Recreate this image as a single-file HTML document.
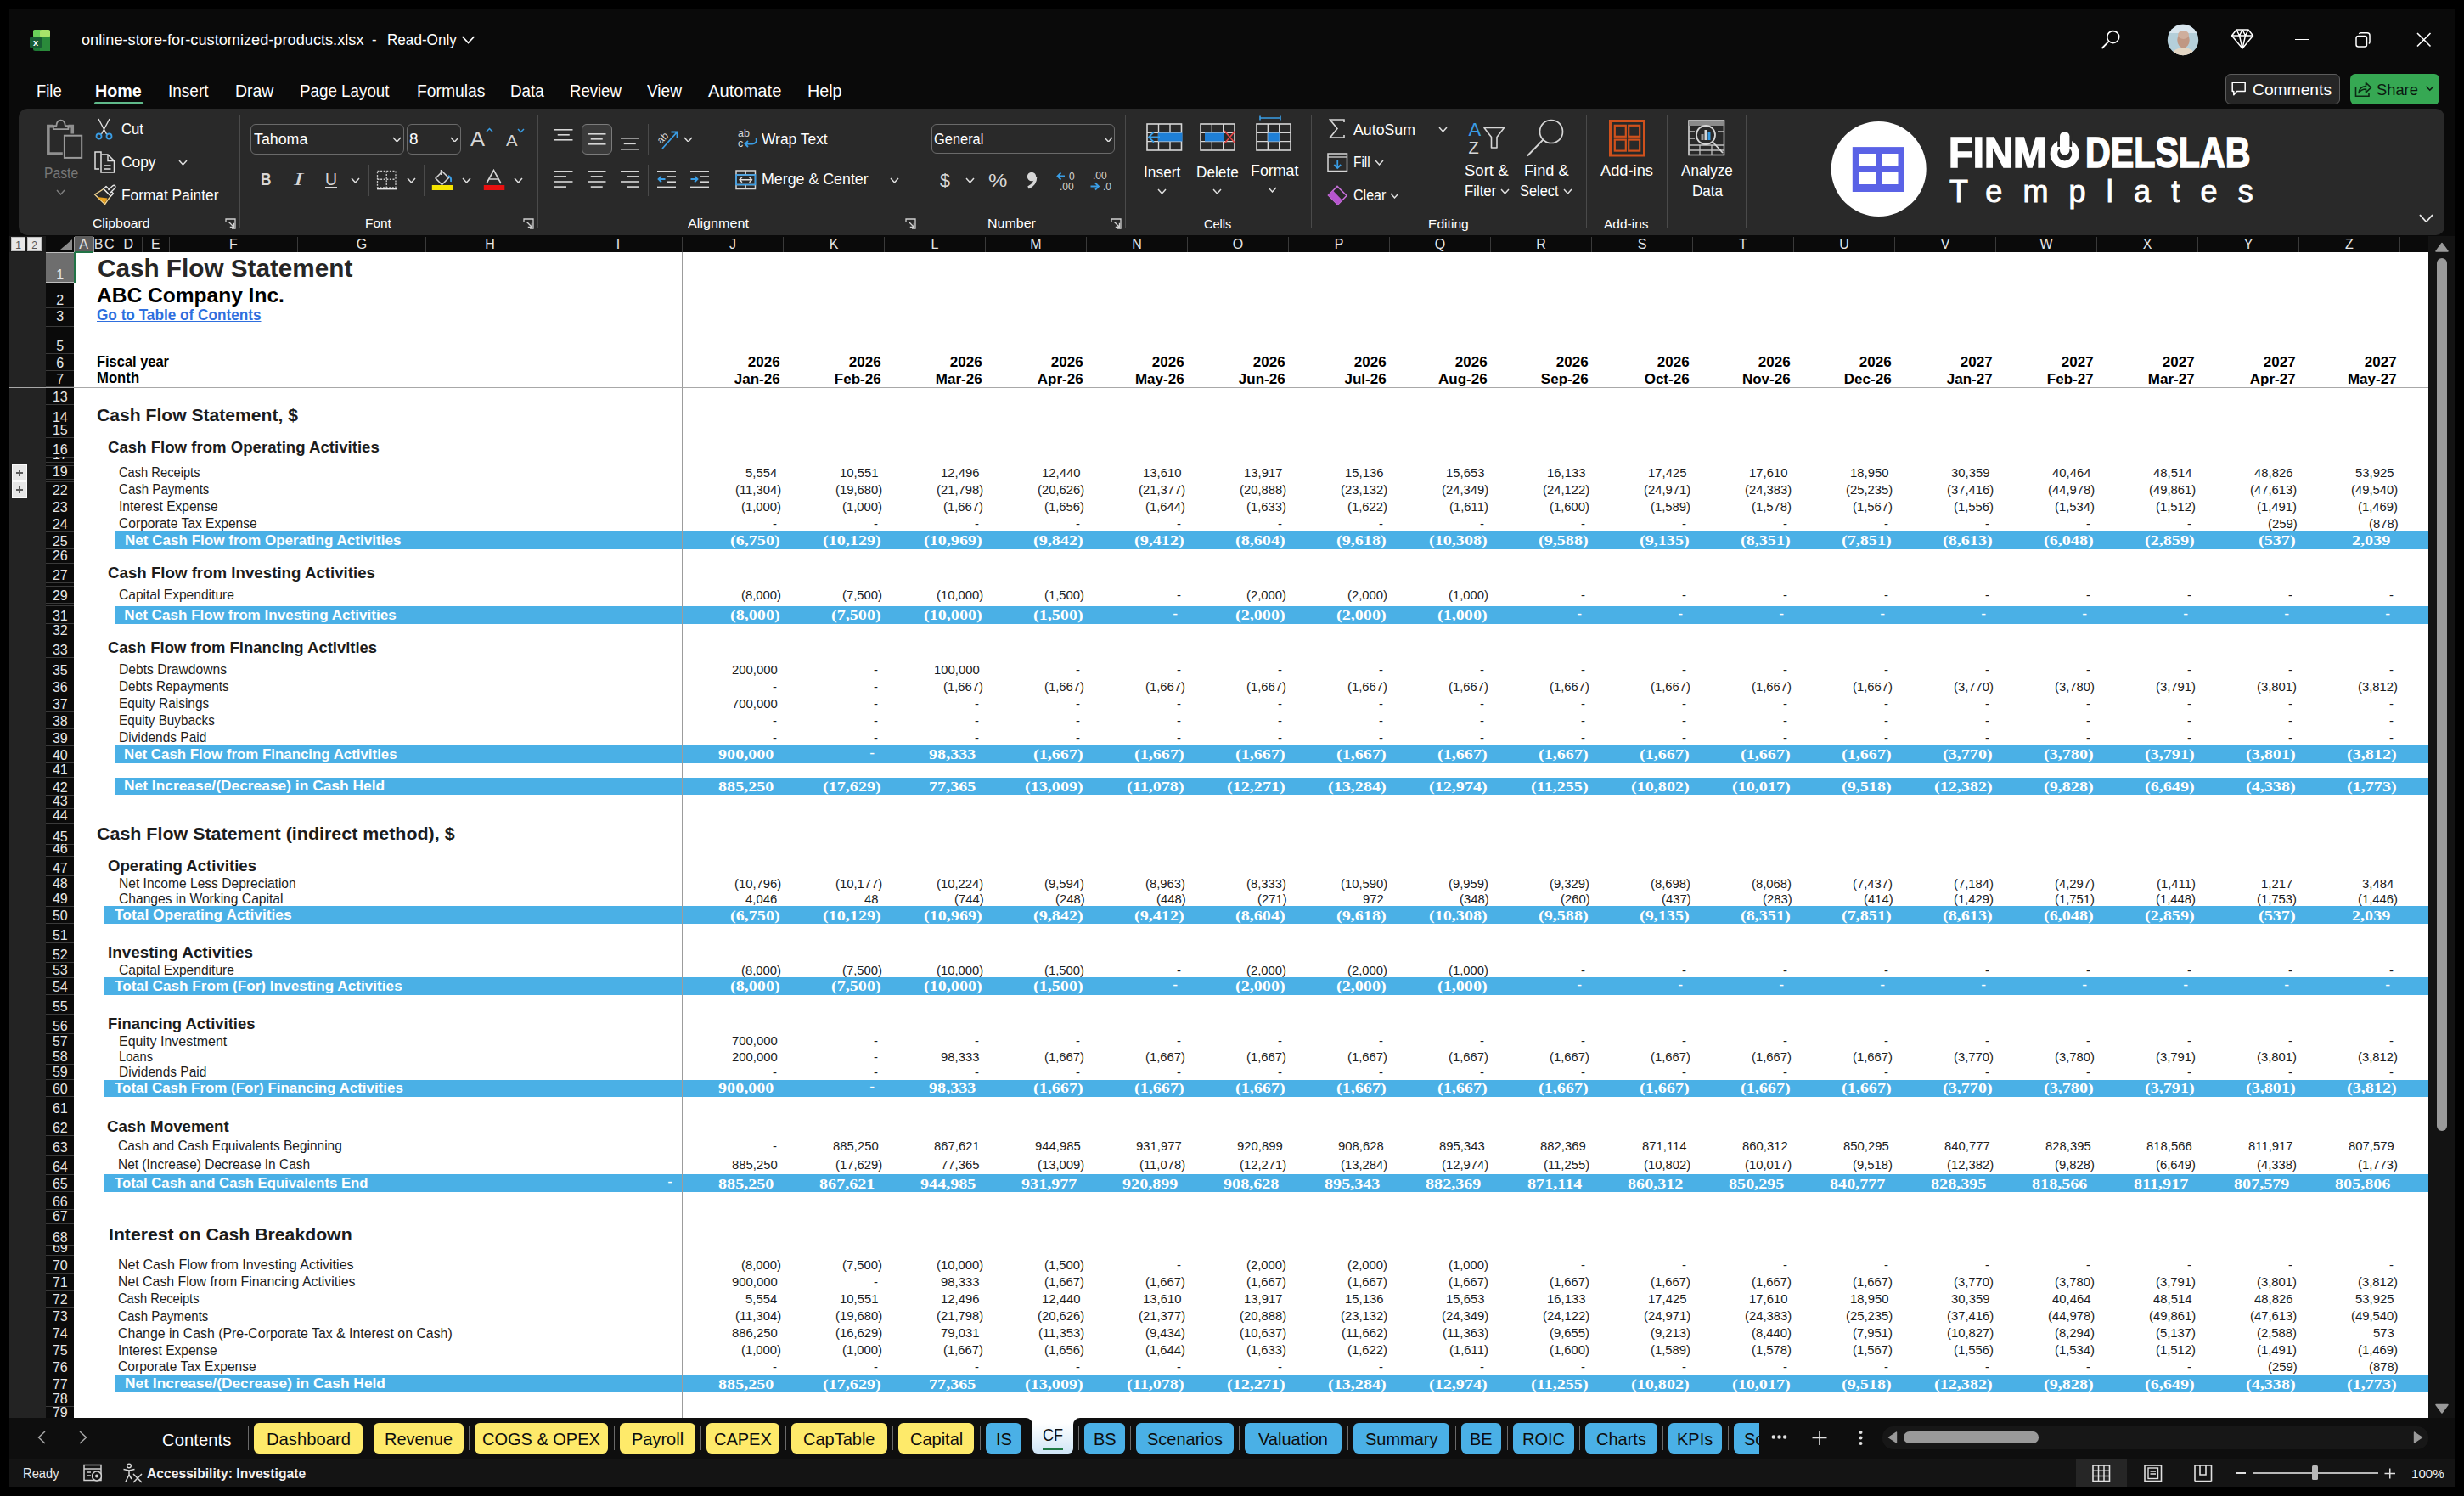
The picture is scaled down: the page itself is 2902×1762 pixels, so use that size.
<!DOCTYPE html><html><head><meta charset="utf-8"><title>Excel</title><style>
html,body{margin:0;padding:0;}body{width:2902px;height:1762px;overflow:hidden;position:relative;background:#000;font-family:"Liberation Sans",sans-serif;}
#root>div,#root>svg{position:absolute;}
</style></head><body><div id="root">
<div style="left:11.00px;top:11.00px;width:2880.00px;height:1740.00px;background:#0a0a0a;"></div>
<svg style="left:34.00px;top:34.00px;" width="26.00" height="27.00" viewBox="0 0 26.00 27.00">
<rect x="5" y="1" width="20" height="25" rx="2.5" fill="#1f7a36"/>
<rect x="5" y="1" width="10" height="9" rx="2" fill="#6ad15a"/>
<rect x="13" y="1" width="12" height="9" rx="2" fill="#a9e46a"/>
<rect x="13" y="9" width="12" height="17" fill="#2a8a3a"/>
<rect x="1" y="9" width="14" height="14" rx="2.5" fill="#185c33"/>
<text x="8" y="20" font-family="Liberation Sans" font-weight="700" font-size="11" fill="#fff" text-anchor="middle">x</text>
</svg>
<div style="left:95.50px;top:38.92px;font-family:'Liberation Sans', sans-serif;font-size:17.50px;font-weight:400;color:#ffffff;line-height:1;white-space:pre;transform:scaleX(1.0391);transform-origin:0 0;">online-store-for-customized-products.xlsx</div>
<div style="left:438.20px;top:38.92px;font-family:'Liberation Sans', sans-serif;font-size:17.50px;font-weight:400;color:#ffffff;line-height:1;white-space:pre;transform:scaleX(0.9437);transform-origin:0 0;">-</div>
<div style="left:455.90px;top:38.92px;font-family:'Liberation Sans', sans-serif;font-size:17.50px;font-weight:400;color:#ffffff;line-height:1;white-space:pre;transform:scaleX(0.9778);transform-origin:0 0;">Read-Only</div>
<svg style="left:543.00px;top:41.00px;" width="18.00" height="12.00" viewBox="0 0 18.00 12.00"><polyline points="1.5,2 8.5,9.5 15.5,2" fill="none" stroke="#fff" stroke-width="1.8"/></svg>
<svg style="left:2472.00px;top:34.00px;" width="26.00" height="26.00" viewBox="0 0 26.00 26.00"><circle cx="16.7" cy="9.6" r="7" fill="none" stroke="#fff" stroke-width="1.6"/><line x1="11.5" y1="14.8" x2="3.5" y2="23" stroke="#fff" stroke-width="1.8"/></svg>
<svg style="left:2552.00px;top:28.00px;" width="38.00" height="38.00" viewBox="0 0 38.00 38.00"><defs><clipPath id="avc"><circle cx="19" cy="19" r="18.2"/></clipPath></defs>
<g clip-path="url(#avc)"><rect x="0" y="0" width="38" height="38" fill="#b4cfda"/><rect x="0" y="0" width="38" height="11" fill="#d9e6ee"/>
<ellipse cx="19.5" cy="19" rx="7.2" ry="9.5" fill="#c09783"/><ellipse cx="19.5" cy="13" rx="6.4" ry="5" fill="#cfae9c"/>
<path d="M5 38 Q8 28 19.5 28 Q31 28 34 38 Z" fill="#e3d6c4"/></g></svg>
<svg style="left:2627.00px;top:33.00px;" width="28.00" height="26.00" viewBox="0 0 28.00 26.00"><path d="M7 2 H21 L26.5 9 L14 24 L1.5 9 Z M1.5 9 H26.5 M7 2 L10.5 9 L14 24 L17.5 9 L21 2 M10.5 9 L14 2 L17.5 9" fill="none" stroke="#fff" stroke-width="1.5" stroke-linejoin="round"/></svg>
<div style="left:2703.00px;top:45.50px;width:16.00px;height:1.50px;background:#fff;"></div>
<svg style="left:2773.00px;top:37.00px;" width="20.00" height="20.00" viewBox="0 0 20.00 20.00"><rect x="2" y="5.5" width="12.5" height="12.5" rx="2.5" fill="none" stroke="#fff" stroke-width="1.5"/><path d="M5.5 3 Q5.8 1.8 7.5 1.8 H15 Q18 1.8 18 4.8 V12.5 Q18 14 16.8 14.4" fill="none" stroke="#fff" stroke-width="1.5"/></svg>
<svg style="left:2845.00px;top:37.00px;" width="20.00" height="20.00" viewBox="0 0 20.00 20.00"><path d="M2 2 L17.5 17.5 M17.5 2 L2 17.5" stroke="#fff" stroke-width="1.6"/></svg>
<div style="left:42.60px;top:96.63px;font-family:'Liberation Sans', sans-serif;font-size:20.20px;font-weight:400;color:#ffffff;line-height:1;white-space:pre;transform:scaleX(0.9099);transform-origin:0 0;">File</div>
<div style="left:111.60px;top:96.63px;font-family:'Liberation Sans', sans-serif;font-size:20.20px;font-weight:700;color:#ffffff;line-height:1;white-space:pre;transform:scaleX(0.9769);transform-origin:0 0;">Home</div>
<div style="left:198.00px;top:96.63px;font-family:'Liberation Sans', sans-serif;font-size:20.20px;font-weight:400;color:#ffffff;line-height:1;white-space:pre;transform:scaleX(0.9406);transform-origin:0 0;">Insert</div>
<div style="left:277.20px;top:96.63px;font-family:'Liberation Sans', sans-serif;font-size:20.20px;font-weight:400;color:#ffffff;line-height:1;white-space:pre;transform:scaleX(0.9637);transform-origin:0 0;">Draw</div>
<div style="left:353.10px;top:96.63px;font-family:'Liberation Sans', sans-serif;font-size:20.20px;font-weight:400;color:#ffffff;line-height:1;white-space:pre;transform:scaleX(0.9305);transform-origin:0 0;">Page Layout</div>
<div style="left:491.00px;top:96.63px;font-family:'Liberation Sans', sans-serif;font-size:20.20px;font-weight:400;color:#ffffff;line-height:1;white-space:pre;transform:scaleX(0.9555);transform-origin:0 0;">Formulas</div>
<div style="left:600.60px;top:96.63px;font-family:'Liberation Sans', sans-serif;font-size:20.20px;font-weight:400;color:#ffffff;line-height:1;white-space:pre;transform:scaleX(0.9330);transform-origin:0 0;">Data</div>
<div style="left:670.50px;top:96.63px;font-family:'Liberation Sans', sans-serif;font-size:20.20px;font-weight:400;color:#ffffff;line-height:1;white-space:pre;transform:scaleX(0.9184);transform-origin:0 0;">Review</div>
<div style="left:761.80px;top:96.63px;font-family:'Liberation Sans', sans-serif;font-size:20.20px;font-weight:400;color:#ffffff;line-height:1;white-space:pre;transform:scaleX(0.9446);transform-origin:0 0;">View</div>
<div style="left:834.00px;top:96.63px;font-family:'Liberation Sans', sans-serif;font-size:20.20px;font-weight:400;color:#ffffff;line-height:1;white-space:pre;">Automate</div>
<div style="left:950.90px;top:96.63px;font-family:'Liberation Sans', sans-serif;font-size:20.20px;font-weight:400;color:#ffffff;line-height:1;white-space:pre;transform:scaleX(0.9776);transform-origin:0 0;">Help</div>
<div style="left:110.80px;top:119.90px;width:58.20px;height:3.10px;background:#5fb98a;border-radius:2px;"></div>
<div style="left:2621.40px;top:87.20px;width:134.40px;height:35.40px;background:#262626;box-sizing:border-box;border:1px solid #5c5c5c;border-radius:6px;"></div>
<svg style="left:2628.00px;top:96.00px;" width="19.00" height="18.00" viewBox="0 0 19.00 18.00"><path d="M1.2 1.2 H16.2 V11.5 H6.5 L2.8 15.8 V11.5 H1.2 Z" fill="none" stroke="#fff" stroke-width="1.5" stroke-linejoin="round"/></svg>
<div style="left:2652.80px;top:96.35px;font-family:'Liberation Sans', sans-serif;font-size:19.00px;font-weight:400;color:#ffffff;line-height:1;white-space:pre;transform:scaleX(1.0124);transform-origin:0 0;">Comments</div>
<div style="left:2768.00px;top:87.20px;width:105.20px;height:35.40px;background:#36a853;border-radius:6px;"></div>
<svg style="left:2773.00px;top:95.00px;" width="21.00" height="20.00" viewBox="0 0 21.00 20.00"><path d="M1.5 8 V18.2 H17 V14" fill="none" stroke="#0c2a14" stroke-width="1.6"/><path d="M5 14.5 Q6 7 13.5 6.5 V2.5 L19.5 8.2 L13.5 13.8 V10 Q8 10 5 14.5 Z" fill="none" stroke="#0c2a14" stroke-width="1.6" stroke-linejoin="round"/></svg>
<div style="left:2799.00px;top:96.35px;font-family:'Liberation Sans', sans-serif;font-size:19.00px;font-weight:400;color:#0c1a10;line-height:1;white-space:pre;transform:scaleX(0.9644);transform-origin:0 0;">Share</div>
<svg style="left:2856.00px;top:100.00px;" width="12.00" height="9.00" viewBox="0 0 12.00 9.00"><polyline points="1.5,1.8 5.8,6.2 10.1,1.8" fill="none" stroke="#0c1a10" stroke-width="1.6"/></svg>
<div style="left:22.40px;top:127.80px;width:2856.40px;height:148.90px;background:#292929;border-radius:10px;"></div>
<div style="left:281.70px;top:135.50px;width:1.00px;height:133.00px;background:#4a4a4a;"></div>
<div style="left:632.70px;top:135.50px;width:1.00px;height:133.00px;background:#4a4a4a;"></div>
<div style="left:1082.80px;top:135.50px;width:1.00px;height:133.00px;background:#4a4a4a;"></div>
<div style="left:1325.40px;top:135.50px;width:1.00px;height:133.00px;background:#4a4a4a;"></div>
<div style="left:1544.00px;top:135.50px;width:1.00px;height:133.00px;background:#4a4a4a;"></div>
<div style="left:1867.80px;top:135.50px;width:1.00px;height:133.00px;background:#4a4a4a;"></div>
<div style="left:1962.90px;top:135.50px;width:1.00px;height:133.00px;background:#4a4a4a;"></div>
<div style="left:2055.60px;top:135.50px;width:1.00px;height:133.00px;background:#4a4a4a;"></div>
<svg style="left:53.00px;top:139.00px;" width="46.00" height="50.00" viewBox="0 0 46.00 50.00"><path d="M9.5 9.65 H3.85 V42.15 H20.8" fill="none" stroke="#8f8f8f" stroke-width="3.6"/>
<path d="M27.5 9.65 H32.25 V18.6" fill="none" stroke="#8f8f8f" stroke-width="3.6"/>
<path d="M9.8 13.2 V9.2 H13.4 Q13.8 2.6 18.6 2.6 Q23.4 2.6 23.8 9.2 H27.4 V13.2 Z" fill="none" stroke="#9a9a9a" stroke-width="1.8" stroke-linejoin="round"/>
<rect x="22.9" y="20.7" width="20.3" height="26.2" fill="none" stroke="#9a9a9a" stroke-width="2"/></svg>
<div style="left:52.10px;top:195.62px;font-family:'Liberation Sans', sans-serif;font-size:17.50px;font-weight:400;color:#777777;line-height:1;white-space:pre;transform:scaleX(0.8961);transform-origin:0 0;">Paste</div>
<svg style="left:66.00px;top:223.03px;" width="11.00" height="6.95" viewBox="0 0 11.00 6.95"><polyline points="1,1 5.50,5.95 10.00,1" fill="none" stroke="#7f7f7f" stroke-width="1.50"/></svg>
<svg style="left:110.00px;top:139.00px;" width="25.00" height="26.00" viewBox="0 0 25.00 26.00"><path d="M6 1 L15.5 19 M19 1 L9.5 19" stroke="#e0e0e0" stroke-width="1.4"/>
<circle cx="6.5" cy="21.5" r="3" fill="none" stroke="#3a9ee6" stroke-width="1.8"/><circle cx="18.5" cy="21.5" r="3" fill="none" stroke="#3a9ee6" stroke-width="1.8"/></svg>
<div style="left:142.60px;top:144.12px;font-family:'Liberation Sans', sans-serif;font-size:17.50px;font-weight:400;color:#ffffff;line-height:1;white-space:pre;transform:scaleX(0.9510);transform-origin:0 0;">Cut</div>
<svg style="left:111.00px;top:178.00px;" width="26.00" height="26.00" viewBox="0 0 26.00 26.00"><path d="M8 3.5 V1 H1 V21 H6" fill="none" stroke="#e0e0e0" stroke-width="1.5"/>
<path d="M8 4 H16 L23.5 11.5 V25 H8 Z" fill="none" stroke="#e0e0e0" stroke-width="1.5"/>
<path d="M16 4 V11.5 H23.5 M12 17 H19.5 M12 21 H19.5" fill="none" stroke="#e0e0e0" stroke-width="1.4"/></svg>
<div style="left:142.60px;top:183.03px;font-family:'Liberation Sans', sans-serif;font-size:17.50px;font-weight:400;color:#ffffff;line-height:1;white-space:pre;transform:scaleX(0.9912);transform-origin:0 0;">Copy</div>
<svg style="left:209.50px;top:188.03px;" width="11.00" height="6.95" viewBox="0 0 11.00 6.95"><polyline points="1,1 5.50,5.95 10.00,1" fill="none" stroke="#e0e0e0" stroke-width="1.50"/></svg>
<svg style="left:110.00px;top:216.00px;" width="27.00" height="26.00" viewBox="0 0 27.00 26.00"><path d="M1.5 13 Q8 9.5 12 6.5 L20.5 15 Q17 19 13.5 24.5 Z" fill="#2a2a2a" stroke="#f2d591" stroke-width="1.4" stroke-linejoin="round"/>
<path d="M4.5 16 L16.5 17.5 Q15 20 13.5 23.5 Z" fill="#eaa21f"/>
<path d="M12 6.5 L15 3.5 L23.5 12 L20.5 15 Z" fill="#2a2a2a" stroke="#e6e6e6" stroke-width="1.4" stroke-linejoin="round"/>
<path d="M17.5 8 L22.5 3 Q24.5 1.5 25.5 3 Q26.5 4.5 25 6 L20 11" fill="#2a2a2a" stroke="#e6e6e6" stroke-width="1.4"/></svg>
<div style="left:142.60px;top:222.03px;font-family:'Liberation Sans', sans-serif;font-size:17.50px;font-weight:400;color:#ffffff;line-height:1;white-space:pre;transform:scaleX(0.9885);transform-origin:0 0;">Format Painter</div>
<div style="left:109.30px;top:254.69px;font-family:'Liberation Sans', sans-serif;font-size:15.30px;font-weight:400;color:#ffffff;line-height:1;white-space:pre;transform:scaleX(1.0293);transform-origin:0 0;">Clipboard</div>
<svg style="left:265.00px;top:256.50px;" width="13.00" height="13.00" viewBox="0 0 13.00 13.00"><path d="M1 5 V1 H12 V12 H8" fill="none" stroke="#d0d0d0" stroke-width="1.3"/><path d="M4.5 4.5 L10.5 10.5 M10.5 5.8 V10.5 H5.8" fill="none" stroke="#d0d0d0" stroke-width="1.4"/></svg>
<div style="left:295.40px;top:146.00px;width:180.20px;height:35.70px;background:#292929;box-sizing:border-box;border:1px solid #6a6a6a;border-radius:6px;"></div>
<div style="left:298.60px;top:156.22px;font-family:'Liberation Sans', sans-serif;font-size:17.50px;font-weight:400;color:#ffffff;line-height:1;white-space:pre;transform:scaleX(1.0166);transform-origin:0 0;">Tahoma</div>
<svg style="left:461.50px;top:160.53px;" width="11.00" height="6.95" viewBox="0 0 11.00 6.95"><polyline points="1,1 5.50,5.95 10.00,1" fill="none" stroke="#e0e0e0" stroke-width="1.50"/></svg>
<div style="left:479.40px;top:146.00px;width:63.90px;height:35.70px;background:#292929;box-sizing:border-box;border:1px solid #6a6a6a;border-radius:6px;"></div>
<div style="left:482.30px;top:156.22px;font-family:'Liberation Sans', sans-serif;font-size:17.50px;font-weight:400;color:#ffffff;line-height:1;white-space:pre;transform:scaleX(1.0787);transform-origin:0 0;">8</div>
<svg style="left:529.50px;top:160.53px;" width="11.00" height="6.95" viewBox="0 0 11.00 6.95"><polyline points="1,1 5.50,5.95 10.00,1" fill="none" stroke="#e0e0e0" stroke-width="1.50"/></svg>
<div style="left:554.40px;top:151.60px;font-family:'Liberation Sans', sans-serif;font-size:24.00px;font-weight:400;color:#d6d6d6;line-height:1;white-space:pre;transform:scaleX(1.0615);transform-origin:0 0;">A</div>
<svg style="left:572.00px;top:150.00px;" width="9.00" height="6.00" viewBox="0 0 9.00 6.00"><polyline points="1,5 4.5,1.5 8,5" fill="none" stroke="#3a9ee6" stroke-width="1.5"/></svg>
<div style="left:596.00px;top:155.85px;font-family:'Liberation Sans', sans-serif;font-size:19.00px;font-weight:400;color:#d6d6d6;line-height:1;white-space:pre;transform:scaleX(1.0640);transform-origin:0 0;">A</div>
<svg style="left:609.00px;top:151.00px;" width="9.00" height="6.00" viewBox="0 0 9.00 6.00"><polyline points="1,1 4.5,4.5 8,1" fill="none" stroke="#3a9ee6" stroke-width="1.5"/></svg>
<div style="left:306.80px;top:201.62px;font-family:'Liberation Sans', sans-serif;font-size:19.50px;font-weight:700;color:#d6d6d6;line-height:1;white-space:pre;transform:scaleX(0.8869);transform-origin:0 0;">B</div>
<div style="left:345.50px;top:200.77px;font-family:'Liberation Serif', serif;font-size:21.00px;font-weight:400;color:#d6d6d6;line-height:1;white-space:pre;transform:scaleX(1.5714);transform-origin:0 0;font-style:italic;">I</div>
<div style="left:383.00px;top:201.62px;font-family:'Liberation Sans', sans-serif;font-size:19.50px;font-weight:400;color:#d6d6d6;line-height:1;white-space:pre;transform:scaleX(0.9933);transform-origin:0 0;">U</div>
<div style="left:383.00px;top:220.00px;width:14.00px;height:1.50px;background:#d6d6d6;"></div>
<svg style="left:413.30px;top:209.03px;" width="11.00" height="6.95" viewBox="0 0 11.00 6.95"><polyline points="1,1 5.50,5.95 10.00,1" fill="none" stroke="#e0e0e0" stroke-width="1.50"/></svg>
<div style="left:433.70px;top:194.00px;width:1.00px;height:36.50px;background:#4a4a4a;"></div>
<svg style="left:443.00px;top:199.50px;" width="25.00" height="24.00" viewBox="0 0 25.00 24.00"><rect x="1.5" y="1.5" width="21.5" height="19.5" fill="none" stroke="#c8c8c8" stroke-width="1.3" stroke-dasharray="2,1.6"/>
<path d="M12.25 1.5 V21 M1.5 11.25 H23" stroke="#c8c8c8" stroke-width="1.3" stroke-dasharray="2,1.6"/>
<line x1="1" y1="22.5" x2="24" y2="22.5" stroke="#e8e8e8" stroke-width="1.8"/></svg>
<svg style="left:478.70px;top:209.03px;" width="11.00" height="6.95" viewBox="0 0 11.00 6.95"><polyline points="1,1 5.50,5.95 10.00,1" fill="none" stroke="#e0e0e0" stroke-width="1.50"/></svg>
<div style="left:498.70px;top:194.00px;width:1.00px;height:36.50px;background:#4a4a4a;"></div>
<svg style="left:508.00px;top:199.00px;" width="27.00" height="26.00" viewBox="0 0 27.00 26.00"><path d="M5 11 L13 3 L20.5 10.5 L12.5 18.5 Z" fill="none" stroke="#d6d6d6" stroke-width="1.5"/>
<path d="M11.5 1 V7" stroke="#d6d6d6" stroke-width="1.5"/><path d="M20 8 Q24 10 23 15" fill="none" stroke="#3a9ee6" stroke-width="2"/>
<rect x="0.8" y="19" width="24.5" height="6" fill="#f5e400"/></svg>
<svg style="left:543.70px;top:209.03px;" width="11.00" height="6.95" viewBox="0 0 11.00 6.95"><polyline points="1,1 5.50,5.95 10.00,1" fill="none" stroke="#e0e0e0" stroke-width="1.50"/></svg>
<svg style="left:569.00px;top:199.00px;" width="26.00" height="26.00" viewBox="0 0 26.00 26.00"><path d="M4 17 L12.5 1.5 L21 17 M7 12 H18" fill="none" stroke="#d6d6d6" stroke-width="1.6"/><rect x="0.8" y="19" width="24.5" height="6" fill="#e81010"/></svg>
<svg style="left:604.90px;top:209.03px;" width="11.00" height="6.95" viewBox="0 0 11.00 6.95"><polyline points="1,1 5.50,5.95 10.00,1" fill="none" stroke="#e0e0e0" stroke-width="1.50"/></svg>
<div style="left:430.20px;top:254.69px;font-family:'Liberation Sans', sans-serif;font-size:15.30px;font-weight:400;color:#ffffff;line-height:1;white-space:pre;transform:scaleX(1.0062);transform-origin:0 0;">Font</div>
<svg style="left:615.50px;top:256.50px;" width="13.00" height="13.00" viewBox="0 0 13.00 13.00"><path d="M1 5 V1 H12 V12 H8" fill="none" stroke="#d0d0d0" stroke-width="1.3"/><path d="M4.5 4.5 L10.5 10.5 M10.5 5.8 V10.5 H5.8" fill="none" stroke="#d0d0d0" stroke-width="1.4"/></svg>
<svg style="left:653.30px;top:151.50px;" width="21.50" height="20.00" viewBox="0 0 21.50 20.00"><rect x="0.00" y="0.00" width="21.50" height="1.6" fill="#d6d6d6"/><rect x="3.75" y="6.00" width="14.00" height="1.6" fill="#d6d6d6"/><rect x="0.00" y="12.00" width="21.50" height="1.6" fill="#d6d6d6"/></svg>
<div style="left:685.00px;top:146.10px;width:36.10px;height:35.50px;background:#3b3b3b;box-sizing:border-box;border:1px solid #7c7c7c;border-radius:6px;"></div>
<svg style="left:692.00px;top:156.50px;" width="21.50" height="20.00" viewBox="0 0 21.50 20.00"><rect x="0.00" y="0.00" width="21.50" height="1.6" fill="#d6d6d6"/><rect x="3.75" y="6.00" width="14.00" height="1.6" fill="#d6d6d6"/><rect x="0.00" y="12.00" width="21.50" height="1.6" fill="#d6d6d6"/></svg>
<svg style="left:730.80px;top:162.00px;" width="21.50" height="21.50" viewBox="0 0 21.50 21.50"><rect x="0.00" y="0.00" width="21.50" height="1.6" fill="#d6d6d6"/><rect x="3.75" y="6.50" width="14.00" height="1.6" fill="#d6d6d6"/><rect x="0.00" y="13.00" width="21.50" height="1.6" fill="#d6d6d6"/></svg>
<div style="left:763.00px;top:146.00px;width:1.00px;height:35.60px;background:#4a4a4a;"></div>
<svg style="left:771.00px;top:150.00px;" width="30.00" height="27.00" viewBox="0 0 30.00 27.00"><text x="3" y="17" font-family="Liberation Sans" font-size="12" fill="#d6d6d6" transform="rotate(-45 9 13)">ab</text>
<path d="M9 25 L26 6 M19.5 5.5 H26.5 V12.5" fill="none" stroke="#3a9ee6" stroke-width="1.8"/></svg>
<svg style="left:804.50px;top:160.53px;" width="11.00" height="6.95" viewBox="0 0 11.00 6.95"><polyline points="1,1 5.50,5.95 10.00,1" fill="none" stroke="#e0e0e0" stroke-width="1.50"/></svg>
<svg style="left:653.30px;top:201.20px;" width="21.50" height="26.40" viewBox="0 0 21.50 26.40"><rect x="0.00" y="0.00" width="21.50" height="1.6" fill="#d6d6d6"/><rect x="0.00" y="6.10" width="14.00" height="1.6" fill="#d6d6d6"/><rect x="0.00" y="12.20" width="21.50" height="1.6" fill="#d6d6d6"/><rect x="0.00" y="18.30" width="14.00" height="1.6" fill="#d6d6d6"/></svg>
<svg style="left:692.20px;top:201.20px;" width="21.50" height="26.40" viewBox="0 0 21.50 26.40"><rect x="0.00" y="0.00" width="21.50" height="1.6" fill="#d6d6d6"/><rect x="3.75" y="6.10" width="14.00" height="1.6" fill="#d6d6d6"/><rect x="0.00" y="12.20" width="21.50" height="1.6" fill="#d6d6d6"/><rect x="3.75" y="18.30" width="14.00" height="1.6" fill="#d6d6d6"/></svg>
<svg style="left:731.20px;top:201.20px;" width="21.50" height="26.40" viewBox="0 0 21.50 26.40"><rect x="0.00" y="0.00" width="21.50" height="1.6" fill="#d6d6d6"/><rect x="7.50" y="6.10" width="14.00" height="1.6" fill="#d6d6d6"/><rect x="0.00" y="12.20" width="21.50" height="1.6" fill="#d6d6d6"/><rect x="7.50" y="18.30" width="14.00" height="1.6" fill="#d6d6d6"/></svg>
<div style="left:763.00px;top:194.00px;width:1.00px;height:36.50px;background:#4a4a4a;"></div>
<svg style="left:773.50px;top:200.50px;" width="23.00" height="22.00" viewBox="0 0 23.00 22.00"><rect x="0" y="0" width="22" height="1.6" fill="#d6d6d6"/><rect x="12" y="6.2" width="10" height="1.6" fill="#d6d6d6"/>
<rect x="12" y="12.4" width="10" height="1.6" fill="#d6d6d6"/><rect x="0" y="18.6" width="22" height="1.6" fill="#d6d6d6"/>
<path d="M9.5 10 H1.5 M5 6.5 L1.5 10 L5 13.5" fill="none" stroke="#3a9ee6" stroke-width="1.8"/></svg>
<svg style="left:812.50px;top:200.50px;" width="23.00" height="22.00" viewBox="0 0 23.00 22.00"><rect x="0" y="0" width="22" height="1.6" fill="#d6d6d6"/><rect x="12" y="6.2" width="10" height="1.6" fill="#d6d6d6"/>
<rect x="12" y="12.4" width="10" height="1.6" fill="#d6d6d6"/><rect x="0" y="18.6" width="22" height="1.6" fill="#d6d6d6"/>
<path d="M0.5 10 H8.5 M5 6.5 L8.5 10 L5 13.5" fill="none" stroke="#3a9ee6" stroke-width="1.8"/></svg>
<div style="left:851.30px;top:144.00px;width:1.00px;height:93.60px;background:#4a4a4a;"></div>
<svg style="left:868.00px;top:151.00px;" width="26.00" height="24.00" viewBox="0 0 26.00 24.00"><text x="1" y="10" font-family="Liberation Sans" font-size="12.5" fill="#d6d6d6">ab</text><text x="1" y="22" font-family="Liberation Sans" font-size="12.5" fill="#d6d6d6">c</text>
<path d="M22.5 12 Q24 18 18 18.5 H9.5 M13 15 L9.5 18.5 L13 22" fill="none" stroke="#3a9ee6" stroke-width="1.8"/></svg>
<div style="left:897.30px;top:155.53px;font-family:'Liberation Sans', sans-serif;font-size:17.50px;font-weight:400;color:#ffffff;line-height:1;white-space:pre;transform:scaleX(0.9944);transform-origin:0 0;">Wrap Text</div>
<svg style="left:866.00px;top:199.50px;" width="25.00" height="24.00" viewBox="0 0 25.00 24.00"><rect x="1" y="1" width="22.5" height="21.5" fill="none" stroke="#d6d6d6" stroke-width="1.5"/>
<path d="M1 6 H23.5 M1 17.5 H23.5 M12.25 1 V6 M12.25 17.5 V22.5" stroke="#d6d6d6" stroke-width="1.3"/>
<rect x="1" y="6" width="22.5" height="11.5" fill="none" stroke="#3a9ee6" stroke-width="1.6"/>
<path d="M5 11.75 H19.5 M8 8.8 L5 11.75 L8 14.7 M16.5 8.8 L19.5 11.75 L16.5 14.7" fill="none" stroke="#e0e0e0" stroke-width="1.4"/></svg>
<div style="left:897.30px;top:203.12px;font-family:'Liberation Sans', sans-serif;font-size:17.50px;font-weight:400;color:#ffffff;line-height:1;white-space:pre;transform:scaleX(1.0176);transform-origin:0 0;">Merge &amp; Center</div>
<svg style="left:1048.20px;top:209.03px;" width="11.00" height="6.95" viewBox="0 0 11.00 6.95"><polyline points="1,1 5.50,5.95 10.00,1" fill="none" stroke="#e0e0e0" stroke-width="1.50"/></svg>
<div style="left:810.10px;top:254.50px;font-family:'Liberation Sans', sans-serif;font-size:15.30px;font-weight:400;color:#ffffff;line-height:1;white-space:pre;transform:scaleX(1.0569);transform-origin:0 0;">Alignment</div>
<svg style="left:1065.50px;top:256.50px;" width="13.00" height="13.00" viewBox="0 0 13.00 13.00"><path d="M1 5 V1 H12 V12 H8" fill="none" stroke="#d0d0d0" stroke-width="1.3"/><path d="M4.5 4.5 L10.5 10.5 M10.5 5.8 V10.5 H5.8" fill="none" stroke="#d0d0d0" stroke-width="1.4"/></svg>
<div style="left:1096.60px;top:146.30px;width:216.80px;height:35.10px;background:#292929;box-sizing:border-box;border:1px solid #6a6a6a;border-radius:6px;"></div>
<div style="left:1099.50px;top:156.12px;font-family:'Liberation Sans', sans-serif;font-size:17.50px;font-weight:400;color:#ffffff;line-height:1;white-space:pre;transform:scaleX(0.9379);transform-origin:0 0;">General</div>
<svg style="left:1299.50px;top:160.53px;" width="11.00" height="6.95" viewBox="0 0 11.00 6.95"><polyline points="1,1 5.50,5.95 10.00,1" fill="none" stroke="#e0e0e0" stroke-width="1.50"/></svg>
<div style="left:1107.00px;top:202.30px;font-family:'Liberation Sans', sans-serif;font-size:22.00px;font-weight:400;color:#d6d6d6;line-height:1;white-space:pre;transform:scaleX(0.9796);transform-origin:0 0;">$</div>
<svg style="left:1136.50px;top:209.03px;" width="11.00" height="6.95" viewBox="0 0 11.00 6.95"><polyline points="1,1 5.50,5.95 10.00,1" fill="none" stroke="#e0e0e0" stroke-width="1.50"/></svg>
<div style="left:1163.80px;top:202.30px;font-family:'Liberation Sans', sans-serif;font-size:22.00px;font-weight:400;color:#d6d6d6;line-height:1;white-space:pre;transform:scaleX(1.1450);transform-origin:0 0;">%</div>
<svg style="left:1208.00px;top:201.00px;" width="14.00" height="22.00" viewBox="0 0 14.00 22.00"><circle cx="7" cy="7" r="5.2" fill="#d6d6d6"/><path d="M11.6 8 Q11.5 16 3 20" fill="none" stroke="#d6d6d6" stroke-width="3.4"/></svg>
<div style="left:1235.00px;top:194.00px;width:1.00px;height:36.50px;background:#4a4a4a;"></div>
<svg style="left:1243.50px;top:199.50px;" width="27.00" height="25.00" viewBox="0 0 27.00 25.00"><path d="M10 7.5 H1.5 M5.5 3.5 L1.5 7.5 L5.5 11.5" fill="none" stroke="#3a9ee6" stroke-width="1.8"/>
<text x="15" y="12" font-family="Liberation Sans" font-size="12" fill="#d6d6d6">0</text><text x="4" y="24" font-family="Liberation Sans" font-size="12" fill="#d6d6d6">.00</text></svg>
<svg style="left:1282.50px;top:199.50px;" width="27.00" height="25.00" viewBox="0 0 27.00 25.00"><text x="4" y="11" font-family="Liberation Sans" font-size="12" fill="#d6d6d6">.00</text><text x="16" y="24" font-family="Liberation Sans" font-size="12" fill="#d6d6d6">.0</text>
<path d="M1.5 19.5 H11 M7 15.5 L11 19.5 L7 23.5" fill="none" stroke="#3a9ee6" stroke-width="1.8"/></svg>
<div style="left:1163.40px;top:255.10px;font-family:'Liberation Sans', sans-serif;font-size:15.30px;font-weight:400;color:#ffffff;line-height:1;white-space:pre;transform:scaleX(1.0458);transform-origin:0 0;">Number</div>
<svg style="left:1307.50px;top:256.50px;" width="13.00" height="13.00" viewBox="0 0 13.00 13.00"><path d="M1 5 V1 H12 V12 H8" fill="none" stroke="#d0d0d0" stroke-width="1.3"/><path d="M4.5 4.5 L10.5 10.5 M10.5 5.8 V10.5 H5.8" fill="none" stroke="#d0d0d0" stroke-width="1.4"/></svg>
<svg style="left:1350.00px;top:145.30px;" width="42.50" height="33.00" viewBox="0 0 42.50 33.00"><rect x="1" y="1" width="40.5" height="31.0" fill="none" stroke="#d6d6d6" stroke-width="1.6"/><line x1="14.50" y1="1" x2="14.50" y2="32.0" stroke="#d6d6d6" stroke-width="1.4"/><line x1="1" y1="11.33" x2="41.5" y2="11.33" stroke="#d6d6d6" stroke-width="1.4"/><line x1="28.00" y1="1" x2="28.00" y2="32.0" stroke="#d6d6d6" stroke-width="1.4"/><line x1="1" y1="21.67" x2="41.5" y2="21.67" stroke="#d6d6d6" stroke-width="1.4"/><rect x="14" y="11.5" width="28.5" height="10" fill="#1e7fd6"/><path d="M16 16.5 H3 M9 10.5 L3 16.5 L9 22.5" fill="none" stroke="#3a9ee6" stroke-width="1.8"/></svg>
<div style="left:1347.30px;top:195.12px;font-family:'Liberation Sans', sans-serif;font-size:17.50px;font-weight:400;color:#ffffff;line-height:1;white-space:pre;transform:scaleX(0.9913);transform-origin:0 0;">Insert</div>
<svg style="left:1362.80px;top:222.03px;" width="11.00" height="6.95" viewBox="0 0 11.00 6.95"><polyline points="1,1 5.50,5.95 10.00,1" fill="none" stroke="#e0e0e0" stroke-width="1.50"/></svg>
<svg style="left:1413.00px;top:145.30px;" width="42.00" height="33.00" viewBox="0 0 42.00 33.00"><rect x="1" y="1" width="40.0" height="31.0" fill="none" stroke="#d6d6d6" stroke-width="1.6"/><line x1="14.33" y1="1" x2="14.33" y2="32.0" stroke="#d6d6d6" stroke-width="1.4"/><line x1="1" y1="11.33" x2="41.0" y2="11.33" stroke="#d6d6d6" stroke-width="1.4"/><line x1="27.67" y1="1" x2="27.67" y2="32.0" stroke="#d6d6d6" stroke-width="1.4"/><line x1="1" y1="21.67" x2="41.0" y2="21.67" stroke="#d6d6d6" stroke-width="1.4"/><rect x="6" y="11.5" width="22" height="10" fill="#1e7fd6"/><path d="M29 9 L42 24 M42 9 L29 24" stroke="#e04545" stroke-width="1.8"/></svg>
<div style="left:1409.20px;top:195.12px;font-family:'Liberation Sans', sans-serif;font-size:17.50px;font-weight:400;color:#ffffff;line-height:1;white-space:pre;transform:scaleX(0.9843);transform-origin:0 0;">Delete</div>
<svg style="left:1427.50px;top:222.03px;" width="11.00" height="6.95" viewBox="0 0 11.00 6.95"><polyline points="1,1 5.50,5.95 10.00,1" fill="none" stroke="#e0e0e0" stroke-width="1.50"/></svg>
<svg style="left:1479.00px;top:145.30px;" width="42.00" height="33.00" viewBox="0 0 42.00 33.00"><rect x="1" y="1" width="40.0" height="31.0" fill="none" stroke="#d6d6d6" stroke-width="1.6"/><line x1="14.33" y1="1" x2="14.33" y2="32.0" stroke="#d6d6d6" stroke-width="1.4"/><line x1="1" y1="11.33" x2="41.0" y2="11.33" stroke="#d6d6d6" stroke-width="1.4"/><line x1="27.67" y1="1" x2="27.67" y2="32.0" stroke="#d6d6d6" stroke-width="1.4"/><line x1="1" y1="21.67" x2="41.0" y2="21.67" stroke="#d6d6d6" stroke-width="1.4"/><rect x="14.3" y="11.6" width="13.5" height="10" fill="#1e7fd6"/></svg>
<svg style="left:1483.00px;top:136.00px;" width="26.00" height="6.00" viewBox="0 0 26.00 6.00"><path d="M1 0.5 V5.5 M25 0.5 V5.5 M1 3 H25" stroke="#3a9ee6" stroke-width="1.6"/></svg>
<div style="left:1472.60px;top:193.12px;font-family:'Liberation Sans', sans-serif;font-size:17.50px;font-weight:400;color:#ffffff;line-height:1;white-space:pre;transform:scaleX(1.0174);transform-origin:0 0;">Format</div>
<svg style="left:1493.40px;top:220.03px;" width="11.00" height="6.95" viewBox="0 0 11.00 6.95"><polyline points="1,1 5.50,5.95 10.00,1" fill="none" stroke="#e0e0e0" stroke-width="1.50"/></svg>
<div style="left:1418.00px;top:256.00px;font-family:'Liberation Sans', sans-serif;font-size:15.30px;font-weight:400;color:#ffffff;line-height:1;white-space:pre;transform:scaleX(0.9471);transform-origin:0 0;">Cells</div>
<svg style="left:1565.00px;top:140.00px;" width="20.00" height="24.00" viewBox="0 0 20.00 24.00"><path d="M18 4 V1 H1.5 L10 11.5 L1.5 22 H18 V19" fill="none" stroke="#d6d6d6" stroke-width="1.6" stroke-linejoin="miter"/></svg>
<div style="left:1593.70px;top:144.53px;font-family:'Liberation Sans', sans-serif;font-size:17.50px;font-weight:400;color:#ffffff;line-height:1;white-space:pre;transform:scaleX(1.0141);transform-origin:0 0;">AutoSum</div>
<svg style="left:1693.50px;top:149.03px;" width="11.00" height="6.95" viewBox="0 0 11.00 6.95"><polyline points="1,1 5.50,5.95 10.00,1" fill="none" stroke="#e0e0e0" stroke-width="1.50"/></svg>
<svg style="left:1562.50px;top:179.50px;" width="25.00" height="23.00" viewBox="0 0 25.00 23.00"><rect x="1" y="1" width="22.5" height="20.5" fill="none" stroke="#d6d6d6" stroke-width="1.5"/><line x1="1" y1="5" x2="23.5" y2="5" stroke="#d6d6d6" stroke-width="1.3"/><path d="M12.25 8 V18 M8.3 14 L12.25 18 L16.2 14" fill="none" stroke="#3a9ee6" stroke-width="1.8"/></svg>
<div style="left:1593.70px;top:182.93px;font-family:'Liberation Sans', sans-serif;font-size:17.50px;font-weight:400;color:#ffffff;line-height:1;white-space:pre;transform:scaleX(0.8811);transform-origin:0 0;">Fill</div>
<svg style="left:1618.90px;top:188.03px;" width="11.00" height="6.95" viewBox="0 0 11.00 6.95"><polyline points="1,1 5.50,5.95 10.00,1" fill="none" stroke="#e0e0e0" stroke-width="1.50"/></svg>
<svg style="left:1562.50px;top:218.00px;" width="25.00" height="24.00" viewBox="0 0 25.00 24.00"><path d="M1.5 12 L12 1.5 L23 12.5 L12.5 23 Z" fill="none" stroke="#c46fd6" stroke-width="1.6"/><path d="M1.5 12 L7 6.5 L17.5 17.5 L12.5 23 Z" fill="#b656cf"/></svg>
<div style="left:1593.70px;top:222.32px;font-family:'Liberation Sans', sans-serif;font-size:17.50px;font-weight:400;color:#ffffff;line-height:1;white-space:pre;transform:scaleX(0.9157);transform-origin:0 0;">Clear</div>
<svg style="left:1637.10px;top:227.03px;" width="11.00" height="6.95" viewBox="0 0 11.00 6.95"><polyline points="1,1 5.50,5.95 10.00,1" fill="none" stroke="#e0e0e0" stroke-width="1.50"/></svg>
<svg style="left:1728.50px;top:141.00px;" width="45.00" height="43.00" viewBox="0 0 45.00 43.00"><text x="0.5" y="19" font-family="Liberation Sans" font-size="22" fill="#3a9ee6">A</text>
<text x="0.5" y="40" font-family="Liberation Sans" font-size="20" fill="#d6d6d6">Z</text>
<path d="M19 9.5 H42.5 L34 20.5 V33 H27.5 V20.5 Z" fill="none" stroke="#d6d6d6" stroke-width="1.6" stroke-linejoin="round"/></svg>
<div style="left:1725.20px;top:192.82px;font-family:'Liberation Sans', sans-serif;font-size:17.50px;font-weight:400;color:#ffffff;line-height:1;white-space:pre;transform:scaleX(1.0588);transform-origin:0 0;">Sort &amp;</div>
<div style="left:1725.20px;top:216.93px;font-family:'Liberation Sans', sans-serif;font-size:17.50px;font-weight:400;color:#ffffff;line-height:1;white-space:pre;transform:scaleX(0.9565);transform-origin:0 0;">Filter</div>
<svg style="left:1766.80px;top:222.03px;" width="11.00" height="6.95" viewBox="0 0 11.00 6.95"><polyline points="1,1 5.50,5.95 10.00,1" fill="none" stroke="#e0e0e0" stroke-width="1.50"/></svg>
<svg style="left:1797.00px;top:140.00px;" width="46.00" height="46.00" viewBox="0 0 46.00 46.00"><circle cx="30" cy="15" r="13.5" fill="none" stroke="#d6d6d6" stroke-width="1.7"/><line x1="20.5" y1="24.5" x2="2" y2="43.5" stroke="#d6d6d6" stroke-width="1.8"/></svg>
<div style="left:1795.30px;top:192.82px;font-family:'Liberation Sans', sans-serif;font-size:17.50px;font-weight:400;color:#ffffff;line-height:1;white-space:pre;transform:scaleX(1.0400);transform-origin:0 0;">Find &amp;</div>
<div style="left:1790.30px;top:216.93px;font-family:'Liberation Sans', sans-serif;font-size:17.50px;font-weight:400;color:#ffffff;line-height:1;white-space:pre;transform:scaleX(0.9375);transform-origin:0 0;">Select</div>
<svg style="left:1841.30px;top:222.03px;" width="11.00" height="6.95" viewBox="0 0 11.00 6.95"><polyline points="1,1 5.50,5.95 10.00,1" fill="none" stroke="#e0e0e0" stroke-width="1.50"/></svg>
<div style="left:1682.40px;top:256.00px;font-family:'Liberation Sans', sans-serif;font-size:15.30px;font-weight:400;color:#ffffff;line-height:1;white-space:pre;transform:scaleX(1.0218);transform-origin:0 0;">Editing</div>
<svg style="left:1894.50px;top:140.50px;" width="43.00" height="44.00" viewBox="0 0 43.00 44.00"><rect x="1.5" y="1.5" width="40" height="40.5" fill="none" stroke="#d0511c" stroke-width="3"/>
<rect x="6.8" y="6.8" width="13" height="13" fill="none" stroke="#d0511c" stroke-width="2.2"/><rect x="23.2" y="6.8" width="13" height="13" fill="none" stroke="#d0511c" stroke-width="2.2"/>
<rect x="6.8" y="23.6" width="13" height="13" fill="none" stroke="#d0511c" stroke-width="2.2"/><rect x="23.2" y="23.6" width="13" height="13" fill="none" stroke="#d0511c" stroke-width="2.2"/></svg>
<div style="left:1885.20px;top:192.82px;font-family:'Liberation Sans', sans-serif;font-size:17.50px;font-weight:400;color:#ffffff;line-height:1;white-space:pre;transform:scaleX(1.0448);transform-origin:0 0;">Add-ins</div>
<div style="left:1888.50px;top:256.00px;font-family:'Liberation Sans', sans-serif;font-size:15.30px;font-weight:400;color:#ffffff;line-height:1;white-space:pre;transform:scaleX(1.0120);transform-origin:0 0;">Add-ins</div>
<svg style="left:1988.00px;top:140.50px;" width="44.00" height="43.00" viewBox="0 0 44.00 43.00"><rect x="1" y="1" width="41.5" height="40.5" fill="none" stroke="#d6d6d6" stroke-width="1.6"/>
<rect x="1" y="1" width="41.5" height="6" fill="#8a8a8a"/>
<path d="M1 30 H42.5 M1 36 H42.5 M14 30 V41.5 M28 30 V41.5 M1 14 H8 M35 14 H42.5 M1 22 H8" stroke="#c0c0c0" stroke-width="1.3"/>
<circle cx="21" cy="18" r="11" fill="#292929" stroke="#d6d6d6" stroke-width="1.8"/>
<rect x="15.5" y="17" width="3" height="7" fill="#9a9a9a"/><rect x="19.5" y="12" width="3" height="12" fill="#d6d6d6"/><rect x="23.5" y="14.5" width="3" height="9.5" fill="#3a9ee6"/>
<line x1="29" y1="26" x2="41" y2="39" stroke="#d6d6d6" stroke-width="1.8"/></svg>
<div style="left:1980.00px;top:192.82px;font-family:'Liberation Sans', sans-serif;font-size:17.50px;font-weight:400;color:#ffffff;line-height:1;white-space:pre;transform:scaleX(0.9765);transform-origin:0 0;">Analyze</div>
<div style="left:1992.60px;top:216.93px;font-family:'Liberation Sans', sans-serif;font-size:17.50px;font-weight:400;color:#ffffff;line-height:1;white-space:pre;transform:scaleX(0.9765);transform-origin:0 0;">Data</div>
<svg style="left:2155.00px;top:141.00px;" width="116.00" height="116.00" viewBox="0 0 116.00 116.00"><circle cx="57.7" cy="58" r="56" fill="#ffffff"/>
<rect x="26.8" y="32.1" width="61.1" height="52.9" fill="#5a62e6"/>
<rect x="34.5" y="40" width="19.5" height="14.5" fill="#fff"/><rect x="61" y="40" width="19.5" height="14.5" fill="#fff"/>
<rect x="34.5" y="61.5" width="19.5" height="14.5" fill="#fff"/><rect x="61" y="61.5" width="19.5" height="14.5" fill="#fff"/></svg>
<div style="left:2294.80px;top:154.50px;font-family:'Liberation Sans', sans-serif;font-size:50.00px;font-weight:700;color:#fff;line-height:1;white-space:pre;transform:scaleX(0.9451);transform-origin:0 0;-webkit-text-stroke:1.6px #fff;">FINM</div>
<div style="left:2455.50px;top:154.50px;font-family:'Liberation Sans', sans-serif;font-size:50.00px;font-weight:700;color:#fff;line-height:1;white-space:pre;transform:scaleX(0.8238);transform-origin:0 0;-webkit-text-stroke:1.6px #fff;">DELSLAB</div>
<svg style="left:2410.00px;top:150.00px;" width="44.00" height="52.00" viewBox="0 0 44.00 52.00"><circle cx="21.7" cy="31" r="12.8" fill="none" stroke="#fff" stroke-width="8.6"/><rect x="13.2" y="4" width="17" height="19" fill="#292929"/><rect x="16" y="5.2" width="11.4" height="27" rx="5.2" fill="#fff"/></svg>
<div style="left:2296.00px;top:207.90px;font-family:'Liberation Sans', sans-serif;font-size:36.00px;font-weight:400;color:#fff;line-height:1;white-space:pre;letter-spacing:24.20px;-webkit-text-stroke:0.9px #fff;">Templates</div>
<svg style="left:2848.80px;top:251.88px;" width="17.00" height="10.25" viewBox="0 0 17.00 10.25"><polyline points="1,1 8.50,9.25 16.00,1" fill="none" stroke="#e8e8e8" stroke-width="1.80"/></svg>
<div style="left:11.00px;top:278.00px;width:43.00px;height:1392.00px;background:#232323;"></div>
<div style="left:54.00px;top:278.00px;width:2806.00px;height:19.00px;background:#0a0a0a;"></div>
<div style="left:11.00px;top:278.00px;width:43.00px;height:19.00px;background:#1a1a1a;"></div>
<div style="left:54.00px;top:297.00px;width:33.00px;height:1373.00px;background:#0a0a0a;"></div>
<div style="left:87.00px;top:297.00px;width:2773.00px;height:1373.00px;background:#ffffff;"></div>
<div style="left:109.50px;top:279.00px;width:1.00px;height:18.00px;background:#3a3a3a;"></div>
<div style="left:121.90px;top:279.00px;width:1.00px;height:18.00px;background:#3a3a3a;"></div>
<div style="left:134.90px;top:279.00px;width:1.00px;height:18.00px;background:#3a3a3a;"></div>
<div style="left:166.90px;top:279.00px;width:1.00px;height:18.00px;background:#3a3a3a;"></div>
<div style="left:199.00px;top:279.00px;width:1.00px;height:18.00px;background:#3a3a3a;"></div>
<div style="left:350.00px;top:279.00px;width:1.00px;height:18.00px;background:#3a3a3a;"></div>
<div style="left:501.00px;top:279.00px;width:1.00px;height:18.00px;background:#3a3a3a;"></div>
<div style="left:652.00px;top:279.00px;width:1.00px;height:18.00px;background:#3a3a3a;"></div>
<div style="left:803.00px;top:279.00px;width:1.00px;height:18.00px;background:#3a3a3a;"></div>
<div style="left:922.00px;top:279.00px;width:1.00px;height:18.00px;background:#3a3a3a;"></div>
<div style="left:1041.00px;top:279.00px;width:1.00px;height:18.00px;background:#3a3a3a;"></div>
<div style="left:1160.00px;top:279.00px;width:1.00px;height:18.00px;background:#3a3a3a;"></div>
<div style="left:1279.00px;top:279.00px;width:1.00px;height:18.00px;background:#3a3a3a;"></div>
<div style="left:1398.00px;top:279.00px;width:1.00px;height:18.00px;background:#3a3a3a;"></div>
<div style="left:1517.00px;top:279.00px;width:1.00px;height:18.00px;background:#3a3a3a;"></div>
<div style="left:1636.00px;top:279.00px;width:1.00px;height:18.00px;background:#3a3a3a;"></div>
<div style="left:1755.00px;top:279.00px;width:1.00px;height:18.00px;background:#3a3a3a;"></div>
<div style="left:1874.00px;top:279.00px;width:1.00px;height:18.00px;background:#3a3a3a;"></div>
<div style="left:1993.00px;top:279.00px;width:1.00px;height:18.00px;background:#3a3a3a;"></div>
<div style="left:2112.00px;top:279.00px;width:1.00px;height:18.00px;background:#3a3a3a;"></div>
<div style="left:2231.00px;top:279.00px;width:1.00px;height:18.00px;background:#3a3a3a;"></div>
<div style="left:2350.00px;top:279.00px;width:1.00px;height:18.00px;background:#3a3a3a;"></div>
<div style="left:2469.00px;top:279.00px;width:1.00px;height:18.00px;background:#3a3a3a;"></div>
<div style="left:2588.00px;top:279.00px;width:1.00px;height:18.00px;background:#3a3a3a;"></div>
<div style="left:2707.00px;top:279.00px;width:1.00px;height:18.00px;background:#3a3a3a;"></div>
<div style="left:2826.00px;top:279.00px;width:1.00px;height:18.00px;background:#3a3a3a;"></div>
<div style="left:2945.00px;top:279.00px;width:1.00px;height:18.00px;background:#3a3a3a;"></div>
<svg style="left:66.00px;top:281.00px;" width="20.00" height="14.00" viewBox="0 0 20.00 14.00"><polygon points="19,1 19,13 5,13" fill="#8a8a8a"/></svg>
<div style="left:86.50px;top:279.00px;width:1.00px;height:18.00px;background:#3a3a3a;"></div>
<div style="left:87.50px;top:278.00px;width:22.00px;height:19.00px;background:#5c5c5c;"></div>
<div style="left:87.00px;top:295.50px;width:23.00px;height:2.00px;background:#217346;"></div>
<div style="left:93.16px;top:280.20px;font-family:'Liberation Sans', sans-serif;font-size:16.00px;font-weight:400;color:#e6e6e6;line-height:1;white-space:pre;">A</div>
<div style="left:110.86px;top:280.20px;font-family:'Liberation Sans', sans-serif;font-size:16.00px;font-weight:400;color:#e6e6e6;line-height:1;white-space:pre;">B</div>
<div style="left:123.12px;top:280.20px;font-family:'Liberation Sans', sans-serif;font-size:16.00px;font-weight:400;color:#e6e6e6;line-height:1;white-space:pre;">C</div>
<div style="left:145.62px;top:280.20px;font-family:'Liberation Sans', sans-serif;font-size:16.00px;font-weight:400;color:#e6e6e6;line-height:1;white-space:pre;">D</div>
<div style="left:178.11px;top:280.20px;font-family:'Liberation Sans', sans-serif;font-size:16.00px;font-weight:400;color:#e6e6e6;line-height:1;white-space:pre;">E</div>
<div style="left:270.11px;top:280.20px;font-family:'Liberation Sans', sans-serif;font-size:16.00px;font-weight:400;color:#e6e6e6;line-height:1;white-space:pre;">F</div>
<div style="left:419.77px;top:280.20px;font-family:'Liberation Sans', sans-serif;font-size:16.00px;font-weight:400;color:#e6e6e6;line-height:1;white-space:pre;">G</div>
<div style="left:571.22px;top:280.20px;font-family:'Liberation Sans', sans-serif;font-size:16.00px;font-weight:400;color:#e6e6e6;line-height:1;white-space:pre;">H</div>
<div style="left:725.77px;top:280.20px;font-family:'Liberation Sans', sans-serif;font-size:16.00px;font-weight:400;color:#e6e6e6;line-height:1;white-space:pre;">I</div>
<div style="left:859.00px;top:280.20px;font-family:'Liberation Sans', sans-serif;font-size:16.00px;font-weight:400;color:#e6e6e6;line-height:1;white-space:pre;">J</div>
<div style="left:976.66px;top:280.20px;font-family:'Liberation Sans', sans-serif;font-size:16.00px;font-weight:400;color:#e6e6e6;line-height:1;white-space:pre;">K</div>
<div style="left:1096.55px;top:280.20px;font-family:'Liberation Sans', sans-serif;font-size:16.00px;font-weight:400;color:#e6e6e6;line-height:1;white-space:pre;">L</div>
<div style="left:1213.34px;top:280.20px;font-family:'Liberation Sans', sans-serif;font-size:16.00px;font-weight:400;color:#e6e6e6;line-height:1;white-space:pre;">M</div>
<div style="left:1333.22px;top:280.20px;font-family:'Liberation Sans', sans-serif;font-size:16.00px;font-weight:400;color:#e6e6e6;line-height:1;white-space:pre;">N</div>
<div style="left:1451.77px;top:280.20px;font-family:'Liberation Sans', sans-serif;font-size:16.00px;font-weight:400;color:#e6e6e6;line-height:1;white-space:pre;">O</div>
<div style="left:1571.66px;top:280.20px;font-family:'Liberation Sans', sans-serif;font-size:16.00px;font-weight:400;color:#e6e6e6;line-height:1;white-space:pre;">P</div>
<div style="left:1689.77px;top:280.20px;font-family:'Liberation Sans', sans-serif;font-size:16.00px;font-weight:400;color:#e6e6e6;line-height:1;white-space:pre;">Q</div>
<div style="left:1809.22px;top:280.20px;font-family:'Liberation Sans', sans-serif;font-size:16.00px;font-weight:400;color:#e6e6e6;line-height:1;white-space:pre;">R</div>
<div style="left:1928.66px;top:280.20px;font-family:'Liberation Sans', sans-serif;font-size:16.00px;font-weight:400;color:#e6e6e6;line-height:1;white-space:pre;">S</div>
<div style="left:2048.11px;top:280.20px;font-family:'Liberation Sans', sans-serif;font-size:16.00px;font-weight:400;color:#e6e6e6;line-height:1;white-space:pre;">T</div>
<div style="left:2166.22px;top:280.20px;font-family:'Liberation Sans', sans-serif;font-size:16.00px;font-weight:400;color:#e6e6e6;line-height:1;white-space:pre;">U</div>
<div style="left:2285.66px;top:280.20px;font-family:'Liberation Sans', sans-serif;font-size:16.00px;font-weight:400;color:#e6e6e6;line-height:1;white-space:pre;">V</div>
<div style="left:2402.45px;top:280.20px;font-family:'Liberation Sans', sans-serif;font-size:16.00px;font-weight:400;color:#e6e6e6;line-height:1;white-space:pre;">W</div>
<div style="left:2523.66px;top:280.20px;font-family:'Liberation Sans', sans-serif;font-size:16.00px;font-weight:400;color:#e6e6e6;line-height:1;white-space:pre;">X</div>
<div style="left:2642.66px;top:280.20px;font-family:'Liberation Sans', sans-serif;font-size:16.00px;font-weight:400;color:#e6e6e6;line-height:1;white-space:pre;">Y</div>
<div style="left:2762.11px;top:280.20px;font-family:'Liberation Sans', sans-serif;font-size:16.00px;font-weight:400;color:#e6e6e6;line-height:1;white-space:pre;">Z</div>
<div style="left:2886.00px;top:280.20px;font-family:'Liberation Sans', sans-serif;font-size:16.00px;font-weight:400;color:#e6e6e6;line-height:1;white-space:pre;"></div>
<div style="left:13.00px;top:279.00px;width:17.00px;height:17.00px;background:#e8e8e8;box-sizing:border-box;border:1px solid #bdbdbd;"></div>
<div style="left:18.16px;top:282.80px;font-family:'Liberation Sans', sans-serif;font-size:12.00px;font-weight:400;color:#555;line-height:1;white-space:pre;">1</div>
<div style="left:32.00px;top:279.00px;width:17.00px;height:17.00px;background:#e8e8e8;box-sizing:border-box;border:1px solid #bdbdbd;"></div>
<div style="left:37.16px;top:282.80px;font-family:'Liberation Sans', sans-serif;font-size:12.00px;font-weight:400;color:#555;line-height:1;white-space:pre;">2</div>
<div style="left:54.00px;top:297.00px;width:33.00px;height:35.70px;background:#6e6e6e;"></div>
<div style="left:54.00px;top:332.20px;width:33.00px;height:1.00px;background:#3a3a3a;"></div>
<div style="left:54.00px;top:361.90px;width:33.00px;height:1.00px;background:#3a3a3a;"></div>
<div style="left:54.00px;top:379.80px;width:33.00px;height:1.00px;background:#3a3a3a;"></div>
<div style="left:54.00px;top:384.00px;width:33.00px;height:1.00px;background:#3a3a3a;"></div>
<div style="left:54.00px;top:415.90px;width:33.00px;height:1.00px;background:#3a3a3a;"></div>
<div style="left:54.00px;top:435.70px;width:33.00px;height:1.00px;background:#3a3a3a;"></div>
<div style="left:54.00px;top:455.00px;width:33.00px;height:1.00px;background:#3a3a3a;"></div>
<div style="left:54.00px;top:475.60px;width:33.00px;height:1.00px;background:#3a3a3a;"></div>
<div style="left:54.00px;top:500.00px;width:33.00px;height:1.00px;background:#3a3a3a;"></div>
<div style="left:54.00px;top:514.70px;width:33.00px;height:1.00px;background:#3a3a3a;"></div>
<div style="left:54.00px;top:537.80px;width:33.00px;height:1.00px;background:#3a3a3a;"></div>
<div style="left:54.00px;top:543.80px;width:33.00px;height:1.00px;background:#3a3a3a;"></div>
<div style="left:54.00px;top:547.70px;width:33.00px;height:1.00px;background:#3a3a3a;"></div>
<div style="left:54.00px;top:564.10px;width:33.00px;height:1.00px;background:#3a3a3a;"></div>
<div style="left:54.00px;top:567.30px;width:33.00px;height:1.00px;background:#3a3a3a;"></div>
<div style="left:54.00px;top:586.00px;width:33.00px;height:1.00px;background:#3a3a3a;"></div>
<div style="left:54.00px;top:606.00px;width:33.00px;height:1.00px;background:#3a3a3a;"></div>
<div style="left:54.00px;top:625.80px;width:33.00px;height:1.00px;background:#3a3a3a;"></div>
<div style="left:54.00px;top:645.70px;width:33.00px;height:1.00px;background:#3a3a3a;"></div>
<div style="left:54.00px;top:662.90px;width:33.00px;height:1.00px;background:#3a3a3a;"></div>
<div style="left:54.00px;top:685.80px;width:33.00px;height:1.00px;background:#3a3a3a;"></div>
<div style="left:54.00px;top:690.00px;width:33.00px;height:1.00px;background:#3a3a3a;"></div>
<div style="left:54.00px;top:709.80px;width:33.00px;height:1.00px;background:#3a3a3a;"></div>
<div style="left:54.00px;top:713.40px;width:33.00px;height:1.00px;background:#3a3a3a;"></div>
<div style="left:54.00px;top:733.80px;width:33.00px;height:1.00px;background:#3a3a3a;"></div>
<div style="left:54.00px;top:751.30px;width:33.00px;height:1.00px;background:#3a3a3a;"></div>
<div style="left:54.00px;top:773.90px;width:33.00px;height:1.00px;background:#3a3a3a;"></div>
<div style="left:54.00px;top:777.90px;width:33.00px;height:1.00px;background:#3a3a3a;"></div>
<div style="left:54.00px;top:797.70px;width:33.00px;height:1.00px;background:#3a3a3a;"></div>
<div style="left:54.00px;top:817.80px;width:33.00px;height:1.00px;background:#3a3a3a;"></div>
<div style="left:54.00px;top:837.60px;width:33.00px;height:1.00px;background:#3a3a3a;"></div>
<div style="left:54.00px;top:857.80px;width:33.00px;height:1.00px;background:#3a3a3a;"></div>
<div style="left:54.00px;top:877.70px;width:33.00px;height:1.00px;background:#3a3a3a;"></div>
<div style="left:54.00px;top:898.00px;width:33.00px;height:1.00px;background:#3a3a3a;"></div>
<div style="left:54.00px;top:915.10px;width:33.00px;height:1.00px;background:#3a3a3a;"></div>
<div style="left:54.00px;top:935.50px;width:33.00px;height:1.00px;background:#3a3a3a;"></div>
<div style="left:54.00px;top:951.70px;width:33.00px;height:1.00px;background:#3a3a3a;"></div>
<div style="left:54.00px;top:968.90px;width:33.00px;height:1.00px;background:#3a3a3a;"></div>
<div style="left:54.00px;top:993.60px;width:33.00px;height:1.00px;background:#3a3a3a;"></div>
<div style="left:54.00px;top:1008.00px;width:33.00px;height:1.00px;background:#3a3a3a;"></div>
<div style="left:54.00px;top:1031.10px;width:33.00px;height:1.00px;background:#3a3a3a;"></div>
<div style="left:54.00px;top:1049.20px;width:33.00px;height:1.00px;background:#3a3a3a;"></div>
<div style="left:54.00px;top:1066.90px;width:33.00px;height:1.00px;background:#3a3a3a;"></div>
<div style="left:54.00px;top:1087.10px;width:33.00px;height:1.00px;background:#3a3a3a;"></div>
<div style="left:54.00px;top:1110.20px;width:33.00px;height:1.00px;background:#3a3a3a;"></div>
<div style="left:54.00px;top:1132.60px;width:33.00px;height:1.00px;background:#3a3a3a;"></div>
<div style="left:54.00px;top:1150.80px;width:33.00px;height:1.00px;background:#3a3a3a;"></div>
<div style="left:54.00px;top:1170.70px;width:33.00px;height:1.00px;background:#3a3a3a;"></div>
<div style="left:54.00px;top:1194.10px;width:33.00px;height:1.00px;background:#3a3a3a;"></div>
<div style="left:54.00px;top:1217.00px;width:33.00px;height:1.00px;background:#3a3a3a;"></div>
<div style="left:54.00px;top:1234.70px;width:33.00px;height:1.00px;background:#3a3a3a;"></div>
<div style="left:54.00px;top:1252.80px;width:33.00px;height:1.00px;background:#3a3a3a;"></div>
<div style="left:54.00px;top:1271.20px;width:33.00px;height:1.00px;background:#3a3a3a;"></div>
<div style="left:54.00px;top:1291.40px;width:33.00px;height:1.00px;background:#3a3a3a;"></div>
<div style="left:54.00px;top:1314.00px;width:33.00px;height:1.00px;background:#3a3a3a;"></div>
<div style="left:54.00px;top:1336.70px;width:33.00px;height:1.00px;background:#3a3a3a;"></div>
<div style="left:54.00px;top:1359.60px;width:33.00px;height:1.00px;background:#3a3a3a;"></div>
<div style="left:54.00px;top:1382.50px;width:33.00px;height:1.00px;background:#3a3a3a;"></div>
<div style="left:54.00px;top:1403.10px;width:33.00px;height:1.00px;background:#3a3a3a;"></div>
<div style="left:54.00px;top:1424.00px;width:33.00px;height:1.00px;background:#3a3a3a;"></div>
<div style="left:54.00px;top:1440.60px;width:33.00px;height:1.00px;background:#3a3a3a;"></div>
<div style="left:54.00px;top:1465.70px;width:33.00px;height:1.00px;background:#3a3a3a;"></div>
<div style="left:54.00px;top:1478.10px;width:33.00px;height:1.00px;background:#3a3a3a;"></div>
<div style="left:54.00px;top:1498.70px;width:33.00px;height:1.00px;background:#3a3a3a;"></div>
<div style="left:54.00px;top:1518.80px;width:33.00px;height:1.00px;background:#3a3a3a;"></div>
<div style="left:54.00px;top:1538.80px;width:33.00px;height:1.00px;background:#3a3a3a;"></div>
<div style="left:54.00px;top:1558.90px;width:33.00px;height:1.00px;background:#3a3a3a;"></div>
<div style="left:54.00px;top:1578.90px;width:33.00px;height:1.00px;background:#3a3a3a;"></div>
<div style="left:54.00px;top:1598.90px;width:33.00px;height:1.00px;background:#3a3a3a;"></div>
<div style="left:54.00px;top:1619.00px;width:33.00px;height:1.00px;background:#3a3a3a;"></div>
<div style="left:54.00px;top:1639.00px;width:33.00px;height:1.00px;background:#3a3a3a;"></div>
<div style="left:54.00px;top:1656.00px;width:33.00px;height:1.00px;background:#3a3a3a;"></div>
<div style="left:54.00px;top:1669.50px;width:33.00px;height:1.00px;background:#3a3a3a;"></div>
<div style="left:54px;top:297.00px;width:33px;height:35.20px;overflow:hidden">
<div style="left:12.35px;top:19.30px;font-family:'Liberation Sans', sans-serif;font-size:16.00px;font-weight:400;color:#e6e6e6;line-height:1;white-space:pre;position:absolute;">1</div>
</div>
<div style="left:54px;top:332.70px;width:33px;height:29.20px;overflow:hidden">
<div style="left:12.35px;top:13.30px;font-family:'Liberation Sans', sans-serif;font-size:16.00px;font-weight:400;color:#e6e6e6;line-height:1;white-space:pre;position:absolute;">2</div>
</div>
<div style="left:54px;top:362.40px;width:33px;height:17.40px;overflow:hidden">
<div style="left:12.35px;top:2.80px;font-family:'Liberation Sans', sans-serif;font-size:16.00px;font-weight:400;color:#e6e6e6;line-height:1;white-space:pre;position:absolute;">3</div>
</div>
<div style="left:54px;top:384.50px;width:33px;height:31.40px;overflow:hidden">
<div style="left:12.35px;top:15.50px;font-family:'Liberation Sans', sans-serif;font-size:16.00px;font-weight:400;color:#e6e6e6;line-height:1;white-space:pre;position:absolute;">5</div>
</div>
<div style="left:54px;top:416.40px;width:33px;height:19.30px;overflow:hidden">
<div style="left:12.35px;top:3.40px;font-family:'Liberation Sans', sans-serif;font-size:16.00px;font-weight:400;color:#e6e6e6;line-height:1;white-space:pre;position:absolute;">6</div>
</div>
<div style="left:54px;top:436.20px;width:33px;height:18.80px;overflow:hidden">
<div style="left:12.35px;top:2.90px;font-family:'Liberation Sans', sans-serif;font-size:16.00px;font-weight:400;color:#e6e6e6;line-height:1;white-space:pre;position:absolute;">7</div>
</div>
<div style="left:54px;top:458.00px;width:33px;height:17.60px;overflow:hidden">
<div style="left:7.90px;top:1.70px;font-family:'Liberation Sans', sans-serif;font-size:16.00px;font-weight:400;color:#e6e6e6;line-height:1;white-space:pre;position:absolute;">13</div>
</div>
<div style="left:54px;top:476.10px;width:33px;height:23.90px;overflow:hidden">
<div style="left:7.90px;top:8.00px;font-family:'Liberation Sans', sans-serif;font-size:16.00px;font-weight:400;color:#e6e6e6;line-height:1;white-space:pre;position:absolute;">14</div>
</div>
<div style="left:54px;top:500.50px;width:33px;height:14.20px;overflow:hidden">
<div style="left:7.90px;top:-1.70px;font-family:'Liberation Sans', sans-serif;font-size:16.00px;font-weight:400;color:#e6e6e6;line-height:1;white-space:pre;position:absolute;">15</div>
</div>
<div style="left:54px;top:515.20px;width:33px;height:22.60px;overflow:hidden">
<div style="left:7.90px;top:6.70px;font-family:'Liberation Sans', sans-serif;font-size:16.00px;font-weight:400;color:#e6e6e6;line-height:1;white-space:pre;position:absolute;">16</div>
</div>
<div style="left:54px;top:538.30px;width:33px;height:5.50px;overflow:hidden">
<div style="left:7.90px;top:-10.40px;font-family:'Liberation Sans', sans-serif;font-size:16.00px;font-weight:400;color:#e6e6e6;line-height:1;white-space:pre;position:absolute;">17</div>
</div>
<div style="left:54px;top:548.20px;width:33px;height:15.90px;overflow:hidden">
<div style="left:7.90px;top:0.00px;font-family:'Liberation Sans', sans-serif;font-size:16.00px;font-weight:400;color:#e6e6e6;line-height:1;white-space:pre;position:absolute;">19</div>
</div>
<div style="left:54px;top:567.80px;width:33px;height:18.20px;overflow:hidden">
<div style="left:7.90px;top:2.30px;font-family:'Liberation Sans', sans-serif;font-size:16.00px;font-weight:400;color:#e6e6e6;line-height:1;white-space:pre;position:absolute;">22</div>
</div>
<div style="left:54px;top:586.50px;width:33px;height:19.50px;overflow:hidden">
<div style="left:7.90px;top:3.60px;font-family:'Liberation Sans', sans-serif;font-size:16.00px;font-weight:400;color:#e6e6e6;line-height:1;white-space:pre;position:absolute;">23</div>
</div>
<div style="left:54px;top:606.50px;width:33px;height:19.30px;overflow:hidden">
<div style="left:7.90px;top:3.40px;font-family:'Liberation Sans', sans-serif;font-size:16.00px;font-weight:400;color:#e6e6e6;line-height:1;white-space:pre;position:absolute;">24</div>
</div>
<div style="left:54px;top:626.30px;width:33px;height:19.40px;overflow:hidden">
<div style="left:7.90px;top:3.50px;font-family:'Liberation Sans', sans-serif;font-size:16.00px;font-weight:400;color:#e6e6e6;line-height:1;white-space:pre;position:absolute;">25</div>
</div>
<div style="left:54px;top:646.20px;width:33px;height:16.70px;overflow:hidden">
<div style="left:7.90px;top:0.80px;font-family:'Liberation Sans', sans-serif;font-size:16.00px;font-weight:400;color:#e6e6e6;line-height:1;white-space:pre;position:absolute;">26</div>
</div>
<div style="left:54px;top:663.40px;width:33px;height:22.40px;overflow:hidden">
<div style="left:7.90px;top:6.50px;font-family:'Liberation Sans', sans-serif;font-size:16.00px;font-weight:400;color:#e6e6e6;line-height:1;white-space:pre;position:absolute;">27</div>
</div>
<div style="left:54px;top:690.50px;width:33px;height:19.30px;overflow:hidden">
<div style="left:7.90px;top:3.40px;font-family:'Liberation Sans', sans-serif;font-size:16.00px;font-weight:400;color:#e6e6e6;line-height:1;white-space:pre;position:absolute;">29</div>
</div>
<div style="left:54px;top:713.90px;width:33px;height:19.90px;overflow:hidden">
<div style="left:7.90px;top:4.00px;font-family:'Liberation Sans', sans-serif;font-size:16.00px;font-weight:400;color:#e6e6e6;line-height:1;white-space:pre;position:absolute;">31</div>
</div>
<div style="left:54px;top:734.30px;width:33px;height:17.00px;overflow:hidden">
<div style="left:7.90px;top:1.10px;font-family:'Liberation Sans', sans-serif;font-size:16.00px;font-weight:400;color:#e6e6e6;line-height:1;white-space:pre;position:absolute;">32</div>
</div>
<div style="left:54px;top:751.80px;width:33px;height:22.10px;overflow:hidden">
<div style="left:7.90px;top:6.20px;font-family:'Liberation Sans', sans-serif;font-size:16.00px;font-weight:400;color:#e6e6e6;line-height:1;white-space:pre;position:absolute;">33</div>
</div>
<div style="left:54px;top:778.40px;width:33px;height:19.30px;overflow:hidden">
<div style="left:7.90px;top:3.40px;font-family:'Liberation Sans', sans-serif;font-size:16.00px;font-weight:400;color:#e6e6e6;line-height:1;white-space:pre;position:absolute;">35</div>
</div>
<div style="left:54px;top:798.20px;width:33px;height:19.60px;overflow:hidden">
<div style="left:7.90px;top:3.70px;font-family:'Liberation Sans', sans-serif;font-size:16.00px;font-weight:400;color:#e6e6e6;line-height:1;white-space:pre;position:absolute;">36</div>
</div>
<div style="left:54px;top:818.30px;width:33px;height:19.30px;overflow:hidden">
<div style="left:7.90px;top:3.40px;font-family:'Liberation Sans', sans-serif;font-size:16.00px;font-weight:400;color:#e6e6e6;line-height:1;white-space:pre;position:absolute;">37</div>
</div>
<div style="left:54px;top:838.10px;width:33px;height:19.70px;overflow:hidden">
<div style="left:7.90px;top:3.80px;font-family:'Liberation Sans', sans-serif;font-size:16.00px;font-weight:400;color:#e6e6e6;line-height:1;white-space:pre;position:absolute;">38</div>
</div>
<div style="left:54px;top:858.30px;width:33px;height:19.40px;overflow:hidden">
<div style="left:7.90px;top:3.50px;font-family:'Liberation Sans', sans-serif;font-size:16.00px;font-weight:400;color:#e6e6e6;line-height:1;white-space:pre;position:absolute;">39</div>
</div>
<div style="left:54px;top:878.20px;width:33px;height:19.80px;overflow:hidden">
<div style="left:7.90px;top:3.90px;font-family:'Liberation Sans', sans-serif;font-size:16.00px;font-weight:400;color:#e6e6e6;line-height:1;white-space:pre;position:absolute;">40</div>
</div>
<div style="left:54px;top:898.50px;width:33px;height:16.60px;overflow:hidden">
<div style="left:7.90px;top:0.70px;font-family:'Liberation Sans', sans-serif;font-size:16.00px;font-weight:400;color:#e6e6e6;line-height:1;white-space:pre;position:absolute;">41</div>
</div>
<div style="left:54px;top:915.60px;width:33px;height:19.90px;overflow:hidden">
<div style="left:7.90px;top:4.00px;font-family:'Liberation Sans', sans-serif;font-size:16.00px;font-weight:400;color:#e6e6e6;line-height:1;white-space:pre;position:absolute;">42</div>
</div>
<div style="left:54px;top:936.00px;width:33px;height:15.70px;overflow:hidden">
<div style="left:7.90px;top:-0.20px;font-family:'Liberation Sans', sans-serif;font-size:16.00px;font-weight:400;color:#e6e6e6;line-height:1;white-space:pre;position:absolute;">43</div>
</div>
<div style="left:54px;top:952.20px;width:33px;height:16.70px;overflow:hidden">
<div style="left:7.90px;top:0.80px;font-family:'Liberation Sans', sans-serif;font-size:16.00px;font-weight:400;color:#e6e6e6;line-height:1;white-space:pre;position:absolute;">44</div>
</div>
<div style="left:54px;top:969.40px;width:33px;height:24.20px;overflow:hidden">
<div style="left:7.90px;top:8.30px;font-family:'Liberation Sans', sans-serif;font-size:16.00px;font-weight:400;color:#e6e6e6;line-height:1;white-space:pre;position:absolute;">45</div>
</div>
<div style="left:54px;top:994.10px;width:33px;height:13.90px;overflow:hidden">
<div style="left:7.90px;top:-2.00px;font-family:'Liberation Sans', sans-serif;font-size:16.00px;font-weight:400;color:#e6e6e6;line-height:1;white-space:pre;position:absolute;">46</div>
</div>
<div style="left:54px;top:1008.50px;width:33px;height:22.60px;overflow:hidden">
<div style="left:7.90px;top:6.70px;font-family:'Liberation Sans', sans-serif;font-size:16.00px;font-weight:400;color:#e6e6e6;line-height:1;white-space:pre;position:absolute;">47</div>
</div>
<div style="left:54px;top:1031.60px;width:33px;height:17.60px;overflow:hidden">
<div style="left:7.90px;top:1.70px;font-family:'Liberation Sans', sans-serif;font-size:16.00px;font-weight:400;color:#e6e6e6;line-height:1;white-space:pre;position:absolute;">48</div>
</div>
<div style="left:54px;top:1049.70px;width:33px;height:17.20px;overflow:hidden">
<div style="left:7.90px;top:1.30px;font-family:'Liberation Sans', sans-serif;font-size:16.00px;font-weight:400;color:#e6e6e6;line-height:1;white-space:pre;position:absolute;">49</div>
</div>
<div style="left:54px;top:1067.40px;width:33px;height:19.70px;overflow:hidden">
<div style="left:7.90px;top:3.80px;font-family:'Liberation Sans', sans-serif;font-size:16.00px;font-weight:400;color:#e6e6e6;line-height:1;white-space:pre;position:absolute;">50</div>
</div>
<div style="left:54px;top:1087.60px;width:33px;height:22.60px;overflow:hidden">
<div style="left:7.90px;top:6.70px;font-family:'Liberation Sans', sans-serif;font-size:16.00px;font-weight:400;color:#e6e6e6;line-height:1;white-space:pre;position:absolute;">51</div>
</div>
<div style="left:54px;top:1110.70px;width:33px;height:21.90px;overflow:hidden">
<div style="left:7.90px;top:6.00px;font-family:'Liberation Sans', sans-serif;font-size:16.00px;font-weight:400;color:#e6e6e6;line-height:1;white-space:pre;position:absolute;">52</div>
</div>
<div style="left:54px;top:1133.10px;width:33px;height:17.70px;overflow:hidden">
<div style="left:7.90px;top:1.80px;font-family:'Liberation Sans', sans-serif;font-size:16.00px;font-weight:400;color:#e6e6e6;line-height:1;white-space:pre;position:absolute;">53</div>
</div>
<div style="left:54px;top:1151.30px;width:33px;height:19.40px;overflow:hidden">
<div style="left:7.90px;top:3.50px;font-family:'Liberation Sans', sans-serif;font-size:16.00px;font-weight:400;color:#e6e6e6;line-height:1;white-space:pre;position:absolute;">54</div>
</div>
<div style="left:54px;top:1171.20px;width:33px;height:22.90px;overflow:hidden">
<div style="left:7.90px;top:7.00px;font-family:'Liberation Sans', sans-serif;font-size:16.00px;font-weight:400;color:#e6e6e6;line-height:1;white-space:pre;position:absolute;">55</div>
</div>
<div style="left:54px;top:1194.60px;width:33px;height:22.40px;overflow:hidden">
<div style="left:7.90px;top:6.50px;font-family:'Liberation Sans', sans-serif;font-size:16.00px;font-weight:400;color:#e6e6e6;line-height:1;white-space:pre;position:absolute;">56</div>
</div>
<div style="left:54px;top:1217.50px;width:33px;height:17.20px;overflow:hidden">
<div style="left:7.90px;top:1.30px;font-family:'Liberation Sans', sans-serif;font-size:16.00px;font-weight:400;color:#e6e6e6;line-height:1;white-space:pre;position:absolute;">57</div>
</div>
<div style="left:54px;top:1235.20px;width:33px;height:17.60px;overflow:hidden">
<div style="left:7.90px;top:1.70px;font-family:'Liberation Sans', sans-serif;font-size:16.00px;font-weight:400;color:#e6e6e6;line-height:1;white-space:pre;position:absolute;">58</div>
</div>
<div style="left:54px;top:1253.30px;width:33px;height:17.90px;overflow:hidden">
<div style="left:7.90px;top:2.00px;font-family:'Liberation Sans', sans-serif;font-size:16.00px;font-weight:400;color:#e6e6e6;line-height:1;white-space:pre;position:absolute;">59</div>
</div>
<div style="left:54px;top:1271.70px;width:33px;height:19.70px;overflow:hidden">
<div style="left:7.90px;top:3.80px;font-family:'Liberation Sans', sans-serif;font-size:16.00px;font-weight:400;color:#e6e6e6;line-height:1;white-space:pre;position:absolute;">60</div>
</div>
<div style="left:54px;top:1291.90px;width:33px;height:22.10px;overflow:hidden">
<div style="left:7.90px;top:6.20px;font-family:'Liberation Sans', sans-serif;font-size:16.00px;font-weight:400;color:#e6e6e6;line-height:1;white-space:pre;position:absolute;">61</div>
</div>
<div style="left:54px;top:1314.50px;width:33px;height:22.20px;overflow:hidden">
<div style="left:7.90px;top:6.30px;font-family:'Liberation Sans', sans-serif;font-size:16.00px;font-weight:400;color:#e6e6e6;line-height:1;white-space:pre;position:absolute;">62</div>
</div>
<div style="left:54px;top:1337.20px;width:33px;height:22.40px;overflow:hidden">
<div style="left:7.90px;top:6.50px;font-family:'Liberation Sans', sans-serif;font-size:16.00px;font-weight:400;color:#e6e6e6;line-height:1;white-space:pre;position:absolute;">63</div>
</div>
<div style="left:54px;top:1360.10px;width:33px;height:22.40px;overflow:hidden">
<div style="left:7.90px;top:6.50px;font-family:'Liberation Sans', sans-serif;font-size:16.00px;font-weight:400;color:#e6e6e6;line-height:1;white-space:pre;position:absolute;">64</div>
</div>
<div style="left:54px;top:1383.00px;width:33px;height:20.10px;overflow:hidden">
<div style="left:7.90px;top:4.20px;font-family:'Liberation Sans', sans-serif;font-size:16.00px;font-weight:400;color:#e6e6e6;line-height:1;white-space:pre;position:absolute;">65</div>
</div>
<div style="left:54px;top:1403.60px;width:33px;height:20.40px;overflow:hidden">
<div style="left:7.90px;top:4.50px;font-family:'Liberation Sans', sans-serif;font-size:16.00px;font-weight:400;color:#e6e6e6;line-height:1;white-space:pre;position:absolute;">66</div>
</div>
<div style="left:54px;top:1424.50px;width:33px;height:16.10px;overflow:hidden">
<div style="left:7.90px;top:0.20px;font-family:'Liberation Sans', sans-serif;font-size:16.00px;font-weight:400;color:#e6e6e6;line-height:1;white-space:pre;position:absolute;">67</div>
</div>
<div style="left:54px;top:1441.10px;width:33px;height:24.60px;overflow:hidden">
<div style="left:7.90px;top:8.70px;font-family:'Liberation Sans', sans-serif;font-size:16.00px;font-weight:400;color:#e6e6e6;line-height:1;white-space:pre;position:absolute;">68</div>
</div>
<div style="left:54px;top:1466.20px;width:33px;height:11.90px;overflow:hidden">
<div style="left:7.90px;top:-4.00px;font-family:'Liberation Sans', sans-serif;font-size:16.00px;font-weight:400;color:#e6e6e6;line-height:1;white-space:pre;position:absolute;">69</div>
</div>
<div style="left:54px;top:1478.60px;width:33px;height:20.10px;overflow:hidden">
<div style="left:7.90px;top:4.20px;font-family:'Liberation Sans', sans-serif;font-size:16.00px;font-weight:400;color:#e6e6e6;line-height:1;white-space:pre;position:absolute;">70</div>
</div>
<div style="left:54px;top:1499.20px;width:33px;height:19.60px;overflow:hidden">
<div style="left:7.90px;top:3.70px;font-family:'Liberation Sans', sans-serif;font-size:16.00px;font-weight:400;color:#e6e6e6;line-height:1;white-space:pre;position:absolute;">71</div>
</div>
<div style="left:54px;top:1519.30px;width:33px;height:19.50px;overflow:hidden">
<div style="left:7.90px;top:3.60px;font-family:'Liberation Sans', sans-serif;font-size:16.00px;font-weight:400;color:#e6e6e6;line-height:1;white-space:pre;position:absolute;">72</div>
</div>
<div style="left:54px;top:1539.30px;width:33px;height:19.60px;overflow:hidden">
<div style="left:7.90px;top:3.70px;font-family:'Liberation Sans', sans-serif;font-size:16.00px;font-weight:400;color:#e6e6e6;line-height:1;white-space:pre;position:absolute;">73</div>
</div>
<div style="left:54px;top:1559.40px;width:33px;height:19.50px;overflow:hidden">
<div style="left:7.90px;top:3.60px;font-family:'Liberation Sans', sans-serif;font-size:16.00px;font-weight:400;color:#e6e6e6;line-height:1;white-space:pre;position:absolute;">74</div>
</div>
<div style="left:54px;top:1579.40px;width:33px;height:19.50px;overflow:hidden">
<div style="left:7.90px;top:3.60px;font-family:'Liberation Sans', sans-serif;font-size:16.00px;font-weight:400;color:#e6e6e6;line-height:1;white-space:pre;position:absolute;">75</div>
</div>
<div style="left:54px;top:1599.40px;width:33px;height:19.60px;overflow:hidden">
<div style="left:7.90px;top:3.70px;font-family:'Liberation Sans', sans-serif;font-size:16.00px;font-weight:400;color:#e6e6e6;line-height:1;white-space:pre;position:absolute;">76</div>
</div>
<div style="left:54px;top:1619.50px;width:33px;height:19.50px;overflow:hidden">
<div style="left:7.90px;top:3.60px;font-family:'Liberation Sans', sans-serif;font-size:16.00px;font-weight:400;color:#e6e6e6;line-height:1;white-space:pre;position:absolute;">77</div>
</div>
<div style="left:54px;top:1639.50px;width:33px;height:16.50px;overflow:hidden">
<div style="left:7.90px;top:0.60px;font-family:'Liberation Sans', sans-serif;font-size:16.00px;font-weight:400;color:#e6e6e6;line-height:1;white-space:pre;position:absolute;">78</div>
</div>
<div style="left:54px;top:1656.50px;width:33px;height:13.00px;overflow:hidden">
<div style="left:7.90px;top:-0.80px;font-family:'Liberation Sans', sans-serif;font-size:16.00px;font-weight:400;color:#e6e6e6;line-height:1;white-space:pre;position:absolute;">79</div>
</div>
<div style="left:13.50px;top:547.40px;width:18.20px;height:18.20px;background:#e6e6e6;box-sizing:border-box;border:1px solid #fafafa;"></div>
<div style="left:18.50px;top:556.00px;width:8.20px;height:1.50px;background:#5a5a5a;"></div>
<div style="left:21.85px;top:552.60px;width:1.50px;height:8.10px;background:#5a5a5a;"></div>
<div style="left:13.50px;top:567.40px;width:18.20px;height:18.20px;background:#e6e6e6;box-sizing:border-box;border:1px solid #fafafa;"></div>
<div style="left:18.50px;top:576.00px;width:8.20px;height:1.50px;background:#5a5a5a;"></div>
<div style="left:21.85px;top:572.60px;width:1.50px;height:8.10px;background:#5a5a5a;"></div>
<div style="left:54.00px;top:297.00px;width:33.00px;height:1.00px;background:#bdbdbd;"></div>
<div style="left:54.00px;top:332.20px;width:33.00px;height:1.00px;background:#bdbdbd;"></div>
<div style="left:87.00px;top:279.00px;width:1.00px;height:18.00px;background:#9a9a9a;"></div>
<div style="left:109.50px;top:279.00px;width:1.00px;height:18.00px;background:#9a9a9a;"></div>
<div style="left:86.50px;top:297.00px;width:2.00px;height:36.00px;background:#217346;"></div>
<div style="left:135.20px;top:626.30px;width:2724.80px;height:20.40px;background:#4ab0e6;"></div>
<div style="left:135.20px;top:713.90px;width:2724.80px;height:20.90px;background:#4ab0e6;"></div>
<div style="left:135.20px;top:878.20px;width:2724.80px;height:20.80px;background:#4ab0e6;"></div>
<div style="left:135.20px;top:915.60px;width:2724.80px;height:20.90px;background:#4ab0e6;"></div>
<div style="left:122.20px;top:1067.40px;width:2737.80px;height:20.70px;background:#4ab0e6;"></div>
<div style="left:122.20px;top:1151.30px;width:2737.80px;height:20.40px;background:#4ab0e6;"></div>
<div style="left:122.20px;top:1271.70px;width:2737.80px;height:20.70px;background:#4ab0e6;"></div>
<div style="left:122.20px;top:1383.00px;width:2737.80px;height:21.10px;background:#4ab0e6;"></div>
<div style="left:135.20px;top:1619.50px;width:2724.80px;height:20.50px;background:#4ab0e6;"></div>
<div style="left:803.00px;top:297.00px;width:1.00px;height:1373.00px;background:#9c9c9c;"></div>
<div style="left:11.00px;top:455.50px;width:2849.00px;height:1.50px;background:#a8a8a8;"></div>
<div style="left:114.90px;top:300.62px;font-family:'Liberation Sans', sans-serif;font-size:29.50px;font-weight:700;color:#262626;line-height:1;white-space:pre;transform:scaleX(1.0066);transform-origin:0 0;">Cash Flow Statement</div>
<div style="left:114.00px;top:335.61px;font-family:'Liberation Sans', sans-serif;font-size:24.70px;font-weight:700;color:#000000;line-height:1;white-space:pre;transform:scaleX(0.9941);transform-origin:0 0;">ABC Company Inc.</div>
<div style="left:113.50px;top:363.45px;font-family:'Liberation Sans', sans-serif;font-size:17.70px;font-weight:700;color:#2f6fde;line-height:1;white-space:pre;transform:scaleX(0.9717);transform-origin:0 0;text-decoration:underline;">Go to Table of Contents</div>
<div style="left:113.50px;top:417.85px;font-family:'Liberation Sans', sans-serif;font-size:17.70px;font-weight:700;color:#000000;line-height:1;white-space:pre;transform:scaleX(0.9294);transform-origin:0 0;">Fiscal year</div>
<div style="left:113.50px;top:437.25px;font-family:'Liberation Sans', sans-serif;font-size:17.70px;font-weight:700;color:#000000;line-height:1;white-space:pre;transform:scaleX(0.9444);transform-origin:0 0;">Month</div>
<div style="left:114.30px;top:479.04px;font-family:'Liberation Sans', sans-serif;font-size:20.90px;font-weight:700;color:#1c1c1c;line-height:1;white-space:pre;transform:scaleX(1.0107);transform-origin:0 0;">Cash Flow Statement, $</div>
<div style="left:126.60px;top:518.36px;font-family:'Liberation Sans', sans-serif;font-size:18.40px;font-weight:700;color:#1c1c1c;line-height:1;white-space:pre;transform:scaleX(1.0117);transform-origin:0 0;">Cash Flow from Operating Activities</div>
<div style="left:139.80px;top:548.37px;font-family:'Liberation Sans', sans-serif;font-size:17.10px;font-weight:400;color:#1c1c1c;line-height:1;white-space:pre;transform:scaleX(0.8590);transform-origin:0 0;">Cash Receipts</div>
<div style="left:139.80px;top:568.26px;font-family:'Liberation Sans', sans-serif;font-size:17.10px;font-weight:400;color:#1c1c1c;line-height:1;white-space:pre;transform:scaleX(0.8817);transform-origin:0 0;">Cash Payments</div>
<div style="left:139.80px;top:588.26px;font-family:'Liberation Sans', sans-serif;font-size:17.10px;font-weight:400;color:#1c1c1c;line-height:1;white-space:pre;transform:scaleX(0.9089);transform-origin:0 0;">Interest Expense</div>
<div style="left:139.80px;top:608.07px;font-family:'Liberation Sans', sans-serif;font-size:17.10px;font-weight:400;color:#1c1c1c;line-height:1;white-space:pre;transform:scaleX(0.9124);transform-origin:0 0;">Corporate Tax Expense</div>
<div style="left:146.60px;top:627.76px;font-family:'Liberation Sans', sans-serif;font-size:17.10px;font-weight:700;color:#ffffff;line-height:1;white-space:pre;transform:scaleX(0.9978);transform-origin:0 0;">Net Cash Flow from Operating Activities</div>
<div style="left:126.60px;top:665.86px;font-family:'Liberation Sans', sans-serif;font-size:18.40px;font-weight:700;color:#1c1c1c;line-height:1;white-space:pre;transform:scaleX(1.0162);transform-origin:0 0;">Cash Flow from Investing Activities</div>
<div style="left:139.60px;top:691.87px;font-family:'Liberation Sans', sans-serif;font-size:17.10px;font-weight:400;color:#1c1c1c;line-height:1;white-space:pre;transform:scaleX(0.9109);transform-origin:0 0;">Capital Expenditure</div>
<div style="left:146.30px;top:715.87px;font-family:'Liberation Sans', sans-serif;font-size:17.10px;font-weight:700;color:#ffffff;line-height:1;white-space:pre;">Net Cash Flow from Investing Activities</div>
<div style="left:126.60px;top:754.16px;font-family:'Liberation Sans', sans-serif;font-size:18.40px;font-weight:700;color:#1c1c1c;line-height:1;white-space:pre;transform:scaleX(1.0032);transform-origin:0 0;">Cash Flow from Financing Activities</div>
<div style="left:139.60px;top:780.07px;font-family:'Liberation Sans', sans-serif;font-size:17.10px;font-weight:400;color:#1c1c1c;line-height:1;white-space:pre;transform:scaleX(0.9156);transform-origin:0 0;">Debts Drawdowns</div>
<div style="left:139.60px;top:800.17px;font-family:'Liberation Sans', sans-serif;font-size:17.10px;font-weight:400;color:#1c1c1c;line-height:1;white-space:pre;transform:scaleX(0.8915);transform-origin:0 0;">Debts Repayments</div>
<div style="left:139.60px;top:819.87px;font-family:'Liberation Sans', sans-serif;font-size:17.10px;font-weight:400;color:#1c1c1c;line-height:1;white-space:pre;transform:scaleX(0.9014);transform-origin:0 0;">Equity Raisings</div>
<div style="left:139.60px;top:840.17px;font-family:'Liberation Sans', sans-serif;font-size:17.10px;font-weight:400;color:#1c1c1c;line-height:1;white-space:pre;transform:scaleX(0.8926);transform-origin:0 0;">Equity Buybacks</div>
<div style="left:139.60px;top:859.87px;font-family:'Liberation Sans', sans-serif;font-size:17.10px;font-weight:400;color:#1c1c1c;line-height:1;white-space:pre;transform:scaleX(0.9059);transform-origin:0 0;">Dividends Paid</div>
<div style="left:146.30px;top:879.97px;font-family:'Liberation Sans', sans-serif;font-size:17.10px;font-weight:700;color:#ffffff;line-height:1;white-space:pre;transform:scaleX(0.9862);transform-origin:0 0;">Net Cash Flow from Financing Activities</div>
<div style="left:146.30px;top:917.26px;font-family:'Liberation Sans', sans-serif;font-size:17.10px;font-weight:700;color:#ffffff;line-height:1;white-space:pre;transform:scaleX(1.0165);transform-origin:0 0;">Net Increase/(Decrease) in Cash Held</div>
<div style="left:114.30px;top:971.74px;font-family:'Liberation Sans', sans-serif;font-size:20.90px;font-weight:700;color:#1c1c1c;line-height:1;white-space:pre;transform:scaleX(1.0260);transform-origin:0 0;">Cash Flow Statement (indirect method), $</div>
<div style="left:126.60px;top:1010.76px;font-family:'Liberation Sans', sans-serif;font-size:18.40px;font-weight:700;color:#1c1c1c;line-height:1;white-space:pre;transform:scaleX(1.0112);transform-origin:0 0;">Operating Activities</div>
<div style="left:139.50px;top:1031.87px;font-family:'Liberation Sans', sans-serif;font-size:17.10px;font-weight:400;color:#1c1c1c;line-height:1;white-space:pre;transform:scaleX(0.9114);transform-origin:0 0;">Net Income Less Depreciation</div>
<div style="left:139.50px;top:1049.96px;font-family:'Liberation Sans', sans-serif;font-size:17.10px;font-weight:400;color:#1c1c1c;line-height:1;white-space:pre;transform:scaleX(0.9146);transform-origin:0 0;">Changes in Working Capital</div>
<div style="left:134.50px;top:1069.37px;font-family:'Liberation Sans', sans-serif;font-size:17.10px;font-weight:700;color:#ffffff;line-height:1;white-space:pre;transform:scaleX(1.0172);transform-origin:0 0;">Total Operating Activities</div>
<div style="left:126.60px;top:1112.56px;font-family:'Liberation Sans', sans-serif;font-size:18.40px;font-weight:700;color:#1c1c1c;line-height:1;white-space:pre;transform:scaleX(1.0249);transform-origin:0 0;">Investing Activities</div>
<div style="left:139.50px;top:1134.06px;font-family:'Liberation Sans', sans-serif;font-size:17.10px;font-weight:400;color:#1c1c1c;line-height:1;white-space:pre;transform:scaleX(0.9109);transform-origin:0 0;">Capital Expenditure</div>
<div style="left:134.50px;top:1152.76px;font-family:'Liberation Sans', sans-serif;font-size:17.10px;font-weight:700;color:#ffffff;line-height:1;white-space:pre;transform:scaleX(1.0045);transform-origin:0 0;">Total Cash From (For) Investing Activities</div>
<div style="left:126.60px;top:1196.66px;font-family:'Liberation Sans', sans-serif;font-size:18.40px;font-weight:700;color:#1c1c1c;line-height:1;white-space:pre;transform:scaleX(1.0020);transform-origin:0 0;">Financing Activities</div>
<div style="left:139.50px;top:1217.76px;font-family:'Liberation Sans', sans-serif;font-size:17.10px;font-weight:400;color:#1c1c1c;line-height:1;white-space:pre;transform:scaleX(0.9369);transform-origin:0 0;">Equity Investment</div>
<div style="left:139.50px;top:1235.96px;font-family:'Liberation Sans', sans-serif;font-size:17.10px;font-weight:400;color:#1c1c1c;line-height:1;white-space:pre;transform:scaleX(0.8588);transform-origin:0 0;">Loans</div>
<div style="left:139.50px;top:1254.06px;font-family:'Liberation Sans', sans-serif;font-size:17.10px;font-weight:400;color:#1c1c1c;line-height:1;white-space:pre;transform:scaleX(0.9059);transform-origin:0 0;">Dividends Paid</div>
<div style="left:134.50px;top:1272.76px;font-family:'Liberation Sans', sans-serif;font-size:17.10px;font-weight:700;color:#ffffff;line-height:1;white-space:pre;transform:scaleX(0.9911);transform-origin:0 0;">Total Cash From (For) Financing Activities</div>
<div style="left:126.40px;top:1317.56px;font-family:'Liberation Sans', sans-serif;font-size:18.40px;font-weight:700;color:#1c1c1c;line-height:1;white-space:pre;transform:scaleX(1.0196);transform-origin:0 0;">Cash Movement</div>
<div style="left:139.20px;top:1340.96px;font-family:'Liberation Sans', sans-serif;font-size:17.10px;font-weight:400;color:#1c1c1c;line-height:1;white-space:pre;transform:scaleX(0.9042);transform-origin:0 0;">Cash and Cash Equivalents Beginning</div>
<div style="left:139.20px;top:1363.16px;font-family:'Liberation Sans', sans-serif;font-size:17.10px;font-weight:400;color:#1c1c1c;line-height:1;white-space:pre;transform:scaleX(0.9049);transform-origin:0 0;">Net (Increase) Decrease In Cash</div>
<div style="left:134.60px;top:1385.26px;font-family:'Liberation Sans', sans-serif;font-size:17.10px;font-weight:700;color:#ffffff;line-height:1;white-space:pre;transform:scaleX(0.9770);transform-origin:0 0;">Total Cash and Cash Equivalents End</div>
<div style="left:127.50px;top:1443.73px;font-family:'Liberation Sans', sans-serif;font-size:20.90px;font-weight:700;color:#1c1c1c;line-height:1;white-space:pre;transform:scaleX(1.0160);transform-origin:0 0;">Interest on Cash Breakdown</div>
<div style="left:139.20px;top:1481.26px;font-family:'Liberation Sans', sans-serif;font-size:17.10px;font-weight:400;color:#1c1c1c;line-height:1;white-space:pre;transform:scaleX(0.9396);transform-origin:0 0;">Net Cash Flow from Investing Activities</div>
<div style="left:139.20px;top:1501.06px;font-family:'Liberation Sans', sans-serif;font-size:17.10px;font-weight:400;color:#1c1c1c;line-height:1;white-space:pre;transform:scaleX(0.9281);transform-origin:0 0;">Net Cash Flow from Financing Activities</div>
<div style="left:139.20px;top:1521.46px;font-family:'Liberation Sans', sans-serif;font-size:17.10px;font-weight:400;color:#1c1c1c;line-height:1;white-space:pre;transform:scaleX(0.8590);transform-origin:0 0;">Cash Receipts</div>
<div style="left:139.20px;top:1541.76px;font-family:'Liberation Sans', sans-serif;font-size:17.10px;font-weight:400;color:#1c1c1c;line-height:1;white-space:pre;transform:scaleX(0.8817);transform-origin:0 0;">Cash Payments</div>
<div style="left:139.20px;top:1561.76px;font-family:'Liberation Sans', sans-serif;font-size:17.10px;font-weight:400;color:#1c1c1c;line-height:1;white-space:pre;transform:scaleX(0.9277);transform-origin:0 0;">Change in Cash (Pre-Corporate Tax &amp; Interest on Cash)</div>
<div style="left:139.20px;top:1581.56px;font-family:'Liberation Sans', sans-serif;font-size:17.10px;font-weight:400;color:#1c1c1c;line-height:1;white-space:pre;transform:scaleX(0.9089);transform-origin:0 0;">Interest Expense</div>
<div style="left:139.20px;top:1601.46px;font-family:'Liberation Sans', sans-serif;font-size:17.10px;font-weight:400;color:#1c1c1c;line-height:1;white-space:pre;transform:scaleX(0.9124);transform-origin:0 0;">Corporate Tax Expense</div>
<div style="left:146.60px;top:1621.46px;font-family:'Liberation Sans', sans-serif;font-size:17.10px;font-weight:700;color:#ffffff;line-height:1;white-space:pre;transform:scaleX(1.0161);transform-origin:0 0;">Net Increase/(Decrease) in Cash Held</div>
<div style="left:880.77px;top:418.15px;font-family:'Liberation Sans', sans-serif;font-size:17.00px;font-weight:700;color:#000;line-height:1;white-space:pre;">2026</div>
<div style="left:864.73px;top:438.15px;font-family:'Liberation Sans', sans-serif;font-size:17.00px;font-weight:700;color:#000;line-height:1;white-space:pre;">Jan-26</div>
<div style="left:999.77px;top:418.15px;font-family:'Liberation Sans', sans-serif;font-size:17.00px;font-weight:700;color:#000;line-height:1;white-space:pre;">2026</div>
<div style="left:982.80px;top:438.15px;font-family:'Liberation Sans', sans-serif;font-size:17.00px;font-weight:700;color:#000;line-height:1;white-space:pre;">Feb-26</div>
<div style="left:1118.77px;top:418.15px;font-family:'Liberation Sans', sans-serif;font-size:17.00px;font-weight:700;color:#000;line-height:1;white-space:pre;">2026</div>
<div style="left:1101.79px;top:438.15px;font-family:'Liberation Sans', sans-serif;font-size:17.00px;font-weight:700;color:#000;line-height:1;white-space:pre;">Mar-26</div>
<div style="left:1237.77px;top:418.15px;font-family:'Liberation Sans', sans-serif;font-size:17.00px;font-weight:700;color:#000;line-height:1;white-space:pre;">2026</div>
<div style="left:1221.74px;top:438.15px;font-family:'Liberation Sans', sans-serif;font-size:17.00px;font-weight:700;color:#000;line-height:1;white-space:pre;">Apr-26</div>
<div style="left:1356.77px;top:418.15px;font-family:'Liberation Sans', sans-serif;font-size:17.00px;font-weight:700;color:#000;line-height:1;white-space:pre;">2026</div>
<div style="left:1336.96px;top:438.15px;font-family:'Liberation Sans', sans-serif;font-size:17.00px;font-weight:700;color:#000;line-height:1;white-space:pre;">May-26</div>
<div style="left:1475.77px;top:418.15px;font-family:'Liberation Sans', sans-serif;font-size:17.00px;font-weight:700;color:#000;line-height:1;white-space:pre;">2026</div>
<div style="left:1458.80px;top:438.15px;font-family:'Liberation Sans', sans-serif;font-size:17.00px;font-weight:700;color:#000;line-height:1;white-space:pre;">Jun-26</div>
<div style="left:1594.77px;top:418.15px;font-family:'Liberation Sans', sans-serif;font-size:17.00px;font-weight:700;color:#000;line-height:1;white-space:pre;">2026</div>
<div style="left:1583.46px;top:438.15px;font-family:'Liberation Sans', sans-serif;font-size:17.00px;font-weight:700;color:#000;line-height:1;white-space:pre;">Jul-26</div>
<div style="left:1713.77px;top:418.15px;font-family:'Liberation Sans', sans-serif;font-size:17.00px;font-weight:700;color:#000;line-height:1;white-space:pre;">2026</div>
<div style="left:1693.97px;top:438.15px;font-family:'Liberation Sans', sans-serif;font-size:17.00px;font-weight:700;color:#000;line-height:1;white-space:pre;">Aug-26</div>
<div style="left:1832.77px;top:418.15px;font-family:'Liberation Sans', sans-serif;font-size:17.00px;font-weight:700;color:#000;line-height:1;white-space:pre;">2026</div>
<div style="left:1814.85px;top:438.15px;font-family:'Liberation Sans', sans-serif;font-size:17.00px;font-weight:700;color:#000;line-height:1;white-space:pre;">Sep-26</div>
<div style="left:1951.77px;top:418.15px;font-family:'Liberation Sans', sans-serif;font-size:17.00px;font-weight:700;color:#000;line-height:1;white-space:pre;">2026</div>
<div style="left:1936.68px;top:438.15px;font-family:'Liberation Sans', sans-serif;font-size:17.00px;font-weight:700;color:#000;line-height:1;white-space:pre;">Oct-26</div>
<div style="left:2070.77px;top:418.15px;font-family:'Liberation Sans', sans-serif;font-size:17.00px;font-weight:700;color:#000;line-height:1;white-space:pre;">2026</div>
<div style="left:2051.91px;top:438.15px;font-family:'Liberation Sans', sans-serif;font-size:17.00px;font-weight:700;color:#000;line-height:1;white-space:pre;">Nov-26</div>
<div style="left:2189.77px;top:418.15px;font-family:'Liberation Sans', sans-serif;font-size:17.00px;font-weight:700;color:#000;line-height:1;white-space:pre;">2026</div>
<div style="left:2171.83px;top:438.15px;font-family:'Liberation Sans', sans-serif;font-size:17.00px;font-weight:700;color:#000;line-height:1;white-space:pre;">Dec-26</div>
<div style="left:2308.77px;top:418.15px;font-family:'Liberation Sans', sans-serif;font-size:17.00px;font-weight:700;color:#000;line-height:1;white-space:pre;">2027</div>
<div style="left:2292.72px;top:438.15px;font-family:'Liberation Sans', sans-serif;font-size:17.00px;font-weight:700;color:#000;line-height:1;white-space:pre;">Jan-27</div>
<div style="left:2427.77px;top:418.15px;font-family:'Liberation Sans', sans-serif;font-size:17.00px;font-weight:700;color:#000;line-height:1;white-space:pre;">2027</div>
<div style="left:2410.80px;top:438.15px;font-family:'Liberation Sans', sans-serif;font-size:17.00px;font-weight:700;color:#000;line-height:1;white-space:pre;">Feb-27</div>
<div style="left:2546.77px;top:418.15px;font-family:'Liberation Sans', sans-serif;font-size:17.00px;font-weight:700;color:#000;line-height:1;white-space:pre;">2027</div>
<div style="left:2529.79px;top:438.15px;font-family:'Liberation Sans', sans-serif;font-size:17.00px;font-weight:700;color:#000;line-height:1;white-space:pre;">Mar-27</div>
<div style="left:2665.77px;top:418.15px;font-family:'Liberation Sans', sans-serif;font-size:17.00px;font-weight:700;color:#000;line-height:1;white-space:pre;">2027</div>
<div style="left:2649.74px;top:438.15px;font-family:'Liberation Sans', sans-serif;font-size:17.00px;font-weight:700;color:#000;line-height:1;white-space:pre;">Apr-27</div>
<div style="left:2784.77px;top:418.15px;font-family:'Liberation Sans', sans-serif;font-size:17.00px;font-weight:700;color:#000;line-height:1;white-space:pre;">2027</div>
<div style="left:2764.96px;top:438.15px;font-family:'Liberation Sans', sans-serif;font-size:17.00px;font-weight:700;color:#000;line-height:1;white-space:pre;">May-27</div>
<div style="left:878.15px;top:550.00px;font-family:'Liberation Sans', sans-serif;font-size:14.00px;font-weight:400;color:#1c1c1c;line-height:1;white-space:pre;transform:scaleX(1.0600);transform-origin:0 0;">5,554</div>
<div style="left:988.90px;top:550.00px;font-family:'Liberation Sans', sans-serif;font-size:14.00px;font-weight:400;color:#1c1c1c;line-height:1;white-space:pre;transform:scaleX(1.0600);transform-origin:0 0;">10,551</div>
<div style="left:1107.90px;top:550.00px;font-family:'Liberation Sans', sans-serif;font-size:14.00px;font-weight:400;color:#1c1c1c;line-height:1;white-space:pre;transform:scaleX(1.0600);transform-origin:0 0;">12,496</div>
<div style="left:1226.90px;top:550.00px;font-family:'Liberation Sans', sans-serif;font-size:14.00px;font-weight:400;color:#1c1c1c;line-height:1;white-space:pre;transform:scaleX(1.0600);transform-origin:0 0;">12,440</div>
<div style="left:1345.90px;top:550.00px;font-family:'Liberation Sans', sans-serif;font-size:14.00px;font-weight:400;color:#1c1c1c;line-height:1;white-space:pre;transform:scaleX(1.0600);transform-origin:0 0;">13,610</div>
<div style="left:1464.90px;top:550.00px;font-family:'Liberation Sans', sans-serif;font-size:14.00px;font-weight:400;color:#1c1c1c;line-height:1;white-space:pre;transform:scaleX(1.0600);transform-origin:0 0;">13,917</div>
<div style="left:1583.90px;top:550.00px;font-family:'Liberation Sans', sans-serif;font-size:14.00px;font-weight:400;color:#1c1c1c;line-height:1;white-space:pre;transform:scaleX(1.0600);transform-origin:0 0;">15,136</div>
<div style="left:1702.90px;top:550.00px;font-family:'Liberation Sans', sans-serif;font-size:14.00px;font-weight:400;color:#1c1c1c;line-height:1;white-space:pre;transform:scaleX(1.0600);transform-origin:0 0;">15,653</div>
<div style="left:1821.90px;top:550.00px;font-family:'Liberation Sans', sans-serif;font-size:14.00px;font-weight:400;color:#1c1c1c;line-height:1;white-space:pre;transform:scaleX(1.0600);transform-origin:0 0;">16,133</div>
<div style="left:1940.90px;top:550.00px;font-family:'Liberation Sans', sans-serif;font-size:14.00px;font-weight:400;color:#1c1c1c;line-height:1;white-space:pre;transform:scaleX(1.0600);transform-origin:0 0;">17,425</div>
<div style="left:2059.90px;top:550.00px;font-family:'Liberation Sans', sans-serif;font-size:14.00px;font-weight:400;color:#1c1c1c;line-height:1;white-space:pre;transform:scaleX(1.0600);transform-origin:0 0;">17,610</div>
<div style="left:2178.90px;top:550.00px;font-family:'Liberation Sans', sans-serif;font-size:14.00px;font-weight:400;color:#1c1c1c;line-height:1;white-space:pre;transform:scaleX(1.0600);transform-origin:0 0;">18,950</div>
<div style="left:2297.90px;top:550.00px;font-family:'Liberation Sans', sans-serif;font-size:14.00px;font-weight:400;color:#1c1c1c;line-height:1;white-space:pre;transform:scaleX(1.0600);transform-origin:0 0;">30,359</div>
<div style="left:2416.90px;top:550.00px;font-family:'Liberation Sans', sans-serif;font-size:14.00px;font-weight:400;color:#1c1c1c;line-height:1;white-space:pre;transform:scaleX(1.0600);transform-origin:0 0;">40,464</div>
<div style="left:2535.90px;top:550.00px;font-family:'Liberation Sans', sans-serif;font-size:14.00px;font-weight:400;color:#1c1c1c;line-height:1;white-space:pre;transform:scaleX(1.0600);transform-origin:0 0;">48,514</div>
<div style="left:2654.90px;top:550.00px;font-family:'Liberation Sans', sans-serif;font-size:14.00px;font-weight:400;color:#1c1c1c;line-height:1;white-space:pre;transform:scaleX(1.0600);transform-origin:0 0;">48,826</div>
<div style="left:2773.90px;top:550.00px;font-family:'Liberation Sans', sans-serif;font-size:14.00px;font-weight:400;color:#1c1c1c;line-height:1;white-space:pre;transform:scaleX(1.0600);transform-origin:0 0;">53,925</div>
<div style="left:866.12px;top:569.90px;font-family:'Liberation Sans', sans-serif;font-size:14.00px;font-weight:400;color:#1c1c1c;line-height:1;white-space:pre;transform:scaleX(1.0600);transform-origin:0 0;">(11,304)</div>
<div style="left:984.01px;top:569.90px;font-family:'Liberation Sans', sans-serif;font-size:14.00px;font-weight:400;color:#1c1c1c;line-height:1;white-space:pre;transform:scaleX(1.0600);transform-origin:0 0;">(19,680)</div>
<div style="left:1103.01px;top:569.90px;font-family:'Liberation Sans', sans-serif;font-size:14.00px;font-weight:400;color:#1c1c1c;line-height:1;white-space:pre;transform:scaleX(1.0600);transform-origin:0 0;">(21,798)</div>
<div style="left:1222.01px;top:569.90px;font-family:'Liberation Sans', sans-serif;font-size:14.00px;font-weight:400;color:#1c1c1c;line-height:1;white-space:pre;transform:scaleX(1.0600);transform-origin:0 0;">(20,626)</div>
<div style="left:1341.01px;top:569.90px;font-family:'Liberation Sans', sans-serif;font-size:14.00px;font-weight:400;color:#1c1c1c;line-height:1;white-space:pre;transform:scaleX(1.0600);transform-origin:0 0;">(21,377)</div>
<div style="left:1460.01px;top:569.90px;font-family:'Liberation Sans', sans-serif;font-size:14.00px;font-weight:400;color:#1c1c1c;line-height:1;white-space:pre;transform:scaleX(1.0600);transform-origin:0 0;">(20,888)</div>
<div style="left:1579.01px;top:569.90px;font-family:'Liberation Sans', sans-serif;font-size:14.00px;font-weight:400;color:#1c1c1c;line-height:1;white-space:pre;transform:scaleX(1.0600);transform-origin:0 0;">(23,132)</div>
<div style="left:1698.01px;top:569.90px;font-family:'Liberation Sans', sans-serif;font-size:14.00px;font-weight:400;color:#1c1c1c;line-height:1;white-space:pre;transform:scaleX(1.0600);transform-origin:0 0;">(24,349)</div>
<div style="left:1817.01px;top:569.90px;font-family:'Liberation Sans', sans-serif;font-size:14.00px;font-weight:400;color:#1c1c1c;line-height:1;white-space:pre;transform:scaleX(1.0600);transform-origin:0 0;">(24,122)</div>
<div style="left:1936.01px;top:569.90px;font-family:'Liberation Sans', sans-serif;font-size:14.00px;font-weight:400;color:#1c1c1c;line-height:1;white-space:pre;transform:scaleX(1.0600);transform-origin:0 0;">(24,971)</div>
<div style="left:2055.01px;top:569.90px;font-family:'Liberation Sans', sans-serif;font-size:14.00px;font-weight:400;color:#1c1c1c;line-height:1;white-space:pre;transform:scaleX(1.0600);transform-origin:0 0;">(24,383)</div>
<div style="left:2174.01px;top:569.90px;font-family:'Liberation Sans', sans-serif;font-size:14.00px;font-weight:400;color:#1c1c1c;line-height:1;white-space:pre;transform:scaleX(1.0600);transform-origin:0 0;">(25,235)</div>
<div style="left:2293.01px;top:569.90px;font-family:'Liberation Sans', sans-serif;font-size:14.00px;font-weight:400;color:#1c1c1c;line-height:1;white-space:pre;transform:scaleX(1.0600);transform-origin:0 0;">(37,416)</div>
<div style="left:2412.01px;top:569.90px;font-family:'Liberation Sans', sans-serif;font-size:14.00px;font-weight:400;color:#1c1c1c;line-height:1;white-space:pre;transform:scaleX(1.0600);transform-origin:0 0;">(44,978)</div>
<div style="left:2531.01px;top:569.90px;font-family:'Liberation Sans', sans-serif;font-size:14.00px;font-weight:400;color:#1c1c1c;line-height:1;white-space:pre;transform:scaleX(1.0600);transform-origin:0 0;">(49,861)</div>
<div style="left:2650.01px;top:569.90px;font-family:'Liberation Sans', sans-serif;font-size:14.00px;font-weight:400;color:#1c1c1c;line-height:1;white-space:pre;transform:scaleX(1.0600);transform-origin:0 0;">(47,613)</div>
<div style="left:2769.01px;top:569.90px;font-family:'Liberation Sans', sans-serif;font-size:14.00px;font-weight:400;color:#1c1c1c;line-height:1;white-space:pre;transform:scaleX(1.0600);transform-origin:0 0;">(49,540)</div>
<div style="left:873.28px;top:589.90px;font-family:'Liberation Sans', sans-serif;font-size:14.00px;font-weight:400;color:#1c1c1c;line-height:1;white-space:pre;transform:scaleX(1.0600);transform-origin:0 0;">(1,000)</div>
<div style="left:992.28px;top:589.90px;font-family:'Liberation Sans', sans-serif;font-size:14.00px;font-weight:400;color:#1c1c1c;line-height:1;white-space:pre;transform:scaleX(1.0600);transform-origin:0 0;">(1,000)</div>
<div style="left:1111.28px;top:589.90px;font-family:'Liberation Sans', sans-serif;font-size:14.00px;font-weight:400;color:#1c1c1c;line-height:1;white-space:pre;transform:scaleX(1.0600);transform-origin:0 0;">(1,667)</div>
<div style="left:1230.28px;top:589.90px;font-family:'Liberation Sans', sans-serif;font-size:14.00px;font-weight:400;color:#1c1c1c;line-height:1;white-space:pre;transform:scaleX(1.0600);transform-origin:0 0;">(1,656)</div>
<div style="left:1349.28px;top:589.90px;font-family:'Liberation Sans', sans-serif;font-size:14.00px;font-weight:400;color:#1c1c1c;line-height:1;white-space:pre;transform:scaleX(1.0600);transform-origin:0 0;">(1,644)</div>
<div style="left:1468.28px;top:589.90px;font-family:'Liberation Sans', sans-serif;font-size:14.00px;font-weight:400;color:#1c1c1c;line-height:1;white-space:pre;transform:scaleX(1.0600);transform-origin:0 0;">(1,633)</div>
<div style="left:1587.28px;top:589.90px;font-family:'Liberation Sans', sans-serif;font-size:14.00px;font-weight:400;color:#1c1c1c;line-height:1;white-space:pre;transform:scaleX(1.0600);transform-origin:0 0;">(1,622)</div>
<div style="left:1707.37px;top:589.90px;font-family:'Liberation Sans', sans-serif;font-size:14.00px;font-weight:400;color:#1c1c1c;line-height:1;white-space:pre;transform:scaleX(1.0600);transform-origin:0 0;">(1,611)</div>
<div style="left:1825.28px;top:589.90px;font-family:'Liberation Sans', sans-serif;font-size:14.00px;font-weight:400;color:#1c1c1c;line-height:1;white-space:pre;transform:scaleX(1.0600);transform-origin:0 0;">(1,600)</div>
<div style="left:1944.28px;top:589.90px;font-family:'Liberation Sans', sans-serif;font-size:14.00px;font-weight:400;color:#1c1c1c;line-height:1;white-space:pre;transform:scaleX(1.0600);transform-origin:0 0;">(1,589)</div>
<div style="left:2063.28px;top:589.90px;font-family:'Liberation Sans', sans-serif;font-size:14.00px;font-weight:400;color:#1c1c1c;line-height:1;white-space:pre;transform:scaleX(1.0600);transform-origin:0 0;">(1,578)</div>
<div style="left:2182.28px;top:589.90px;font-family:'Liberation Sans', sans-serif;font-size:14.00px;font-weight:400;color:#1c1c1c;line-height:1;white-space:pre;transform:scaleX(1.0600);transform-origin:0 0;">(1,567)</div>
<div style="left:2301.28px;top:589.90px;font-family:'Liberation Sans', sans-serif;font-size:14.00px;font-weight:400;color:#1c1c1c;line-height:1;white-space:pre;transform:scaleX(1.0600);transform-origin:0 0;">(1,556)</div>
<div style="left:2420.28px;top:589.90px;font-family:'Liberation Sans', sans-serif;font-size:14.00px;font-weight:400;color:#1c1c1c;line-height:1;white-space:pre;transform:scaleX(1.0600);transform-origin:0 0;">(1,534)</div>
<div style="left:2539.28px;top:589.90px;font-family:'Liberation Sans', sans-serif;font-size:14.00px;font-weight:400;color:#1c1c1c;line-height:1;white-space:pre;transform:scaleX(1.0600);transform-origin:0 0;">(1,512)</div>
<div style="left:2658.28px;top:589.90px;font-family:'Liberation Sans', sans-serif;font-size:14.00px;font-weight:400;color:#1c1c1c;line-height:1;white-space:pre;transform:scaleX(1.0600);transform-origin:0 0;">(1,491)</div>
<div style="left:2777.28px;top:589.90px;font-family:'Liberation Sans', sans-serif;font-size:14.00px;font-weight:400;color:#1c1c1c;line-height:1;white-space:pre;transform:scaleX(1.0600);transform-origin:0 0;">(1,469)</div>
<div style="left:910.35px;top:609.70px;font-family:'Liberation Sans', sans-serif;font-size:14.00px;font-weight:400;color:#1c1c1c;line-height:1;white-space:pre;transform:scaleX(1.0600);transform-origin:0 0;">-</div>
<div style="left:1029.35px;top:609.70px;font-family:'Liberation Sans', sans-serif;font-size:14.00px;font-weight:400;color:#1c1c1c;line-height:1;white-space:pre;transform:scaleX(1.0600);transform-origin:0 0;">-</div>
<div style="left:1148.35px;top:609.70px;font-family:'Liberation Sans', sans-serif;font-size:14.00px;font-weight:400;color:#1c1c1c;line-height:1;white-space:pre;transform:scaleX(1.0600);transform-origin:0 0;">-</div>
<div style="left:1267.35px;top:609.70px;font-family:'Liberation Sans', sans-serif;font-size:14.00px;font-weight:400;color:#1c1c1c;line-height:1;white-space:pre;transform:scaleX(1.0600);transform-origin:0 0;">-</div>
<div style="left:1386.35px;top:609.70px;font-family:'Liberation Sans', sans-serif;font-size:14.00px;font-weight:400;color:#1c1c1c;line-height:1;white-space:pre;transform:scaleX(1.0600);transform-origin:0 0;">-</div>
<div style="left:1505.35px;top:609.70px;font-family:'Liberation Sans', sans-serif;font-size:14.00px;font-weight:400;color:#1c1c1c;line-height:1;white-space:pre;transform:scaleX(1.0600);transform-origin:0 0;">-</div>
<div style="left:1624.35px;top:609.70px;font-family:'Liberation Sans', sans-serif;font-size:14.00px;font-weight:400;color:#1c1c1c;line-height:1;white-space:pre;transform:scaleX(1.0600);transform-origin:0 0;">-</div>
<div style="left:1743.35px;top:609.70px;font-family:'Liberation Sans', sans-serif;font-size:14.00px;font-weight:400;color:#1c1c1c;line-height:1;white-space:pre;transform:scaleX(1.0600);transform-origin:0 0;">-</div>
<div style="left:1862.35px;top:609.70px;font-family:'Liberation Sans', sans-serif;font-size:14.00px;font-weight:400;color:#1c1c1c;line-height:1;white-space:pre;transform:scaleX(1.0600);transform-origin:0 0;">-</div>
<div style="left:1981.35px;top:609.70px;font-family:'Liberation Sans', sans-serif;font-size:14.00px;font-weight:400;color:#1c1c1c;line-height:1;white-space:pre;transform:scaleX(1.0600);transform-origin:0 0;">-</div>
<div style="left:2100.35px;top:609.70px;font-family:'Liberation Sans', sans-serif;font-size:14.00px;font-weight:400;color:#1c1c1c;line-height:1;white-space:pre;transform:scaleX(1.0600);transform-origin:0 0;">-</div>
<div style="left:2219.35px;top:609.70px;font-family:'Liberation Sans', sans-serif;font-size:14.00px;font-weight:400;color:#1c1c1c;line-height:1;white-space:pre;transform:scaleX(1.0600);transform-origin:0 0;">-</div>
<div style="left:2338.35px;top:609.70px;font-family:'Liberation Sans', sans-serif;font-size:14.00px;font-weight:400;color:#1c1c1c;line-height:1;white-space:pre;transform:scaleX(1.0600);transform-origin:0 0;">-</div>
<div style="left:2457.35px;top:609.70px;font-family:'Liberation Sans', sans-serif;font-size:14.00px;font-weight:400;color:#1c1c1c;line-height:1;white-space:pre;transform:scaleX(1.0600);transform-origin:0 0;">-</div>
<div style="left:2576.35px;top:609.70px;font-family:'Liberation Sans', sans-serif;font-size:14.00px;font-weight:400;color:#1c1c1c;line-height:1;white-space:pre;transform:scaleX(1.0600);transform-origin:0 0;">-</div>
<div style="left:2670.65px;top:609.70px;font-family:'Liberation Sans', sans-serif;font-size:14.00px;font-weight:400;color:#1c1c1c;line-height:1;white-space:pre;transform:scaleX(1.0600);transform-origin:0 0;">(259)</div>
<div style="left:2789.65px;top:609.70px;font-family:'Liberation Sans', sans-serif;font-size:14.00px;font-weight:400;color:#1c1c1c;line-height:1;white-space:pre;transform:scaleX(1.0600);transform-origin:0 0;">(878)</div>
<div style="left:860.11px;top:628.07px;font-family:'Liberation Serif', serif;font-size:17.50px;font-weight:700;color:#ffffff;line-height:1;white-space:pre;transform:scaleX(1.1500);transform-origin:0 0;">(6,750)</div>
<div style="left:969.05px;top:628.07px;font-family:'Liberation Serif', serif;font-size:17.50px;font-weight:700;color:#ffffff;line-height:1;white-space:pre;transform:scaleX(1.1500);transform-origin:0 0;">(10,129)</div>
<div style="left:1088.05px;top:628.07px;font-family:'Liberation Serif', serif;font-size:17.50px;font-weight:700;color:#ffffff;line-height:1;white-space:pre;transform:scaleX(1.1500);transform-origin:0 0;">(10,969)</div>
<div style="left:1217.11px;top:628.07px;font-family:'Liberation Serif', serif;font-size:17.50px;font-weight:700;color:#ffffff;line-height:1;white-space:pre;transform:scaleX(1.1500);transform-origin:0 0;">(9,842)</div>
<div style="left:1336.11px;top:628.07px;font-family:'Liberation Serif', serif;font-size:17.50px;font-weight:700;color:#ffffff;line-height:1;white-space:pre;transform:scaleX(1.1500);transform-origin:0 0;">(9,412)</div>
<div style="left:1455.11px;top:628.07px;font-family:'Liberation Serif', serif;font-size:17.50px;font-weight:700;color:#ffffff;line-height:1;white-space:pre;transform:scaleX(1.1500);transform-origin:0 0;">(8,604)</div>
<div style="left:1574.11px;top:628.07px;font-family:'Liberation Serif', serif;font-size:17.50px;font-weight:700;color:#ffffff;line-height:1;white-space:pre;transform:scaleX(1.1500);transform-origin:0 0;">(9,618)</div>
<div style="left:1683.05px;top:628.07px;font-family:'Liberation Serif', serif;font-size:17.50px;font-weight:700;color:#ffffff;line-height:1;white-space:pre;transform:scaleX(1.1500);transform-origin:0 0;">(10,308)</div>
<div style="left:1812.11px;top:628.07px;font-family:'Liberation Serif', serif;font-size:17.50px;font-weight:700;color:#ffffff;line-height:1;white-space:pre;transform:scaleX(1.1500);transform-origin:0 0;">(9,588)</div>
<div style="left:1931.11px;top:628.07px;font-family:'Liberation Serif', serif;font-size:17.50px;font-weight:700;color:#ffffff;line-height:1;white-space:pre;transform:scaleX(1.1500);transform-origin:0 0;">(9,135)</div>
<div style="left:2050.11px;top:628.07px;font-family:'Liberation Serif', serif;font-size:17.50px;font-weight:700;color:#ffffff;line-height:1;white-space:pre;transform:scaleX(1.1500);transform-origin:0 0;">(8,351)</div>
<div style="left:2169.11px;top:628.07px;font-family:'Liberation Serif', serif;font-size:17.50px;font-weight:700;color:#ffffff;line-height:1;white-space:pre;transform:scaleX(1.1500);transform-origin:0 0;">(7,851)</div>
<div style="left:2288.11px;top:628.07px;font-family:'Liberation Serif', serif;font-size:17.50px;font-weight:700;color:#ffffff;line-height:1;white-space:pre;transform:scaleX(1.1500);transform-origin:0 0;">(8,613)</div>
<div style="left:2407.11px;top:628.07px;font-family:'Liberation Serif', serif;font-size:17.50px;font-weight:700;color:#ffffff;line-height:1;white-space:pre;transform:scaleX(1.1500);transform-origin:0 0;">(6,048)</div>
<div style="left:2526.11px;top:628.07px;font-family:'Liberation Serif', serif;font-size:17.50px;font-weight:700;color:#ffffff;line-height:1;white-space:pre;transform:scaleX(1.1500);transform-origin:0 0;">(2,859)</div>
<div style="left:2660.21px;top:628.07px;font-family:'Liberation Serif', serif;font-size:17.50px;font-weight:700;color:#ffffff;line-height:1;white-space:pre;transform:scaleX(1.1500);transform-origin:0 0;">(537)</div>
<div style="left:2770.12px;top:628.07px;font-family:'Liberation Serif', serif;font-size:17.50px;font-weight:700;color:#ffffff;line-height:1;white-space:pre;transform:scaleX(1.1500);transform-origin:0 0;">2,039</div>
<div style="left:873.28px;top:693.50px;font-family:'Liberation Sans', sans-serif;font-size:14.00px;font-weight:400;color:#1c1c1c;line-height:1;white-space:pre;transform:scaleX(1.0600);transform-origin:0 0;">(8,000)</div>
<div style="left:992.28px;top:693.50px;font-family:'Liberation Sans', sans-serif;font-size:14.00px;font-weight:400;color:#1c1c1c;line-height:1;white-space:pre;transform:scaleX(1.0600);transform-origin:0 0;">(7,500)</div>
<div style="left:1103.01px;top:693.50px;font-family:'Liberation Sans', sans-serif;font-size:14.00px;font-weight:400;color:#1c1c1c;line-height:1;white-space:pre;transform:scaleX(1.0600);transform-origin:0 0;">(10,000)</div>
<div style="left:1230.28px;top:693.50px;font-family:'Liberation Sans', sans-serif;font-size:14.00px;font-weight:400;color:#1c1c1c;line-height:1;white-space:pre;transform:scaleX(1.0600);transform-origin:0 0;">(1,500)</div>
<div style="left:1386.35px;top:693.50px;font-family:'Liberation Sans', sans-serif;font-size:14.00px;font-weight:400;color:#1c1c1c;line-height:1;white-space:pre;transform:scaleX(1.0600);transform-origin:0 0;">-</div>
<div style="left:1468.28px;top:693.50px;font-family:'Liberation Sans', sans-serif;font-size:14.00px;font-weight:400;color:#1c1c1c;line-height:1;white-space:pre;transform:scaleX(1.0600);transform-origin:0 0;">(2,000)</div>
<div style="left:1587.28px;top:693.50px;font-family:'Liberation Sans', sans-serif;font-size:14.00px;font-weight:400;color:#1c1c1c;line-height:1;white-space:pre;transform:scaleX(1.0600);transform-origin:0 0;">(2,000)</div>
<div style="left:1706.28px;top:693.50px;font-family:'Liberation Sans', sans-serif;font-size:14.00px;font-weight:400;color:#1c1c1c;line-height:1;white-space:pre;transform:scaleX(1.0600);transform-origin:0 0;">(1,000)</div>
<div style="left:1862.35px;top:693.50px;font-family:'Liberation Sans', sans-serif;font-size:14.00px;font-weight:400;color:#1c1c1c;line-height:1;white-space:pre;transform:scaleX(1.0600);transform-origin:0 0;">-</div>
<div style="left:1981.35px;top:693.50px;font-family:'Liberation Sans', sans-serif;font-size:14.00px;font-weight:400;color:#1c1c1c;line-height:1;white-space:pre;transform:scaleX(1.0600);transform-origin:0 0;">-</div>
<div style="left:2100.35px;top:693.50px;font-family:'Liberation Sans', sans-serif;font-size:14.00px;font-weight:400;color:#1c1c1c;line-height:1;white-space:pre;transform:scaleX(1.0600);transform-origin:0 0;">-</div>
<div style="left:2219.35px;top:693.50px;font-family:'Liberation Sans', sans-serif;font-size:14.00px;font-weight:400;color:#1c1c1c;line-height:1;white-space:pre;transform:scaleX(1.0600);transform-origin:0 0;">-</div>
<div style="left:2338.35px;top:693.50px;font-family:'Liberation Sans', sans-serif;font-size:14.00px;font-weight:400;color:#1c1c1c;line-height:1;white-space:pre;transform:scaleX(1.0600);transform-origin:0 0;">-</div>
<div style="left:2457.35px;top:693.50px;font-family:'Liberation Sans', sans-serif;font-size:14.00px;font-weight:400;color:#1c1c1c;line-height:1;white-space:pre;transform:scaleX(1.0600);transform-origin:0 0;">-</div>
<div style="left:2576.35px;top:693.50px;font-family:'Liberation Sans', sans-serif;font-size:14.00px;font-weight:400;color:#1c1c1c;line-height:1;white-space:pre;transform:scaleX(1.0600);transform-origin:0 0;">-</div>
<div style="left:2695.35px;top:693.50px;font-family:'Liberation Sans', sans-serif;font-size:14.00px;font-weight:400;color:#1c1c1c;line-height:1;white-space:pre;transform:scaleX(1.0600);transform-origin:0 0;">-</div>
<div style="left:2814.35px;top:693.50px;font-family:'Liberation Sans', sans-serif;font-size:14.00px;font-weight:400;color:#1c1c1c;line-height:1;white-space:pre;transform:scaleX(1.0600);transform-origin:0 0;">-</div>
<div style="left:860.11px;top:716.17px;font-family:'Liberation Serif', serif;font-size:17.50px;font-weight:700;color:#ffffff;line-height:1;white-space:pre;transform:scaleX(1.1500);transform-origin:0 0;">(8,000)</div>
<div style="left:979.11px;top:716.17px;font-family:'Liberation Serif', serif;font-size:17.50px;font-weight:700;color:#ffffff;line-height:1;white-space:pre;transform:scaleX(1.1500);transform-origin:0 0;">(7,500)</div>
<div style="left:1088.05px;top:716.17px;font-family:'Liberation Serif', serif;font-size:17.50px;font-weight:700;color:#ffffff;line-height:1;white-space:pre;transform:scaleX(1.1500);transform-origin:0 0;">(10,000)</div>
<div style="left:1217.11px;top:716.17px;font-family:'Liberation Serif', serif;font-size:17.50px;font-weight:700;color:#ffffff;line-height:1;white-space:pre;transform:scaleX(1.1500);transform-origin:0 0;">(1,500)</div>
<div style="left:1381.17px;top:715.02px;font-family:'Liberation Sans', sans-serif;font-size:17.50px;font-weight:400;color:#ffffff;line-height:1;white-space:pre;">-</div>
<div style="left:1455.11px;top:716.17px;font-family:'Liberation Serif', serif;font-size:17.50px;font-weight:700;color:#ffffff;line-height:1;white-space:pre;transform:scaleX(1.1500);transform-origin:0 0;">(2,000)</div>
<div style="left:1574.11px;top:716.17px;font-family:'Liberation Serif', serif;font-size:17.50px;font-weight:700;color:#ffffff;line-height:1;white-space:pre;transform:scaleX(1.1500);transform-origin:0 0;">(2,000)</div>
<div style="left:1693.11px;top:716.17px;font-family:'Liberation Serif', serif;font-size:17.50px;font-weight:700;color:#ffffff;line-height:1;white-space:pre;transform:scaleX(1.1500);transform-origin:0 0;">(1,000)</div>
<div style="left:1857.17px;top:715.02px;font-family:'Liberation Sans', sans-serif;font-size:17.50px;font-weight:400;color:#ffffff;line-height:1;white-space:pre;">-</div>
<div style="left:1976.17px;top:715.02px;font-family:'Liberation Sans', sans-serif;font-size:17.50px;font-weight:400;color:#ffffff;line-height:1;white-space:pre;">-</div>
<div style="left:2095.17px;top:715.02px;font-family:'Liberation Sans', sans-serif;font-size:17.50px;font-weight:400;color:#ffffff;line-height:1;white-space:pre;">-</div>
<div style="left:2214.17px;top:715.02px;font-family:'Liberation Sans', sans-serif;font-size:17.50px;font-weight:400;color:#ffffff;line-height:1;white-space:pre;">-</div>
<div style="left:2333.17px;top:715.02px;font-family:'Liberation Sans', sans-serif;font-size:17.50px;font-weight:400;color:#ffffff;line-height:1;white-space:pre;">-</div>
<div style="left:2452.17px;top:715.02px;font-family:'Liberation Sans', sans-serif;font-size:17.50px;font-weight:400;color:#ffffff;line-height:1;white-space:pre;">-</div>
<div style="left:2571.17px;top:715.02px;font-family:'Liberation Sans', sans-serif;font-size:17.50px;font-weight:400;color:#ffffff;line-height:1;white-space:pre;">-</div>
<div style="left:2690.17px;top:715.02px;font-family:'Liberation Sans', sans-serif;font-size:17.50px;font-weight:400;color:#ffffff;line-height:1;white-space:pre;">-</div>
<div style="left:2809.17px;top:715.02px;font-family:'Liberation Sans', sans-serif;font-size:17.50px;font-weight:400;color:#ffffff;line-height:1;white-space:pre;">-</div>
<div style="left:861.65px;top:781.70px;font-family:'Liberation Sans', sans-serif;font-size:14.00px;font-weight:400;color:#1c1c1c;line-height:1;white-space:pre;transform:scaleX(1.0600);transform-origin:0 0;">200,000</div>
<div style="left:1029.35px;top:781.70px;font-family:'Liberation Sans', sans-serif;font-size:14.00px;font-weight:400;color:#1c1c1c;line-height:1;white-space:pre;transform:scaleX(1.0600);transform-origin:0 0;">-</div>
<div style="left:1099.65px;top:781.70px;font-family:'Liberation Sans', sans-serif;font-size:14.00px;font-weight:400;color:#1c1c1c;line-height:1;white-space:pre;transform:scaleX(1.0600);transform-origin:0 0;">100,000</div>
<div style="left:1267.35px;top:781.70px;font-family:'Liberation Sans', sans-serif;font-size:14.00px;font-weight:400;color:#1c1c1c;line-height:1;white-space:pre;transform:scaleX(1.0600);transform-origin:0 0;">-</div>
<div style="left:1386.35px;top:781.70px;font-family:'Liberation Sans', sans-serif;font-size:14.00px;font-weight:400;color:#1c1c1c;line-height:1;white-space:pre;transform:scaleX(1.0600);transform-origin:0 0;">-</div>
<div style="left:1505.35px;top:781.70px;font-family:'Liberation Sans', sans-serif;font-size:14.00px;font-weight:400;color:#1c1c1c;line-height:1;white-space:pre;transform:scaleX(1.0600);transform-origin:0 0;">-</div>
<div style="left:1624.35px;top:781.70px;font-family:'Liberation Sans', sans-serif;font-size:14.00px;font-weight:400;color:#1c1c1c;line-height:1;white-space:pre;transform:scaleX(1.0600);transform-origin:0 0;">-</div>
<div style="left:1743.35px;top:781.70px;font-family:'Liberation Sans', sans-serif;font-size:14.00px;font-weight:400;color:#1c1c1c;line-height:1;white-space:pre;transform:scaleX(1.0600);transform-origin:0 0;">-</div>
<div style="left:1862.35px;top:781.70px;font-family:'Liberation Sans', sans-serif;font-size:14.00px;font-weight:400;color:#1c1c1c;line-height:1;white-space:pre;transform:scaleX(1.0600);transform-origin:0 0;">-</div>
<div style="left:1981.35px;top:781.70px;font-family:'Liberation Sans', sans-serif;font-size:14.00px;font-weight:400;color:#1c1c1c;line-height:1;white-space:pre;transform:scaleX(1.0600);transform-origin:0 0;">-</div>
<div style="left:2100.35px;top:781.70px;font-family:'Liberation Sans', sans-serif;font-size:14.00px;font-weight:400;color:#1c1c1c;line-height:1;white-space:pre;transform:scaleX(1.0600);transform-origin:0 0;">-</div>
<div style="left:2219.35px;top:781.70px;font-family:'Liberation Sans', sans-serif;font-size:14.00px;font-weight:400;color:#1c1c1c;line-height:1;white-space:pre;transform:scaleX(1.0600);transform-origin:0 0;">-</div>
<div style="left:2338.35px;top:781.70px;font-family:'Liberation Sans', sans-serif;font-size:14.00px;font-weight:400;color:#1c1c1c;line-height:1;white-space:pre;transform:scaleX(1.0600);transform-origin:0 0;">-</div>
<div style="left:2457.35px;top:781.70px;font-family:'Liberation Sans', sans-serif;font-size:14.00px;font-weight:400;color:#1c1c1c;line-height:1;white-space:pre;transform:scaleX(1.0600);transform-origin:0 0;">-</div>
<div style="left:2576.35px;top:781.70px;font-family:'Liberation Sans', sans-serif;font-size:14.00px;font-weight:400;color:#1c1c1c;line-height:1;white-space:pre;transform:scaleX(1.0600);transform-origin:0 0;">-</div>
<div style="left:2695.35px;top:781.70px;font-family:'Liberation Sans', sans-serif;font-size:14.00px;font-weight:400;color:#1c1c1c;line-height:1;white-space:pre;transform:scaleX(1.0600);transform-origin:0 0;">-</div>
<div style="left:2814.35px;top:781.70px;font-family:'Liberation Sans', sans-serif;font-size:14.00px;font-weight:400;color:#1c1c1c;line-height:1;white-space:pre;transform:scaleX(1.0600);transform-origin:0 0;">-</div>
<div style="left:910.35px;top:801.80px;font-family:'Liberation Sans', sans-serif;font-size:14.00px;font-weight:400;color:#1c1c1c;line-height:1;white-space:pre;transform:scaleX(1.0600);transform-origin:0 0;">-</div>
<div style="left:1029.35px;top:801.80px;font-family:'Liberation Sans', sans-serif;font-size:14.00px;font-weight:400;color:#1c1c1c;line-height:1;white-space:pre;transform:scaleX(1.0600);transform-origin:0 0;">-</div>
<div style="left:1111.28px;top:801.80px;font-family:'Liberation Sans', sans-serif;font-size:14.00px;font-weight:400;color:#1c1c1c;line-height:1;white-space:pre;transform:scaleX(1.0600);transform-origin:0 0;">(1,667)</div>
<div style="left:1230.28px;top:801.80px;font-family:'Liberation Sans', sans-serif;font-size:14.00px;font-weight:400;color:#1c1c1c;line-height:1;white-space:pre;transform:scaleX(1.0600);transform-origin:0 0;">(1,667)</div>
<div style="left:1349.28px;top:801.80px;font-family:'Liberation Sans', sans-serif;font-size:14.00px;font-weight:400;color:#1c1c1c;line-height:1;white-space:pre;transform:scaleX(1.0600);transform-origin:0 0;">(1,667)</div>
<div style="left:1468.28px;top:801.80px;font-family:'Liberation Sans', sans-serif;font-size:14.00px;font-weight:400;color:#1c1c1c;line-height:1;white-space:pre;transform:scaleX(1.0600);transform-origin:0 0;">(1,667)</div>
<div style="left:1587.28px;top:801.80px;font-family:'Liberation Sans', sans-serif;font-size:14.00px;font-weight:400;color:#1c1c1c;line-height:1;white-space:pre;transform:scaleX(1.0600);transform-origin:0 0;">(1,667)</div>
<div style="left:1706.28px;top:801.80px;font-family:'Liberation Sans', sans-serif;font-size:14.00px;font-weight:400;color:#1c1c1c;line-height:1;white-space:pre;transform:scaleX(1.0600);transform-origin:0 0;">(1,667)</div>
<div style="left:1825.28px;top:801.80px;font-family:'Liberation Sans', sans-serif;font-size:14.00px;font-weight:400;color:#1c1c1c;line-height:1;white-space:pre;transform:scaleX(1.0600);transform-origin:0 0;">(1,667)</div>
<div style="left:1944.28px;top:801.80px;font-family:'Liberation Sans', sans-serif;font-size:14.00px;font-weight:400;color:#1c1c1c;line-height:1;white-space:pre;transform:scaleX(1.0600);transform-origin:0 0;">(1,667)</div>
<div style="left:2063.28px;top:801.80px;font-family:'Liberation Sans', sans-serif;font-size:14.00px;font-weight:400;color:#1c1c1c;line-height:1;white-space:pre;transform:scaleX(1.0600);transform-origin:0 0;">(1,667)</div>
<div style="left:2182.28px;top:801.80px;font-family:'Liberation Sans', sans-serif;font-size:14.00px;font-weight:400;color:#1c1c1c;line-height:1;white-space:pre;transform:scaleX(1.0600);transform-origin:0 0;">(1,667)</div>
<div style="left:2301.28px;top:801.80px;font-family:'Liberation Sans', sans-serif;font-size:14.00px;font-weight:400;color:#1c1c1c;line-height:1;white-space:pre;transform:scaleX(1.0600);transform-origin:0 0;">(3,770)</div>
<div style="left:2420.28px;top:801.80px;font-family:'Liberation Sans', sans-serif;font-size:14.00px;font-weight:400;color:#1c1c1c;line-height:1;white-space:pre;transform:scaleX(1.0600);transform-origin:0 0;">(3,780)</div>
<div style="left:2539.28px;top:801.80px;font-family:'Liberation Sans', sans-serif;font-size:14.00px;font-weight:400;color:#1c1c1c;line-height:1;white-space:pre;transform:scaleX(1.0600);transform-origin:0 0;">(3,791)</div>
<div style="left:2658.28px;top:801.80px;font-family:'Liberation Sans', sans-serif;font-size:14.00px;font-weight:400;color:#1c1c1c;line-height:1;white-space:pre;transform:scaleX(1.0600);transform-origin:0 0;">(3,801)</div>
<div style="left:2777.28px;top:801.80px;font-family:'Liberation Sans', sans-serif;font-size:14.00px;font-weight:400;color:#1c1c1c;line-height:1;white-space:pre;transform:scaleX(1.0600);transform-origin:0 0;">(3,812)</div>
<div style="left:861.65px;top:821.50px;font-family:'Liberation Sans', sans-serif;font-size:14.00px;font-weight:400;color:#1c1c1c;line-height:1;white-space:pre;transform:scaleX(1.0600);transform-origin:0 0;">700,000</div>
<div style="left:1029.35px;top:821.50px;font-family:'Liberation Sans', sans-serif;font-size:14.00px;font-weight:400;color:#1c1c1c;line-height:1;white-space:pre;transform:scaleX(1.0600);transform-origin:0 0;">-</div>
<div style="left:1148.35px;top:821.50px;font-family:'Liberation Sans', sans-serif;font-size:14.00px;font-weight:400;color:#1c1c1c;line-height:1;white-space:pre;transform:scaleX(1.0600);transform-origin:0 0;">-</div>
<div style="left:1267.35px;top:821.50px;font-family:'Liberation Sans', sans-serif;font-size:14.00px;font-weight:400;color:#1c1c1c;line-height:1;white-space:pre;transform:scaleX(1.0600);transform-origin:0 0;">-</div>
<div style="left:1386.35px;top:821.50px;font-family:'Liberation Sans', sans-serif;font-size:14.00px;font-weight:400;color:#1c1c1c;line-height:1;white-space:pre;transform:scaleX(1.0600);transform-origin:0 0;">-</div>
<div style="left:1505.35px;top:821.50px;font-family:'Liberation Sans', sans-serif;font-size:14.00px;font-weight:400;color:#1c1c1c;line-height:1;white-space:pre;transform:scaleX(1.0600);transform-origin:0 0;">-</div>
<div style="left:1624.35px;top:821.50px;font-family:'Liberation Sans', sans-serif;font-size:14.00px;font-weight:400;color:#1c1c1c;line-height:1;white-space:pre;transform:scaleX(1.0600);transform-origin:0 0;">-</div>
<div style="left:1743.35px;top:821.50px;font-family:'Liberation Sans', sans-serif;font-size:14.00px;font-weight:400;color:#1c1c1c;line-height:1;white-space:pre;transform:scaleX(1.0600);transform-origin:0 0;">-</div>
<div style="left:1862.35px;top:821.50px;font-family:'Liberation Sans', sans-serif;font-size:14.00px;font-weight:400;color:#1c1c1c;line-height:1;white-space:pre;transform:scaleX(1.0600);transform-origin:0 0;">-</div>
<div style="left:1981.35px;top:821.50px;font-family:'Liberation Sans', sans-serif;font-size:14.00px;font-weight:400;color:#1c1c1c;line-height:1;white-space:pre;transform:scaleX(1.0600);transform-origin:0 0;">-</div>
<div style="left:2100.35px;top:821.50px;font-family:'Liberation Sans', sans-serif;font-size:14.00px;font-weight:400;color:#1c1c1c;line-height:1;white-space:pre;transform:scaleX(1.0600);transform-origin:0 0;">-</div>
<div style="left:2219.35px;top:821.50px;font-family:'Liberation Sans', sans-serif;font-size:14.00px;font-weight:400;color:#1c1c1c;line-height:1;white-space:pre;transform:scaleX(1.0600);transform-origin:0 0;">-</div>
<div style="left:2338.35px;top:821.50px;font-family:'Liberation Sans', sans-serif;font-size:14.00px;font-weight:400;color:#1c1c1c;line-height:1;white-space:pre;transform:scaleX(1.0600);transform-origin:0 0;">-</div>
<div style="left:2457.35px;top:821.50px;font-family:'Liberation Sans', sans-serif;font-size:14.00px;font-weight:400;color:#1c1c1c;line-height:1;white-space:pre;transform:scaleX(1.0600);transform-origin:0 0;">-</div>
<div style="left:2576.35px;top:821.50px;font-family:'Liberation Sans', sans-serif;font-size:14.00px;font-weight:400;color:#1c1c1c;line-height:1;white-space:pre;transform:scaleX(1.0600);transform-origin:0 0;">-</div>
<div style="left:2695.35px;top:821.50px;font-family:'Liberation Sans', sans-serif;font-size:14.00px;font-weight:400;color:#1c1c1c;line-height:1;white-space:pre;transform:scaleX(1.0600);transform-origin:0 0;">-</div>
<div style="left:2814.35px;top:821.50px;font-family:'Liberation Sans', sans-serif;font-size:14.00px;font-weight:400;color:#1c1c1c;line-height:1;white-space:pre;transform:scaleX(1.0600);transform-origin:0 0;">-</div>
<div style="left:910.35px;top:841.80px;font-family:'Liberation Sans', sans-serif;font-size:14.00px;font-weight:400;color:#1c1c1c;line-height:1;white-space:pre;transform:scaleX(1.0600);transform-origin:0 0;">-</div>
<div style="left:1029.35px;top:841.80px;font-family:'Liberation Sans', sans-serif;font-size:14.00px;font-weight:400;color:#1c1c1c;line-height:1;white-space:pre;transform:scaleX(1.0600);transform-origin:0 0;">-</div>
<div style="left:1148.35px;top:841.80px;font-family:'Liberation Sans', sans-serif;font-size:14.00px;font-weight:400;color:#1c1c1c;line-height:1;white-space:pre;transform:scaleX(1.0600);transform-origin:0 0;">-</div>
<div style="left:1267.35px;top:841.80px;font-family:'Liberation Sans', sans-serif;font-size:14.00px;font-weight:400;color:#1c1c1c;line-height:1;white-space:pre;transform:scaleX(1.0600);transform-origin:0 0;">-</div>
<div style="left:1386.35px;top:841.80px;font-family:'Liberation Sans', sans-serif;font-size:14.00px;font-weight:400;color:#1c1c1c;line-height:1;white-space:pre;transform:scaleX(1.0600);transform-origin:0 0;">-</div>
<div style="left:1505.35px;top:841.80px;font-family:'Liberation Sans', sans-serif;font-size:14.00px;font-weight:400;color:#1c1c1c;line-height:1;white-space:pre;transform:scaleX(1.0600);transform-origin:0 0;">-</div>
<div style="left:1624.35px;top:841.80px;font-family:'Liberation Sans', sans-serif;font-size:14.00px;font-weight:400;color:#1c1c1c;line-height:1;white-space:pre;transform:scaleX(1.0600);transform-origin:0 0;">-</div>
<div style="left:1743.35px;top:841.80px;font-family:'Liberation Sans', sans-serif;font-size:14.00px;font-weight:400;color:#1c1c1c;line-height:1;white-space:pre;transform:scaleX(1.0600);transform-origin:0 0;">-</div>
<div style="left:1862.35px;top:841.80px;font-family:'Liberation Sans', sans-serif;font-size:14.00px;font-weight:400;color:#1c1c1c;line-height:1;white-space:pre;transform:scaleX(1.0600);transform-origin:0 0;">-</div>
<div style="left:1981.35px;top:841.80px;font-family:'Liberation Sans', sans-serif;font-size:14.00px;font-weight:400;color:#1c1c1c;line-height:1;white-space:pre;transform:scaleX(1.0600);transform-origin:0 0;">-</div>
<div style="left:2100.35px;top:841.80px;font-family:'Liberation Sans', sans-serif;font-size:14.00px;font-weight:400;color:#1c1c1c;line-height:1;white-space:pre;transform:scaleX(1.0600);transform-origin:0 0;">-</div>
<div style="left:2219.35px;top:841.80px;font-family:'Liberation Sans', sans-serif;font-size:14.00px;font-weight:400;color:#1c1c1c;line-height:1;white-space:pre;transform:scaleX(1.0600);transform-origin:0 0;">-</div>
<div style="left:2338.35px;top:841.80px;font-family:'Liberation Sans', sans-serif;font-size:14.00px;font-weight:400;color:#1c1c1c;line-height:1;white-space:pre;transform:scaleX(1.0600);transform-origin:0 0;">-</div>
<div style="left:2457.35px;top:841.80px;font-family:'Liberation Sans', sans-serif;font-size:14.00px;font-weight:400;color:#1c1c1c;line-height:1;white-space:pre;transform:scaleX(1.0600);transform-origin:0 0;">-</div>
<div style="left:2576.35px;top:841.80px;font-family:'Liberation Sans', sans-serif;font-size:14.00px;font-weight:400;color:#1c1c1c;line-height:1;white-space:pre;transform:scaleX(1.0600);transform-origin:0 0;">-</div>
<div style="left:2695.35px;top:841.80px;font-family:'Liberation Sans', sans-serif;font-size:14.00px;font-weight:400;color:#1c1c1c;line-height:1;white-space:pre;transform:scaleX(1.0600);transform-origin:0 0;">-</div>
<div style="left:2814.35px;top:841.80px;font-family:'Liberation Sans', sans-serif;font-size:14.00px;font-weight:400;color:#1c1c1c;line-height:1;white-space:pre;transform:scaleX(1.0600);transform-origin:0 0;">-</div>
<div style="left:910.35px;top:861.50px;font-family:'Liberation Sans', sans-serif;font-size:14.00px;font-weight:400;color:#1c1c1c;line-height:1;white-space:pre;transform:scaleX(1.0600);transform-origin:0 0;">-</div>
<div style="left:1029.35px;top:861.50px;font-family:'Liberation Sans', sans-serif;font-size:14.00px;font-weight:400;color:#1c1c1c;line-height:1;white-space:pre;transform:scaleX(1.0600);transform-origin:0 0;">-</div>
<div style="left:1148.35px;top:861.50px;font-family:'Liberation Sans', sans-serif;font-size:14.00px;font-weight:400;color:#1c1c1c;line-height:1;white-space:pre;transform:scaleX(1.0600);transform-origin:0 0;">-</div>
<div style="left:1267.35px;top:861.50px;font-family:'Liberation Sans', sans-serif;font-size:14.00px;font-weight:400;color:#1c1c1c;line-height:1;white-space:pre;transform:scaleX(1.0600);transform-origin:0 0;">-</div>
<div style="left:1386.35px;top:861.50px;font-family:'Liberation Sans', sans-serif;font-size:14.00px;font-weight:400;color:#1c1c1c;line-height:1;white-space:pre;transform:scaleX(1.0600);transform-origin:0 0;">-</div>
<div style="left:1505.35px;top:861.50px;font-family:'Liberation Sans', sans-serif;font-size:14.00px;font-weight:400;color:#1c1c1c;line-height:1;white-space:pre;transform:scaleX(1.0600);transform-origin:0 0;">-</div>
<div style="left:1624.35px;top:861.50px;font-family:'Liberation Sans', sans-serif;font-size:14.00px;font-weight:400;color:#1c1c1c;line-height:1;white-space:pre;transform:scaleX(1.0600);transform-origin:0 0;">-</div>
<div style="left:1743.35px;top:861.50px;font-family:'Liberation Sans', sans-serif;font-size:14.00px;font-weight:400;color:#1c1c1c;line-height:1;white-space:pre;transform:scaleX(1.0600);transform-origin:0 0;">-</div>
<div style="left:1862.35px;top:861.50px;font-family:'Liberation Sans', sans-serif;font-size:14.00px;font-weight:400;color:#1c1c1c;line-height:1;white-space:pre;transform:scaleX(1.0600);transform-origin:0 0;">-</div>
<div style="left:1981.35px;top:861.50px;font-family:'Liberation Sans', sans-serif;font-size:14.00px;font-weight:400;color:#1c1c1c;line-height:1;white-space:pre;transform:scaleX(1.0600);transform-origin:0 0;">-</div>
<div style="left:2100.35px;top:861.50px;font-family:'Liberation Sans', sans-serif;font-size:14.00px;font-weight:400;color:#1c1c1c;line-height:1;white-space:pre;transform:scaleX(1.0600);transform-origin:0 0;">-</div>
<div style="left:2219.35px;top:861.50px;font-family:'Liberation Sans', sans-serif;font-size:14.00px;font-weight:400;color:#1c1c1c;line-height:1;white-space:pre;transform:scaleX(1.0600);transform-origin:0 0;">-</div>
<div style="left:2338.35px;top:861.50px;font-family:'Liberation Sans', sans-serif;font-size:14.00px;font-weight:400;color:#1c1c1c;line-height:1;white-space:pre;transform:scaleX(1.0600);transform-origin:0 0;">-</div>
<div style="left:2457.35px;top:861.50px;font-family:'Liberation Sans', sans-serif;font-size:14.00px;font-weight:400;color:#1c1c1c;line-height:1;white-space:pre;transform:scaleX(1.0600);transform-origin:0 0;">-</div>
<div style="left:2576.35px;top:861.50px;font-family:'Liberation Sans', sans-serif;font-size:14.00px;font-weight:400;color:#1c1c1c;line-height:1;white-space:pre;transform:scaleX(1.0600);transform-origin:0 0;">-</div>
<div style="left:2695.35px;top:861.50px;font-family:'Liberation Sans', sans-serif;font-size:14.00px;font-weight:400;color:#1c1c1c;line-height:1;white-space:pre;transform:scaleX(1.0600);transform-origin:0 0;">-</div>
<div style="left:2814.35px;top:861.50px;font-family:'Liberation Sans', sans-serif;font-size:14.00px;font-weight:400;color:#1c1c1c;line-height:1;white-space:pre;transform:scaleX(1.0600);transform-origin:0 0;">-</div>
<div style="left:845.99px;top:880.27px;font-family:'Liberation Serif', serif;font-size:17.50px;font-weight:700;color:#ffffff;line-height:1;white-space:pre;transform:scaleX(1.1500);transform-origin:0 0;">900,000</div>
<div style="left:1024.17px;top:879.12px;font-family:'Liberation Sans', sans-serif;font-size:17.50px;font-weight:400;color:#ffffff;line-height:1;white-space:pre;">-</div>
<div style="left:1094.06px;top:880.27px;font-family:'Liberation Serif', serif;font-size:17.50px;font-weight:700;color:#ffffff;line-height:1;white-space:pre;transform:scaleX(1.1500);transform-origin:0 0;">98,333</div>
<div style="left:1217.11px;top:880.27px;font-family:'Liberation Serif', serif;font-size:17.50px;font-weight:700;color:#ffffff;line-height:1;white-space:pre;transform:scaleX(1.1500);transform-origin:0 0;">(1,667)</div>
<div style="left:1336.11px;top:880.27px;font-family:'Liberation Serif', serif;font-size:17.50px;font-weight:700;color:#ffffff;line-height:1;white-space:pre;transform:scaleX(1.1500);transform-origin:0 0;">(1,667)</div>
<div style="left:1455.11px;top:880.27px;font-family:'Liberation Serif', serif;font-size:17.50px;font-weight:700;color:#ffffff;line-height:1;white-space:pre;transform:scaleX(1.1500);transform-origin:0 0;">(1,667)</div>
<div style="left:1574.11px;top:880.27px;font-family:'Liberation Serif', serif;font-size:17.50px;font-weight:700;color:#ffffff;line-height:1;white-space:pre;transform:scaleX(1.1500);transform-origin:0 0;">(1,667)</div>
<div style="left:1693.11px;top:880.27px;font-family:'Liberation Serif', serif;font-size:17.50px;font-weight:700;color:#ffffff;line-height:1;white-space:pre;transform:scaleX(1.1500);transform-origin:0 0;">(1,667)</div>
<div style="left:1812.11px;top:880.27px;font-family:'Liberation Serif', serif;font-size:17.50px;font-weight:700;color:#ffffff;line-height:1;white-space:pre;transform:scaleX(1.1500);transform-origin:0 0;">(1,667)</div>
<div style="left:1931.11px;top:880.27px;font-family:'Liberation Serif', serif;font-size:17.50px;font-weight:700;color:#ffffff;line-height:1;white-space:pre;transform:scaleX(1.1500);transform-origin:0 0;">(1,667)</div>
<div style="left:2050.11px;top:880.27px;font-family:'Liberation Serif', serif;font-size:17.50px;font-weight:700;color:#ffffff;line-height:1;white-space:pre;transform:scaleX(1.1500);transform-origin:0 0;">(1,667)</div>
<div style="left:2169.11px;top:880.27px;font-family:'Liberation Serif', serif;font-size:17.50px;font-weight:700;color:#ffffff;line-height:1;white-space:pre;transform:scaleX(1.1500);transform-origin:0 0;">(1,667)</div>
<div style="left:2288.11px;top:880.27px;font-family:'Liberation Serif', serif;font-size:17.50px;font-weight:700;color:#ffffff;line-height:1;white-space:pre;transform:scaleX(1.1500);transform-origin:0 0;">(3,770)</div>
<div style="left:2407.11px;top:880.27px;font-family:'Liberation Serif', serif;font-size:17.50px;font-weight:700;color:#ffffff;line-height:1;white-space:pre;transform:scaleX(1.1500);transform-origin:0 0;">(3,780)</div>
<div style="left:2526.11px;top:880.27px;font-family:'Liberation Serif', serif;font-size:17.50px;font-weight:700;color:#ffffff;line-height:1;white-space:pre;transform:scaleX(1.1500);transform-origin:0 0;">(3,791)</div>
<div style="left:2645.11px;top:880.27px;font-family:'Liberation Serif', serif;font-size:17.50px;font-weight:700;color:#ffffff;line-height:1;white-space:pre;transform:scaleX(1.1500);transform-origin:0 0;">(3,801)</div>
<div style="left:2764.11px;top:880.27px;font-family:'Liberation Serif', serif;font-size:17.50px;font-weight:700;color:#ffffff;line-height:1;white-space:pre;transform:scaleX(1.1500);transform-origin:0 0;">(3,812)</div>
<div style="left:845.99px;top:917.57px;font-family:'Liberation Serif', serif;font-size:17.50px;font-weight:700;color:#ffffff;line-height:1;white-space:pre;transform:scaleX(1.1500);transform-origin:0 0;">885,250</div>
<div style="left:969.05px;top:917.57px;font-family:'Liberation Serif', serif;font-size:17.50px;font-weight:700;color:#ffffff;line-height:1;white-space:pre;transform:scaleX(1.1500);transform-origin:0 0;">(17,629)</div>
<div style="left:1094.06px;top:917.57px;font-family:'Liberation Serif', serif;font-size:17.50px;font-weight:700;color:#ffffff;line-height:1;white-space:pre;transform:scaleX(1.1500);transform-origin:0 0;">77,365</div>
<div style="left:1207.05px;top:917.57px;font-family:'Liberation Serif', serif;font-size:17.50px;font-weight:700;color:#ffffff;line-height:1;white-space:pre;transform:scaleX(1.1500);transform-origin:0 0;">(13,009)</div>
<div style="left:1327.15px;top:917.57px;font-family:'Liberation Serif', serif;font-size:17.50px;font-weight:700;color:#ffffff;line-height:1;white-space:pre;transform:scaleX(1.1500);transform-origin:0 0;">(11,078)</div>
<div style="left:1445.05px;top:917.57px;font-family:'Liberation Serif', serif;font-size:17.50px;font-weight:700;color:#ffffff;line-height:1;white-space:pre;transform:scaleX(1.1500);transform-origin:0 0;">(12,271)</div>
<div style="left:1564.05px;top:917.57px;font-family:'Liberation Serif', serif;font-size:17.50px;font-weight:700;color:#ffffff;line-height:1;white-space:pre;transform:scaleX(1.1500);transform-origin:0 0;">(13,284)</div>
<div style="left:1683.05px;top:917.57px;font-family:'Liberation Serif', serif;font-size:17.50px;font-weight:700;color:#ffffff;line-height:1;white-space:pre;transform:scaleX(1.1500);transform-origin:0 0;">(12,974)</div>
<div style="left:1803.15px;top:917.57px;font-family:'Liberation Serif', serif;font-size:17.50px;font-weight:700;color:#ffffff;line-height:1;white-space:pre;transform:scaleX(1.1500);transform-origin:0 0;">(11,255)</div>
<div style="left:1921.05px;top:917.57px;font-family:'Liberation Serif', serif;font-size:17.50px;font-weight:700;color:#ffffff;line-height:1;white-space:pre;transform:scaleX(1.1500);transform-origin:0 0;">(10,802)</div>
<div style="left:2040.05px;top:917.57px;font-family:'Liberation Serif', serif;font-size:17.50px;font-weight:700;color:#ffffff;line-height:1;white-space:pre;transform:scaleX(1.1500);transform-origin:0 0;">(10,017)</div>
<div style="left:2169.11px;top:917.57px;font-family:'Liberation Serif', serif;font-size:17.50px;font-weight:700;color:#ffffff;line-height:1;white-space:pre;transform:scaleX(1.1500);transform-origin:0 0;">(9,518)</div>
<div style="left:2278.05px;top:917.57px;font-family:'Liberation Serif', serif;font-size:17.50px;font-weight:700;color:#ffffff;line-height:1;white-space:pre;transform:scaleX(1.1500);transform-origin:0 0;">(12,382)</div>
<div style="left:2407.11px;top:917.57px;font-family:'Liberation Serif', serif;font-size:17.50px;font-weight:700;color:#ffffff;line-height:1;white-space:pre;transform:scaleX(1.1500);transform-origin:0 0;">(9,828)</div>
<div style="left:2526.11px;top:917.57px;font-family:'Liberation Serif', serif;font-size:17.50px;font-weight:700;color:#ffffff;line-height:1;white-space:pre;transform:scaleX(1.1500);transform-origin:0 0;">(6,649)</div>
<div style="left:2645.11px;top:917.57px;font-family:'Liberation Serif', serif;font-size:17.50px;font-weight:700;color:#ffffff;line-height:1;white-space:pre;transform:scaleX(1.1500);transform-origin:0 0;">(4,338)</div>
<div style="left:2764.11px;top:917.57px;font-family:'Liberation Serif', serif;font-size:17.50px;font-weight:700;color:#ffffff;line-height:1;white-space:pre;transform:scaleX(1.1500);transform-origin:0 0;">(1,773)</div>
<div style="left:865.01px;top:1033.50px;font-family:'Liberation Sans', sans-serif;font-size:14.00px;font-weight:400;color:#1c1c1c;line-height:1;white-space:pre;transform:scaleX(1.0600);transform-origin:0 0;">(10,796)</div>
<div style="left:984.01px;top:1033.50px;font-family:'Liberation Sans', sans-serif;font-size:14.00px;font-weight:400;color:#1c1c1c;line-height:1;white-space:pre;transform:scaleX(1.0600);transform-origin:0 0;">(10,177)</div>
<div style="left:1103.01px;top:1033.50px;font-family:'Liberation Sans', sans-serif;font-size:14.00px;font-weight:400;color:#1c1c1c;line-height:1;white-space:pre;transform:scaleX(1.0600);transform-origin:0 0;">(10,224)</div>
<div style="left:1230.28px;top:1033.50px;font-family:'Liberation Sans', sans-serif;font-size:14.00px;font-weight:400;color:#1c1c1c;line-height:1;white-space:pre;transform:scaleX(1.0600);transform-origin:0 0;">(9,594)</div>
<div style="left:1349.28px;top:1033.50px;font-family:'Liberation Sans', sans-serif;font-size:14.00px;font-weight:400;color:#1c1c1c;line-height:1;white-space:pre;transform:scaleX(1.0600);transform-origin:0 0;">(8,963)</div>
<div style="left:1468.28px;top:1033.50px;font-family:'Liberation Sans', sans-serif;font-size:14.00px;font-weight:400;color:#1c1c1c;line-height:1;white-space:pre;transform:scaleX(1.0600);transform-origin:0 0;">(8,333)</div>
<div style="left:1579.01px;top:1033.50px;font-family:'Liberation Sans', sans-serif;font-size:14.00px;font-weight:400;color:#1c1c1c;line-height:1;white-space:pre;transform:scaleX(1.0600);transform-origin:0 0;">(10,590)</div>
<div style="left:1706.28px;top:1033.50px;font-family:'Liberation Sans', sans-serif;font-size:14.00px;font-weight:400;color:#1c1c1c;line-height:1;white-space:pre;transform:scaleX(1.0600);transform-origin:0 0;">(9,959)</div>
<div style="left:1825.28px;top:1033.50px;font-family:'Liberation Sans', sans-serif;font-size:14.00px;font-weight:400;color:#1c1c1c;line-height:1;white-space:pre;transform:scaleX(1.0600);transform-origin:0 0;">(9,329)</div>
<div style="left:1944.28px;top:1033.50px;font-family:'Liberation Sans', sans-serif;font-size:14.00px;font-weight:400;color:#1c1c1c;line-height:1;white-space:pre;transform:scaleX(1.0600);transform-origin:0 0;">(8,698)</div>
<div style="left:2063.28px;top:1033.50px;font-family:'Liberation Sans', sans-serif;font-size:14.00px;font-weight:400;color:#1c1c1c;line-height:1;white-space:pre;transform:scaleX(1.0600);transform-origin:0 0;">(8,068)</div>
<div style="left:2182.28px;top:1033.50px;font-family:'Liberation Sans', sans-serif;font-size:14.00px;font-weight:400;color:#1c1c1c;line-height:1;white-space:pre;transform:scaleX(1.0600);transform-origin:0 0;">(7,437)</div>
<div style="left:2301.28px;top:1033.50px;font-family:'Liberation Sans', sans-serif;font-size:14.00px;font-weight:400;color:#1c1c1c;line-height:1;white-space:pre;transform:scaleX(1.0600);transform-origin:0 0;">(7,184)</div>
<div style="left:2420.28px;top:1033.50px;font-family:'Liberation Sans', sans-serif;font-size:14.00px;font-weight:400;color:#1c1c1c;line-height:1;white-space:pre;transform:scaleX(1.0600);transform-origin:0 0;">(4,297)</div>
<div style="left:2540.37px;top:1033.50px;font-family:'Liberation Sans', sans-serif;font-size:14.00px;font-weight:400;color:#1c1c1c;line-height:1;white-space:pre;transform:scaleX(1.0600);transform-origin:0 0;">(1,411)</div>
<div style="left:2663.15px;top:1033.50px;font-family:'Liberation Sans', sans-serif;font-size:14.00px;font-weight:400;color:#1c1c1c;line-height:1;white-space:pre;transform:scaleX(1.0600);transform-origin:0 0;">1,217</div>
<div style="left:2782.15px;top:1033.50px;font-family:'Liberation Sans', sans-serif;font-size:14.00px;font-weight:400;color:#1c1c1c;line-height:1;white-space:pre;transform:scaleX(1.0600);transform-origin:0 0;">3,484</div>
<div style="left:878.15px;top:1051.60px;font-family:'Liberation Sans', sans-serif;font-size:14.00px;font-weight:400;color:#1c1c1c;line-height:1;white-space:pre;transform:scaleX(1.0600);transform-origin:0 0;">4,046</div>
<div style="left:1017.79px;top:1051.60px;font-family:'Liberation Sans', sans-serif;font-size:14.00px;font-weight:400;color:#1c1c1c;line-height:1;white-space:pre;transform:scaleX(1.0600);transform-origin:0 0;">48</div>
<div style="left:1123.65px;top:1051.60px;font-family:'Liberation Sans', sans-serif;font-size:14.00px;font-weight:400;color:#1c1c1c;line-height:1;white-space:pre;transform:scaleX(1.0600);transform-origin:0 0;">(744)</div>
<div style="left:1242.65px;top:1051.60px;font-family:'Liberation Sans', sans-serif;font-size:14.00px;font-weight:400;color:#1c1c1c;line-height:1;white-space:pre;transform:scaleX(1.0600);transform-origin:0 0;">(248)</div>
<div style="left:1361.65px;top:1051.60px;font-family:'Liberation Sans', sans-serif;font-size:14.00px;font-weight:400;color:#1c1c1c;line-height:1;white-space:pre;transform:scaleX(1.0600);transform-origin:0 0;">(448)</div>
<div style="left:1480.65px;top:1051.60px;font-family:'Liberation Sans', sans-serif;font-size:14.00px;font-weight:400;color:#1c1c1c;line-height:1;white-space:pre;transform:scaleX(1.0600);transform-origin:0 0;">(271)</div>
<div style="left:1604.54px;top:1051.60px;font-family:'Liberation Sans', sans-serif;font-size:14.00px;font-weight:400;color:#1c1c1c;line-height:1;white-space:pre;transform:scaleX(1.0600);transform-origin:0 0;">972</div>
<div style="left:1718.65px;top:1051.60px;font-family:'Liberation Sans', sans-serif;font-size:14.00px;font-weight:400;color:#1c1c1c;line-height:1;white-space:pre;transform:scaleX(1.0600);transform-origin:0 0;">(348)</div>
<div style="left:1837.65px;top:1051.60px;font-family:'Liberation Sans', sans-serif;font-size:14.00px;font-weight:400;color:#1c1c1c;line-height:1;white-space:pre;transform:scaleX(1.0600);transform-origin:0 0;">(260)</div>
<div style="left:1956.65px;top:1051.60px;font-family:'Liberation Sans', sans-serif;font-size:14.00px;font-weight:400;color:#1c1c1c;line-height:1;white-space:pre;transform:scaleX(1.0600);transform-origin:0 0;">(437)</div>
<div style="left:2075.65px;top:1051.60px;font-family:'Liberation Sans', sans-serif;font-size:14.00px;font-weight:400;color:#1c1c1c;line-height:1;white-space:pre;transform:scaleX(1.0600);transform-origin:0 0;">(283)</div>
<div style="left:2194.65px;top:1051.60px;font-family:'Liberation Sans', sans-serif;font-size:14.00px;font-weight:400;color:#1c1c1c;line-height:1;white-space:pre;transform:scaleX(1.0600);transform-origin:0 0;">(414)</div>
<div style="left:2301.28px;top:1051.60px;font-family:'Liberation Sans', sans-serif;font-size:14.00px;font-weight:400;color:#1c1c1c;line-height:1;white-space:pre;transform:scaleX(1.0600);transform-origin:0 0;">(1,429)</div>
<div style="left:2420.28px;top:1051.60px;font-family:'Liberation Sans', sans-serif;font-size:14.00px;font-weight:400;color:#1c1c1c;line-height:1;white-space:pre;transform:scaleX(1.0600);transform-origin:0 0;">(1,751)</div>
<div style="left:2539.28px;top:1051.60px;font-family:'Liberation Sans', sans-serif;font-size:14.00px;font-weight:400;color:#1c1c1c;line-height:1;white-space:pre;transform:scaleX(1.0600);transform-origin:0 0;">(1,448)</div>
<div style="left:2658.28px;top:1051.60px;font-family:'Liberation Sans', sans-serif;font-size:14.00px;font-weight:400;color:#1c1c1c;line-height:1;white-space:pre;transform:scaleX(1.0600);transform-origin:0 0;">(1,753)</div>
<div style="left:2777.28px;top:1051.60px;font-family:'Liberation Sans', sans-serif;font-size:14.00px;font-weight:400;color:#1c1c1c;line-height:1;white-space:pre;transform:scaleX(1.0600);transform-origin:0 0;">(1,446)</div>
<div style="left:860.11px;top:1069.67px;font-family:'Liberation Serif', serif;font-size:17.50px;font-weight:700;color:#ffffff;line-height:1;white-space:pre;transform:scaleX(1.1500);transform-origin:0 0;">(6,750)</div>
<div style="left:969.05px;top:1069.67px;font-family:'Liberation Serif', serif;font-size:17.50px;font-weight:700;color:#ffffff;line-height:1;white-space:pre;transform:scaleX(1.1500);transform-origin:0 0;">(10,129)</div>
<div style="left:1088.05px;top:1069.67px;font-family:'Liberation Serif', serif;font-size:17.50px;font-weight:700;color:#ffffff;line-height:1;white-space:pre;transform:scaleX(1.1500);transform-origin:0 0;">(10,969)</div>
<div style="left:1217.11px;top:1069.67px;font-family:'Liberation Serif', serif;font-size:17.50px;font-weight:700;color:#ffffff;line-height:1;white-space:pre;transform:scaleX(1.1500);transform-origin:0 0;">(9,842)</div>
<div style="left:1336.11px;top:1069.67px;font-family:'Liberation Serif', serif;font-size:17.50px;font-weight:700;color:#ffffff;line-height:1;white-space:pre;transform:scaleX(1.1500);transform-origin:0 0;">(9,412)</div>
<div style="left:1455.11px;top:1069.67px;font-family:'Liberation Serif', serif;font-size:17.50px;font-weight:700;color:#ffffff;line-height:1;white-space:pre;transform:scaleX(1.1500);transform-origin:0 0;">(8,604)</div>
<div style="left:1574.11px;top:1069.67px;font-family:'Liberation Serif', serif;font-size:17.50px;font-weight:700;color:#ffffff;line-height:1;white-space:pre;transform:scaleX(1.1500);transform-origin:0 0;">(9,618)</div>
<div style="left:1683.05px;top:1069.67px;font-family:'Liberation Serif', serif;font-size:17.50px;font-weight:700;color:#ffffff;line-height:1;white-space:pre;transform:scaleX(1.1500);transform-origin:0 0;">(10,308)</div>
<div style="left:1812.11px;top:1069.67px;font-family:'Liberation Serif', serif;font-size:17.50px;font-weight:700;color:#ffffff;line-height:1;white-space:pre;transform:scaleX(1.1500);transform-origin:0 0;">(9,588)</div>
<div style="left:1931.11px;top:1069.67px;font-family:'Liberation Serif', serif;font-size:17.50px;font-weight:700;color:#ffffff;line-height:1;white-space:pre;transform:scaleX(1.1500);transform-origin:0 0;">(9,135)</div>
<div style="left:2050.11px;top:1069.67px;font-family:'Liberation Serif', serif;font-size:17.50px;font-weight:700;color:#ffffff;line-height:1;white-space:pre;transform:scaleX(1.1500);transform-origin:0 0;">(8,351)</div>
<div style="left:2169.11px;top:1069.67px;font-family:'Liberation Serif', serif;font-size:17.50px;font-weight:700;color:#ffffff;line-height:1;white-space:pre;transform:scaleX(1.1500);transform-origin:0 0;">(7,851)</div>
<div style="left:2288.11px;top:1069.67px;font-family:'Liberation Serif', serif;font-size:17.50px;font-weight:700;color:#ffffff;line-height:1;white-space:pre;transform:scaleX(1.1500);transform-origin:0 0;">(8,613)</div>
<div style="left:2407.11px;top:1069.67px;font-family:'Liberation Serif', serif;font-size:17.50px;font-weight:700;color:#ffffff;line-height:1;white-space:pre;transform:scaleX(1.1500);transform-origin:0 0;">(6,048)</div>
<div style="left:2526.11px;top:1069.67px;font-family:'Liberation Serif', serif;font-size:17.50px;font-weight:700;color:#ffffff;line-height:1;white-space:pre;transform:scaleX(1.1500);transform-origin:0 0;">(2,859)</div>
<div style="left:2660.21px;top:1069.67px;font-family:'Liberation Serif', serif;font-size:17.50px;font-weight:700;color:#ffffff;line-height:1;white-space:pre;transform:scaleX(1.1500);transform-origin:0 0;">(537)</div>
<div style="left:2770.12px;top:1069.67px;font-family:'Liberation Serif', serif;font-size:17.50px;font-weight:700;color:#ffffff;line-height:1;white-space:pre;transform:scaleX(1.1500);transform-origin:0 0;">2,039</div>
<div style="left:873.28px;top:1135.70px;font-family:'Liberation Sans', sans-serif;font-size:14.00px;font-weight:400;color:#1c1c1c;line-height:1;white-space:pre;transform:scaleX(1.0600);transform-origin:0 0;">(8,000)</div>
<div style="left:992.28px;top:1135.70px;font-family:'Liberation Sans', sans-serif;font-size:14.00px;font-weight:400;color:#1c1c1c;line-height:1;white-space:pre;transform:scaleX(1.0600);transform-origin:0 0;">(7,500)</div>
<div style="left:1103.01px;top:1135.70px;font-family:'Liberation Sans', sans-serif;font-size:14.00px;font-weight:400;color:#1c1c1c;line-height:1;white-space:pre;transform:scaleX(1.0600);transform-origin:0 0;">(10,000)</div>
<div style="left:1230.28px;top:1135.70px;font-family:'Liberation Sans', sans-serif;font-size:14.00px;font-weight:400;color:#1c1c1c;line-height:1;white-space:pre;transform:scaleX(1.0600);transform-origin:0 0;">(1,500)</div>
<div style="left:1386.35px;top:1135.70px;font-family:'Liberation Sans', sans-serif;font-size:14.00px;font-weight:400;color:#1c1c1c;line-height:1;white-space:pre;transform:scaleX(1.0600);transform-origin:0 0;">-</div>
<div style="left:1468.28px;top:1135.70px;font-family:'Liberation Sans', sans-serif;font-size:14.00px;font-weight:400;color:#1c1c1c;line-height:1;white-space:pre;transform:scaleX(1.0600);transform-origin:0 0;">(2,000)</div>
<div style="left:1587.28px;top:1135.70px;font-family:'Liberation Sans', sans-serif;font-size:14.00px;font-weight:400;color:#1c1c1c;line-height:1;white-space:pre;transform:scaleX(1.0600);transform-origin:0 0;">(2,000)</div>
<div style="left:1706.28px;top:1135.70px;font-family:'Liberation Sans', sans-serif;font-size:14.00px;font-weight:400;color:#1c1c1c;line-height:1;white-space:pre;transform:scaleX(1.0600);transform-origin:0 0;">(1,000)</div>
<div style="left:1862.35px;top:1135.70px;font-family:'Liberation Sans', sans-serif;font-size:14.00px;font-weight:400;color:#1c1c1c;line-height:1;white-space:pre;transform:scaleX(1.0600);transform-origin:0 0;">-</div>
<div style="left:1981.35px;top:1135.70px;font-family:'Liberation Sans', sans-serif;font-size:14.00px;font-weight:400;color:#1c1c1c;line-height:1;white-space:pre;transform:scaleX(1.0600);transform-origin:0 0;">-</div>
<div style="left:2100.35px;top:1135.70px;font-family:'Liberation Sans', sans-serif;font-size:14.00px;font-weight:400;color:#1c1c1c;line-height:1;white-space:pre;transform:scaleX(1.0600);transform-origin:0 0;">-</div>
<div style="left:2219.35px;top:1135.70px;font-family:'Liberation Sans', sans-serif;font-size:14.00px;font-weight:400;color:#1c1c1c;line-height:1;white-space:pre;transform:scaleX(1.0600);transform-origin:0 0;">-</div>
<div style="left:2338.35px;top:1135.70px;font-family:'Liberation Sans', sans-serif;font-size:14.00px;font-weight:400;color:#1c1c1c;line-height:1;white-space:pre;transform:scaleX(1.0600);transform-origin:0 0;">-</div>
<div style="left:2457.35px;top:1135.70px;font-family:'Liberation Sans', sans-serif;font-size:14.00px;font-weight:400;color:#1c1c1c;line-height:1;white-space:pre;transform:scaleX(1.0600);transform-origin:0 0;">-</div>
<div style="left:2576.35px;top:1135.70px;font-family:'Liberation Sans', sans-serif;font-size:14.00px;font-weight:400;color:#1c1c1c;line-height:1;white-space:pre;transform:scaleX(1.0600);transform-origin:0 0;">-</div>
<div style="left:2695.35px;top:1135.70px;font-family:'Liberation Sans', sans-serif;font-size:14.00px;font-weight:400;color:#1c1c1c;line-height:1;white-space:pre;transform:scaleX(1.0600);transform-origin:0 0;">-</div>
<div style="left:2814.35px;top:1135.70px;font-family:'Liberation Sans', sans-serif;font-size:14.00px;font-weight:400;color:#1c1c1c;line-height:1;white-space:pre;transform:scaleX(1.0600);transform-origin:0 0;">-</div>
<div style="left:860.11px;top:1153.07px;font-family:'Liberation Serif', serif;font-size:17.50px;font-weight:700;color:#ffffff;line-height:1;white-space:pre;transform:scaleX(1.1500);transform-origin:0 0;">(8,000)</div>
<div style="left:979.11px;top:1153.07px;font-family:'Liberation Serif', serif;font-size:17.50px;font-weight:700;color:#ffffff;line-height:1;white-space:pre;transform:scaleX(1.1500);transform-origin:0 0;">(7,500)</div>
<div style="left:1088.05px;top:1153.07px;font-family:'Liberation Serif', serif;font-size:17.50px;font-weight:700;color:#ffffff;line-height:1;white-space:pre;transform:scaleX(1.1500);transform-origin:0 0;">(10,000)</div>
<div style="left:1217.11px;top:1153.07px;font-family:'Liberation Serif', serif;font-size:17.50px;font-weight:700;color:#ffffff;line-height:1;white-space:pre;transform:scaleX(1.1500);transform-origin:0 0;">(1,500)</div>
<div style="left:1381.17px;top:1151.92px;font-family:'Liberation Sans', sans-serif;font-size:17.50px;font-weight:400;color:#ffffff;line-height:1;white-space:pre;">-</div>
<div style="left:1455.11px;top:1153.07px;font-family:'Liberation Serif', serif;font-size:17.50px;font-weight:700;color:#ffffff;line-height:1;white-space:pre;transform:scaleX(1.1500);transform-origin:0 0;">(2,000)</div>
<div style="left:1574.11px;top:1153.07px;font-family:'Liberation Serif', serif;font-size:17.50px;font-weight:700;color:#ffffff;line-height:1;white-space:pre;transform:scaleX(1.1500);transform-origin:0 0;">(2,000)</div>
<div style="left:1693.11px;top:1153.07px;font-family:'Liberation Serif', serif;font-size:17.50px;font-weight:700;color:#ffffff;line-height:1;white-space:pre;transform:scaleX(1.1500);transform-origin:0 0;">(1,000)</div>
<div style="left:1857.17px;top:1151.92px;font-family:'Liberation Sans', sans-serif;font-size:17.50px;font-weight:400;color:#ffffff;line-height:1;white-space:pre;">-</div>
<div style="left:1976.17px;top:1151.92px;font-family:'Liberation Sans', sans-serif;font-size:17.50px;font-weight:400;color:#ffffff;line-height:1;white-space:pre;">-</div>
<div style="left:2095.17px;top:1151.92px;font-family:'Liberation Sans', sans-serif;font-size:17.50px;font-weight:400;color:#ffffff;line-height:1;white-space:pre;">-</div>
<div style="left:2214.17px;top:1151.92px;font-family:'Liberation Sans', sans-serif;font-size:17.50px;font-weight:400;color:#ffffff;line-height:1;white-space:pre;">-</div>
<div style="left:2333.17px;top:1151.92px;font-family:'Liberation Sans', sans-serif;font-size:17.50px;font-weight:400;color:#ffffff;line-height:1;white-space:pre;">-</div>
<div style="left:2452.17px;top:1151.92px;font-family:'Liberation Sans', sans-serif;font-size:17.50px;font-weight:400;color:#ffffff;line-height:1;white-space:pre;">-</div>
<div style="left:2571.17px;top:1151.92px;font-family:'Liberation Sans', sans-serif;font-size:17.50px;font-weight:400;color:#ffffff;line-height:1;white-space:pre;">-</div>
<div style="left:2690.17px;top:1151.92px;font-family:'Liberation Sans', sans-serif;font-size:17.50px;font-weight:400;color:#ffffff;line-height:1;white-space:pre;">-</div>
<div style="left:2809.17px;top:1151.92px;font-family:'Liberation Sans', sans-serif;font-size:17.50px;font-weight:400;color:#ffffff;line-height:1;white-space:pre;">-</div>
<div style="left:861.65px;top:1219.40px;font-family:'Liberation Sans', sans-serif;font-size:14.00px;font-weight:400;color:#1c1c1c;line-height:1;white-space:pre;transform:scaleX(1.0600);transform-origin:0 0;">700,000</div>
<div style="left:1029.35px;top:1219.40px;font-family:'Liberation Sans', sans-serif;font-size:14.00px;font-weight:400;color:#1c1c1c;line-height:1;white-space:pre;transform:scaleX(1.0600);transform-origin:0 0;">-</div>
<div style="left:1148.35px;top:1219.40px;font-family:'Liberation Sans', sans-serif;font-size:14.00px;font-weight:400;color:#1c1c1c;line-height:1;white-space:pre;transform:scaleX(1.0600);transform-origin:0 0;">-</div>
<div style="left:1267.35px;top:1219.40px;font-family:'Liberation Sans', sans-serif;font-size:14.00px;font-weight:400;color:#1c1c1c;line-height:1;white-space:pre;transform:scaleX(1.0600);transform-origin:0 0;">-</div>
<div style="left:1386.35px;top:1219.40px;font-family:'Liberation Sans', sans-serif;font-size:14.00px;font-weight:400;color:#1c1c1c;line-height:1;white-space:pre;transform:scaleX(1.0600);transform-origin:0 0;">-</div>
<div style="left:1505.35px;top:1219.40px;font-family:'Liberation Sans', sans-serif;font-size:14.00px;font-weight:400;color:#1c1c1c;line-height:1;white-space:pre;transform:scaleX(1.0600);transform-origin:0 0;">-</div>
<div style="left:1624.35px;top:1219.40px;font-family:'Liberation Sans', sans-serif;font-size:14.00px;font-weight:400;color:#1c1c1c;line-height:1;white-space:pre;transform:scaleX(1.0600);transform-origin:0 0;">-</div>
<div style="left:1743.35px;top:1219.40px;font-family:'Liberation Sans', sans-serif;font-size:14.00px;font-weight:400;color:#1c1c1c;line-height:1;white-space:pre;transform:scaleX(1.0600);transform-origin:0 0;">-</div>
<div style="left:1862.35px;top:1219.40px;font-family:'Liberation Sans', sans-serif;font-size:14.00px;font-weight:400;color:#1c1c1c;line-height:1;white-space:pre;transform:scaleX(1.0600);transform-origin:0 0;">-</div>
<div style="left:1981.35px;top:1219.40px;font-family:'Liberation Sans', sans-serif;font-size:14.00px;font-weight:400;color:#1c1c1c;line-height:1;white-space:pre;transform:scaleX(1.0600);transform-origin:0 0;">-</div>
<div style="left:2100.35px;top:1219.40px;font-family:'Liberation Sans', sans-serif;font-size:14.00px;font-weight:400;color:#1c1c1c;line-height:1;white-space:pre;transform:scaleX(1.0600);transform-origin:0 0;">-</div>
<div style="left:2219.35px;top:1219.40px;font-family:'Liberation Sans', sans-serif;font-size:14.00px;font-weight:400;color:#1c1c1c;line-height:1;white-space:pre;transform:scaleX(1.0600);transform-origin:0 0;">-</div>
<div style="left:2338.35px;top:1219.40px;font-family:'Liberation Sans', sans-serif;font-size:14.00px;font-weight:400;color:#1c1c1c;line-height:1;white-space:pre;transform:scaleX(1.0600);transform-origin:0 0;">-</div>
<div style="left:2457.35px;top:1219.40px;font-family:'Liberation Sans', sans-serif;font-size:14.00px;font-weight:400;color:#1c1c1c;line-height:1;white-space:pre;transform:scaleX(1.0600);transform-origin:0 0;">-</div>
<div style="left:2576.35px;top:1219.40px;font-family:'Liberation Sans', sans-serif;font-size:14.00px;font-weight:400;color:#1c1c1c;line-height:1;white-space:pre;transform:scaleX(1.0600);transform-origin:0 0;">-</div>
<div style="left:2695.35px;top:1219.40px;font-family:'Liberation Sans', sans-serif;font-size:14.00px;font-weight:400;color:#1c1c1c;line-height:1;white-space:pre;transform:scaleX(1.0600);transform-origin:0 0;">-</div>
<div style="left:2814.35px;top:1219.40px;font-family:'Liberation Sans', sans-serif;font-size:14.00px;font-weight:400;color:#1c1c1c;line-height:1;white-space:pre;transform:scaleX(1.0600);transform-origin:0 0;">-</div>
<div style="left:861.65px;top:1237.60px;font-family:'Liberation Sans', sans-serif;font-size:14.00px;font-weight:400;color:#1c1c1c;line-height:1;white-space:pre;transform:scaleX(1.0600);transform-origin:0 0;">200,000</div>
<div style="left:1029.35px;top:1237.60px;font-family:'Liberation Sans', sans-serif;font-size:14.00px;font-weight:400;color:#1c1c1c;line-height:1;white-space:pre;transform:scaleX(1.0600);transform-origin:0 0;">-</div>
<div style="left:1107.90px;top:1237.60px;font-family:'Liberation Sans', sans-serif;font-size:14.00px;font-weight:400;color:#1c1c1c;line-height:1;white-space:pre;transform:scaleX(1.0600);transform-origin:0 0;">98,333</div>
<div style="left:1230.28px;top:1237.60px;font-family:'Liberation Sans', sans-serif;font-size:14.00px;font-weight:400;color:#1c1c1c;line-height:1;white-space:pre;transform:scaleX(1.0600);transform-origin:0 0;">(1,667)</div>
<div style="left:1349.28px;top:1237.60px;font-family:'Liberation Sans', sans-serif;font-size:14.00px;font-weight:400;color:#1c1c1c;line-height:1;white-space:pre;transform:scaleX(1.0600);transform-origin:0 0;">(1,667)</div>
<div style="left:1468.28px;top:1237.60px;font-family:'Liberation Sans', sans-serif;font-size:14.00px;font-weight:400;color:#1c1c1c;line-height:1;white-space:pre;transform:scaleX(1.0600);transform-origin:0 0;">(1,667)</div>
<div style="left:1587.28px;top:1237.60px;font-family:'Liberation Sans', sans-serif;font-size:14.00px;font-weight:400;color:#1c1c1c;line-height:1;white-space:pre;transform:scaleX(1.0600);transform-origin:0 0;">(1,667)</div>
<div style="left:1706.28px;top:1237.60px;font-family:'Liberation Sans', sans-serif;font-size:14.00px;font-weight:400;color:#1c1c1c;line-height:1;white-space:pre;transform:scaleX(1.0600);transform-origin:0 0;">(1,667)</div>
<div style="left:1825.28px;top:1237.60px;font-family:'Liberation Sans', sans-serif;font-size:14.00px;font-weight:400;color:#1c1c1c;line-height:1;white-space:pre;transform:scaleX(1.0600);transform-origin:0 0;">(1,667)</div>
<div style="left:1944.28px;top:1237.60px;font-family:'Liberation Sans', sans-serif;font-size:14.00px;font-weight:400;color:#1c1c1c;line-height:1;white-space:pre;transform:scaleX(1.0600);transform-origin:0 0;">(1,667)</div>
<div style="left:2063.28px;top:1237.60px;font-family:'Liberation Sans', sans-serif;font-size:14.00px;font-weight:400;color:#1c1c1c;line-height:1;white-space:pre;transform:scaleX(1.0600);transform-origin:0 0;">(1,667)</div>
<div style="left:2182.28px;top:1237.60px;font-family:'Liberation Sans', sans-serif;font-size:14.00px;font-weight:400;color:#1c1c1c;line-height:1;white-space:pre;transform:scaleX(1.0600);transform-origin:0 0;">(1,667)</div>
<div style="left:2301.28px;top:1237.60px;font-family:'Liberation Sans', sans-serif;font-size:14.00px;font-weight:400;color:#1c1c1c;line-height:1;white-space:pre;transform:scaleX(1.0600);transform-origin:0 0;">(3,770)</div>
<div style="left:2420.28px;top:1237.60px;font-family:'Liberation Sans', sans-serif;font-size:14.00px;font-weight:400;color:#1c1c1c;line-height:1;white-space:pre;transform:scaleX(1.0600);transform-origin:0 0;">(3,780)</div>
<div style="left:2539.28px;top:1237.60px;font-family:'Liberation Sans', sans-serif;font-size:14.00px;font-weight:400;color:#1c1c1c;line-height:1;white-space:pre;transform:scaleX(1.0600);transform-origin:0 0;">(3,791)</div>
<div style="left:2658.28px;top:1237.60px;font-family:'Liberation Sans', sans-serif;font-size:14.00px;font-weight:400;color:#1c1c1c;line-height:1;white-space:pre;transform:scaleX(1.0600);transform-origin:0 0;">(3,801)</div>
<div style="left:2777.28px;top:1237.60px;font-family:'Liberation Sans', sans-serif;font-size:14.00px;font-weight:400;color:#1c1c1c;line-height:1;white-space:pre;transform:scaleX(1.0600);transform-origin:0 0;">(3,812)</div>
<div style="left:910.35px;top:1255.70px;font-family:'Liberation Sans', sans-serif;font-size:14.00px;font-weight:400;color:#1c1c1c;line-height:1;white-space:pre;transform:scaleX(1.0600);transform-origin:0 0;">-</div>
<div style="left:1029.35px;top:1255.70px;font-family:'Liberation Sans', sans-serif;font-size:14.00px;font-weight:400;color:#1c1c1c;line-height:1;white-space:pre;transform:scaleX(1.0600);transform-origin:0 0;">-</div>
<div style="left:1148.35px;top:1255.70px;font-family:'Liberation Sans', sans-serif;font-size:14.00px;font-weight:400;color:#1c1c1c;line-height:1;white-space:pre;transform:scaleX(1.0600);transform-origin:0 0;">-</div>
<div style="left:1267.35px;top:1255.70px;font-family:'Liberation Sans', sans-serif;font-size:14.00px;font-weight:400;color:#1c1c1c;line-height:1;white-space:pre;transform:scaleX(1.0600);transform-origin:0 0;">-</div>
<div style="left:1386.35px;top:1255.70px;font-family:'Liberation Sans', sans-serif;font-size:14.00px;font-weight:400;color:#1c1c1c;line-height:1;white-space:pre;transform:scaleX(1.0600);transform-origin:0 0;">-</div>
<div style="left:1505.35px;top:1255.70px;font-family:'Liberation Sans', sans-serif;font-size:14.00px;font-weight:400;color:#1c1c1c;line-height:1;white-space:pre;transform:scaleX(1.0600);transform-origin:0 0;">-</div>
<div style="left:1624.35px;top:1255.70px;font-family:'Liberation Sans', sans-serif;font-size:14.00px;font-weight:400;color:#1c1c1c;line-height:1;white-space:pre;transform:scaleX(1.0600);transform-origin:0 0;">-</div>
<div style="left:1743.35px;top:1255.70px;font-family:'Liberation Sans', sans-serif;font-size:14.00px;font-weight:400;color:#1c1c1c;line-height:1;white-space:pre;transform:scaleX(1.0600);transform-origin:0 0;">-</div>
<div style="left:1862.35px;top:1255.70px;font-family:'Liberation Sans', sans-serif;font-size:14.00px;font-weight:400;color:#1c1c1c;line-height:1;white-space:pre;transform:scaleX(1.0600);transform-origin:0 0;">-</div>
<div style="left:1981.35px;top:1255.70px;font-family:'Liberation Sans', sans-serif;font-size:14.00px;font-weight:400;color:#1c1c1c;line-height:1;white-space:pre;transform:scaleX(1.0600);transform-origin:0 0;">-</div>
<div style="left:2100.35px;top:1255.70px;font-family:'Liberation Sans', sans-serif;font-size:14.00px;font-weight:400;color:#1c1c1c;line-height:1;white-space:pre;transform:scaleX(1.0600);transform-origin:0 0;">-</div>
<div style="left:2219.35px;top:1255.70px;font-family:'Liberation Sans', sans-serif;font-size:14.00px;font-weight:400;color:#1c1c1c;line-height:1;white-space:pre;transform:scaleX(1.0600);transform-origin:0 0;">-</div>
<div style="left:2338.35px;top:1255.70px;font-family:'Liberation Sans', sans-serif;font-size:14.00px;font-weight:400;color:#1c1c1c;line-height:1;white-space:pre;transform:scaleX(1.0600);transform-origin:0 0;">-</div>
<div style="left:2457.35px;top:1255.70px;font-family:'Liberation Sans', sans-serif;font-size:14.00px;font-weight:400;color:#1c1c1c;line-height:1;white-space:pre;transform:scaleX(1.0600);transform-origin:0 0;">-</div>
<div style="left:2576.35px;top:1255.70px;font-family:'Liberation Sans', sans-serif;font-size:14.00px;font-weight:400;color:#1c1c1c;line-height:1;white-space:pre;transform:scaleX(1.0600);transform-origin:0 0;">-</div>
<div style="left:2695.35px;top:1255.70px;font-family:'Liberation Sans', sans-serif;font-size:14.00px;font-weight:400;color:#1c1c1c;line-height:1;white-space:pre;transform:scaleX(1.0600);transform-origin:0 0;">-</div>
<div style="left:2814.35px;top:1255.70px;font-family:'Liberation Sans', sans-serif;font-size:14.00px;font-weight:400;color:#1c1c1c;line-height:1;white-space:pre;transform:scaleX(1.0600);transform-origin:0 0;">-</div>
<div style="left:845.99px;top:1273.07px;font-family:'Liberation Serif', serif;font-size:17.50px;font-weight:700;color:#ffffff;line-height:1;white-space:pre;transform:scaleX(1.1500);transform-origin:0 0;">900,000</div>
<div style="left:1024.17px;top:1271.92px;font-family:'Liberation Sans', sans-serif;font-size:17.50px;font-weight:400;color:#ffffff;line-height:1;white-space:pre;">-</div>
<div style="left:1094.06px;top:1273.07px;font-family:'Liberation Serif', serif;font-size:17.50px;font-weight:700;color:#ffffff;line-height:1;white-space:pre;transform:scaleX(1.1500);transform-origin:0 0;">98,333</div>
<div style="left:1217.11px;top:1273.07px;font-family:'Liberation Serif', serif;font-size:17.50px;font-weight:700;color:#ffffff;line-height:1;white-space:pre;transform:scaleX(1.1500);transform-origin:0 0;">(1,667)</div>
<div style="left:1336.11px;top:1273.07px;font-family:'Liberation Serif', serif;font-size:17.50px;font-weight:700;color:#ffffff;line-height:1;white-space:pre;transform:scaleX(1.1500);transform-origin:0 0;">(1,667)</div>
<div style="left:1455.11px;top:1273.07px;font-family:'Liberation Serif', serif;font-size:17.50px;font-weight:700;color:#ffffff;line-height:1;white-space:pre;transform:scaleX(1.1500);transform-origin:0 0;">(1,667)</div>
<div style="left:1574.11px;top:1273.07px;font-family:'Liberation Serif', serif;font-size:17.50px;font-weight:700;color:#ffffff;line-height:1;white-space:pre;transform:scaleX(1.1500);transform-origin:0 0;">(1,667)</div>
<div style="left:1693.11px;top:1273.07px;font-family:'Liberation Serif', serif;font-size:17.50px;font-weight:700;color:#ffffff;line-height:1;white-space:pre;transform:scaleX(1.1500);transform-origin:0 0;">(1,667)</div>
<div style="left:1812.11px;top:1273.07px;font-family:'Liberation Serif', serif;font-size:17.50px;font-weight:700;color:#ffffff;line-height:1;white-space:pre;transform:scaleX(1.1500);transform-origin:0 0;">(1,667)</div>
<div style="left:1931.11px;top:1273.07px;font-family:'Liberation Serif', serif;font-size:17.50px;font-weight:700;color:#ffffff;line-height:1;white-space:pre;transform:scaleX(1.1500);transform-origin:0 0;">(1,667)</div>
<div style="left:2050.11px;top:1273.07px;font-family:'Liberation Serif', serif;font-size:17.50px;font-weight:700;color:#ffffff;line-height:1;white-space:pre;transform:scaleX(1.1500);transform-origin:0 0;">(1,667)</div>
<div style="left:2169.11px;top:1273.07px;font-family:'Liberation Serif', serif;font-size:17.50px;font-weight:700;color:#ffffff;line-height:1;white-space:pre;transform:scaleX(1.1500);transform-origin:0 0;">(1,667)</div>
<div style="left:2288.11px;top:1273.07px;font-family:'Liberation Serif', serif;font-size:17.50px;font-weight:700;color:#ffffff;line-height:1;white-space:pre;transform:scaleX(1.1500);transform-origin:0 0;">(3,770)</div>
<div style="left:2407.11px;top:1273.07px;font-family:'Liberation Serif', serif;font-size:17.50px;font-weight:700;color:#ffffff;line-height:1;white-space:pre;transform:scaleX(1.1500);transform-origin:0 0;">(3,780)</div>
<div style="left:2526.11px;top:1273.07px;font-family:'Liberation Serif', serif;font-size:17.50px;font-weight:700;color:#ffffff;line-height:1;white-space:pre;transform:scaleX(1.1500);transform-origin:0 0;">(3,791)</div>
<div style="left:2645.11px;top:1273.07px;font-family:'Liberation Serif', serif;font-size:17.50px;font-weight:700;color:#ffffff;line-height:1;white-space:pre;transform:scaleX(1.1500);transform-origin:0 0;">(3,801)</div>
<div style="left:2764.11px;top:1273.07px;font-family:'Liberation Serif', serif;font-size:17.50px;font-weight:700;color:#ffffff;line-height:1;white-space:pre;transform:scaleX(1.1500);transform-origin:0 0;">(3,812)</div>
<div style="left:910.35px;top:1342.60px;font-family:'Liberation Sans', sans-serif;font-size:14.00px;font-weight:400;color:#1c1c1c;line-height:1;white-space:pre;transform:scaleX(1.0600);transform-origin:0 0;">-</div>
<div style="left:980.65px;top:1342.60px;font-family:'Liberation Sans', sans-serif;font-size:14.00px;font-weight:400;color:#1c1c1c;line-height:1;white-space:pre;transform:scaleX(1.0600);transform-origin:0 0;">885,250</div>
<div style="left:1099.65px;top:1342.60px;font-family:'Liberation Sans', sans-serif;font-size:14.00px;font-weight:400;color:#1c1c1c;line-height:1;white-space:pre;transform:scaleX(1.0600);transform-origin:0 0;">867,621</div>
<div style="left:1218.65px;top:1342.60px;font-family:'Liberation Sans', sans-serif;font-size:14.00px;font-weight:400;color:#1c1c1c;line-height:1;white-space:pre;transform:scaleX(1.0600);transform-origin:0 0;">944,985</div>
<div style="left:1337.65px;top:1342.60px;font-family:'Liberation Sans', sans-serif;font-size:14.00px;font-weight:400;color:#1c1c1c;line-height:1;white-space:pre;transform:scaleX(1.0600);transform-origin:0 0;">931,977</div>
<div style="left:1456.65px;top:1342.60px;font-family:'Liberation Sans', sans-serif;font-size:14.00px;font-weight:400;color:#1c1c1c;line-height:1;white-space:pre;transform:scaleX(1.0600);transform-origin:0 0;">920,899</div>
<div style="left:1575.65px;top:1342.60px;font-family:'Liberation Sans', sans-serif;font-size:14.00px;font-weight:400;color:#1c1c1c;line-height:1;white-space:pre;transform:scaleX(1.0600);transform-origin:0 0;">908,628</div>
<div style="left:1694.65px;top:1342.60px;font-family:'Liberation Sans', sans-serif;font-size:14.00px;font-weight:400;color:#1c1c1c;line-height:1;white-space:pre;transform:scaleX(1.0600);transform-origin:0 0;">895,343</div>
<div style="left:1813.65px;top:1342.60px;font-family:'Liberation Sans', sans-serif;font-size:14.00px;font-weight:400;color:#1c1c1c;line-height:1;white-space:pre;transform:scaleX(1.0600);transform-origin:0 0;">882,369</div>
<div style="left:1933.75px;top:1342.60px;font-family:'Liberation Sans', sans-serif;font-size:14.00px;font-weight:400;color:#1c1c1c;line-height:1;white-space:pre;transform:scaleX(1.0600);transform-origin:0 0;">871,114</div>
<div style="left:2051.65px;top:1342.60px;font-family:'Liberation Sans', sans-serif;font-size:14.00px;font-weight:400;color:#1c1c1c;line-height:1;white-space:pre;transform:scaleX(1.0600);transform-origin:0 0;">860,312</div>
<div style="left:2170.65px;top:1342.60px;font-family:'Liberation Sans', sans-serif;font-size:14.00px;font-weight:400;color:#1c1c1c;line-height:1;white-space:pre;transform:scaleX(1.0600);transform-origin:0 0;">850,295</div>
<div style="left:2289.65px;top:1342.60px;font-family:'Liberation Sans', sans-serif;font-size:14.00px;font-weight:400;color:#1c1c1c;line-height:1;white-space:pre;transform:scaleX(1.0600);transform-origin:0 0;">840,777</div>
<div style="left:2408.65px;top:1342.60px;font-family:'Liberation Sans', sans-serif;font-size:14.00px;font-weight:400;color:#1c1c1c;line-height:1;white-space:pre;transform:scaleX(1.0600);transform-origin:0 0;">828,395</div>
<div style="left:2527.65px;top:1342.60px;font-family:'Liberation Sans', sans-serif;font-size:14.00px;font-weight:400;color:#1c1c1c;line-height:1;white-space:pre;transform:scaleX(1.0600);transform-origin:0 0;">818,566</div>
<div style="left:2647.75px;top:1342.60px;font-family:'Liberation Sans', sans-serif;font-size:14.00px;font-weight:400;color:#1c1c1c;line-height:1;white-space:pre;transform:scaleX(1.0600);transform-origin:0 0;">811,917</div>
<div style="left:2765.65px;top:1342.60px;font-family:'Liberation Sans', sans-serif;font-size:14.00px;font-weight:400;color:#1c1c1c;line-height:1;white-space:pre;transform:scaleX(1.0600);transform-origin:0 0;">807,579</div>
<div style="left:861.65px;top:1364.80px;font-family:'Liberation Sans', sans-serif;font-size:14.00px;font-weight:400;color:#1c1c1c;line-height:1;white-space:pre;transform:scaleX(1.0600);transform-origin:0 0;">885,250</div>
<div style="left:984.01px;top:1364.80px;font-family:'Liberation Sans', sans-serif;font-size:14.00px;font-weight:400;color:#1c1c1c;line-height:1;white-space:pre;transform:scaleX(1.0600);transform-origin:0 0;">(17,629)</div>
<div style="left:1107.90px;top:1364.80px;font-family:'Liberation Sans', sans-serif;font-size:14.00px;font-weight:400;color:#1c1c1c;line-height:1;white-space:pre;transform:scaleX(1.0600);transform-origin:0 0;">77,365</div>
<div style="left:1222.01px;top:1364.80px;font-family:'Liberation Sans', sans-serif;font-size:14.00px;font-weight:400;color:#1c1c1c;line-height:1;white-space:pre;transform:scaleX(1.0600);transform-origin:0 0;">(13,009)</div>
<div style="left:1342.12px;top:1364.80px;font-family:'Liberation Sans', sans-serif;font-size:14.00px;font-weight:400;color:#1c1c1c;line-height:1;white-space:pre;transform:scaleX(1.0600);transform-origin:0 0;">(11,078)</div>
<div style="left:1460.01px;top:1364.80px;font-family:'Liberation Sans', sans-serif;font-size:14.00px;font-weight:400;color:#1c1c1c;line-height:1;white-space:pre;transform:scaleX(1.0600);transform-origin:0 0;">(12,271)</div>
<div style="left:1579.01px;top:1364.80px;font-family:'Liberation Sans', sans-serif;font-size:14.00px;font-weight:400;color:#1c1c1c;line-height:1;white-space:pre;transform:scaleX(1.0600);transform-origin:0 0;">(13,284)</div>
<div style="left:1698.01px;top:1364.80px;font-family:'Liberation Sans', sans-serif;font-size:14.00px;font-weight:400;color:#1c1c1c;line-height:1;white-space:pre;transform:scaleX(1.0600);transform-origin:0 0;">(12,974)</div>
<div style="left:1818.12px;top:1364.80px;font-family:'Liberation Sans', sans-serif;font-size:14.00px;font-weight:400;color:#1c1c1c;line-height:1;white-space:pre;transform:scaleX(1.0600);transform-origin:0 0;">(11,255)</div>
<div style="left:1936.01px;top:1364.80px;font-family:'Liberation Sans', sans-serif;font-size:14.00px;font-weight:400;color:#1c1c1c;line-height:1;white-space:pre;transform:scaleX(1.0600);transform-origin:0 0;">(10,802)</div>
<div style="left:2055.01px;top:1364.80px;font-family:'Liberation Sans', sans-serif;font-size:14.00px;font-weight:400;color:#1c1c1c;line-height:1;white-space:pre;transform:scaleX(1.0600);transform-origin:0 0;">(10,017)</div>
<div style="left:2182.28px;top:1364.80px;font-family:'Liberation Sans', sans-serif;font-size:14.00px;font-weight:400;color:#1c1c1c;line-height:1;white-space:pre;transform:scaleX(1.0600);transform-origin:0 0;">(9,518)</div>
<div style="left:2293.01px;top:1364.80px;font-family:'Liberation Sans', sans-serif;font-size:14.00px;font-weight:400;color:#1c1c1c;line-height:1;white-space:pre;transform:scaleX(1.0600);transform-origin:0 0;">(12,382)</div>
<div style="left:2420.28px;top:1364.80px;font-family:'Liberation Sans', sans-serif;font-size:14.00px;font-weight:400;color:#1c1c1c;line-height:1;white-space:pre;transform:scaleX(1.0600);transform-origin:0 0;">(9,828)</div>
<div style="left:2539.28px;top:1364.80px;font-family:'Liberation Sans', sans-serif;font-size:14.00px;font-weight:400;color:#1c1c1c;line-height:1;white-space:pre;transform:scaleX(1.0600);transform-origin:0 0;">(6,649)</div>
<div style="left:2658.28px;top:1364.80px;font-family:'Liberation Sans', sans-serif;font-size:14.00px;font-weight:400;color:#1c1c1c;line-height:1;white-space:pre;transform:scaleX(1.0600);transform-origin:0 0;">(4,338)</div>
<div style="left:2777.28px;top:1364.80px;font-family:'Liberation Sans', sans-serif;font-size:14.00px;font-weight:400;color:#1c1c1c;line-height:1;white-space:pre;transform:scaleX(1.0600);transform-origin:0 0;">(1,773)</div>
<div style="left:845.99px;top:1385.57px;font-family:'Liberation Serif', serif;font-size:17.50px;font-weight:700;color:#ffffff;line-height:1;white-space:pre;transform:scaleX(1.1500);transform-origin:0 0;">885,250</div>
<div style="left:964.99px;top:1385.57px;font-family:'Liberation Serif', serif;font-size:17.50px;font-weight:700;color:#ffffff;line-height:1;white-space:pre;transform:scaleX(1.1500);transform-origin:0 0;">867,621</div>
<div style="left:1083.99px;top:1385.57px;font-family:'Liberation Serif', serif;font-size:17.50px;font-weight:700;color:#ffffff;line-height:1;white-space:pre;transform:scaleX(1.1500);transform-origin:0 0;">944,985</div>
<div style="left:1202.99px;top:1385.57px;font-family:'Liberation Serif', serif;font-size:17.50px;font-weight:700;color:#ffffff;line-height:1;white-space:pre;transform:scaleX(1.1500);transform-origin:0 0;">931,977</div>
<div style="left:1321.99px;top:1385.57px;font-family:'Liberation Serif', serif;font-size:17.50px;font-weight:700;color:#ffffff;line-height:1;white-space:pre;transform:scaleX(1.1500);transform-origin:0 0;">920,899</div>
<div style="left:1440.99px;top:1385.57px;font-family:'Liberation Serif', serif;font-size:17.50px;font-weight:700;color:#ffffff;line-height:1;white-space:pre;transform:scaleX(1.1500);transform-origin:0 0;">908,628</div>
<div style="left:1559.99px;top:1385.57px;font-family:'Liberation Serif', serif;font-size:17.50px;font-weight:700;color:#ffffff;line-height:1;white-space:pre;transform:scaleX(1.1500);transform-origin:0 0;">895,343</div>
<div style="left:1678.99px;top:1385.57px;font-family:'Liberation Serif', serif;font-size:17.50px;font-weight:700;color:#ffffff;line-height:1;white-space:pre;transform:scaleX(1.1500);transform-origin:0 0;">882,369</div>
<div style="left:1799.09px;top:1385.57px;font-family:'Liberation Serif', serif;font-size:17.50px;font-weight:700;color:#ffffff;line-height:1;white-space:pre;transform:scaleX(1.1500);transform-origin:0 0;">871,114</div>
<div style="left:1916.99px;top:1385.57px;font-family:'Liberation Serif', serif;font-size:17.50px;font-weight:700;color:#ffffff;line-height:1;white-space:pre;transform:scaleX(1.1500);transform-origin:0 0;">860,312</div>
<div style="left:2035.99px;top:1385.57px;font-family:'Liberation Serif', serif;font-size:17.50px;font-weight:700;color:#ffffff;line-height:1;white-space:pre;transform:scaleX(1.1500);transform-origin:0 0;">850,295</div>
<div style="left:2154.99px;top:1385.57px;font-family:'Liberation Serif', serif;font-size:17.50px;font-weight:700;color:#ffffff;line-height:1;white-space:pre;transform:scaleX(1.1500);transform-origin:0 0;">840,777</div>
<div style="left:2273.99px;top:1385.57px;font-family:'Liberation Serif', serif;font-size:17.50px;font-weight:700;color:#ffffff;line-height:1;white-space:pre;transform:scaleX(1.1500);transform-origin:0 0;">828,395</div>
<div style="left:2392.99px;top:1385.57px;font-family:'Liberation Serif', serif;font-size:17.50px;font-weight:700;color:#ffffff;line-height:1;white-space:pre;transform:scaleX(1.1500);transform-origin:0 0;">818,566</div>
<div style="left:2513.09px;top:1385.57px;font-family:'Liberation Serif', serif;font-size:17.50px;font-weight:700;color:#ffffff;line-height:1;white-space:pre;transform:scaleX(1.1500);transform-origin:0 0;">811,917</div>
<div style="left:2630.99px;top:1385.57px;font-family:'Liberation Serif', serif;font-size:17.50px;font-weight:700;color:#ffffff;line-height:1;white-space:pre;transform:scaleX(1.1500);transform-origin:0 0;">807,579</div>
<div style="left:2749.99px;top:1385.57px;font-family:'Liberation Serif', serif;font-size:17.50px;font-weight:700;color:#ffffff;line-height:1;white-space:pre;transform:scaleX(1.1500);transform-origin:0 0;">805,806</div>
<div style="left:873.28px;top:1482.90px;font-family:'Liberation Sans', sans-serif;font-size:14.00px;font-weight:400;color:#1c1c1c;line-height:1;white-space:pre;transform:scaleX(1.0600);transform-origin:0 0;">(8,000)</div>
<div style="left:992.28px;top:1482.90px;font-family:'Liberation Sans', sans-serif;font-size:14.00px;font-weight:400;color:#1c1c1c;line-height:1;white-space:pre;transform:scaleX(1.0600);transform-origin:0 0;">(7,500)</div>
<div style="left:1103.01px;top:1482.90px;font-family:'Liberation Sans', sans-serif;font-size:14.00px;font-weight:400;color:#1c1c1c;line-height:1;white-space:pre;transform:scaleX(1.0600);transform-origin:0 0;">(10,000)</div>
<div style="left:1230.28px;top:1482.90px;font-family:'Liberation Sans', sans-serif;font-size:14.00px;font-weight:400;color:#1c1c1c;line-height:1;white-space:pre;transform:scaleX(1.0600);transform-origin:0 0;">(1,500)</div>
<div style="left:1386.35px;top:1482.90px;font-family:'Liberation Sans', sans-serif;font-size:14.00px;font-weight:400;color:#1c1c1c;line-height:1;white-space:pre;transform:scaleX(1.0600);transform-origin:0 0;">-</div>
<div style="left:1468.28px;top:1482.90px;font-family:'Liberation Sans', sans-serif;font-size:14.00px;font-weight:400;color:#1c1c1c;line-height:1;white-space:pre;transform:scaleX(1.0600);transform-origin:0 0;">(2,000)</div>
<div style="left:1587.28px;top:1482.90px;font-family:'Liberation Sans', sans-serif;font-size:14.00px;font-weight:400;color:#1c1c1c;line-height:1;white-space:pre;transform:scaleX(1.0600);transform-origin:0 0;">(2,000)</div>
<div style="left:1706.28px;top:1482.90px;font-family:'Liberation Sans', sans-serif;font-size:14.00px;font-weight:400;color:#1c1c1c;line-height:1;white-space:pre;transform:scaleX(1.0600);transform-origin:0 0;">(1,000)</div>
<div style="left:1862.35px;top:1482.90px;font-family:'Liberation Sans', sans-serif;font-size:14.00px;font-weight:400;color:#1c1c1c;line-height:1;white-space:pre;transform:scaleX(1.0600);transform-origin:0 0;">-</div>
<div style="left:1981.35px;top:1482.90px;font-family:'Liberation Sans', sans-serif;font-size:14.00px;font-weight:400;color:#1c1c1c;line-height:1;white-space:pre;transform:scaleX(1.0600);transform-origin:0 0;">-</div>
<div style="left:2100.35px;top:1482.90px;font-family:'Liberation Sans', sans-serif;font-size:14.00px;font-weight:400;color:#1c1c1c;line-height:1;white-space:pre;transform:scaleX(1.0600);transform-origin:0 0;">-</div>
<div style="left:2219.35px;top:1482.90px;font-family:'Liberation Sans', sans-serif;font-size:14.00px;font-weight:400;color:#1c1c1c;line-height:1;white-space:pre;transform:scaleX(1.0600);transform-origin:0 0;">-</div>
<div style="left:2338.35px;top:1482.90px;font-family:'Liberation Sans', sans-serif;font-size:14.00px;font-weight:400;color:#1c1c1c;line-height:1;white-space:pre;transform:scaleX(1.0600);transform-origin:0 0;">-</div>
<div style="left:2457.35px;top:1482.90px;font-family:'Liberation Sans', sans-serif;font-size:14.00px;font-weight:400;color:#1c1c1c;line-height:1;white-space:pre;transform:scaleX(1.0600);transform-origin:0 0;">-</div>
<div style="left:2576.35px;top:1482.90px;font-family:'Liberation Sans', sans-serif;font-size:14.00px;font-weight:400;color:#1c1c1c;line-height:1;white-space:pre;transform:scaleX(1.0600);transform-origin:0 0;">-</div>
<div style="left:2695.35px;top:1482.90px;font-family:'Liberation Sans', sans-serif;font-size:14.00px;font-weight:400;color:#1c1c1c;line-height:1;white-space:pre;transform:scaleX(1.0600);transform-origin:0 0;">-</div>
<div style="left:2814.35px;top:1482.90px;font-family:'Liberation Sans', sans-serif;font-size:14.00px;font-weight:400;color:#1c1c1c;line-height:1;white-space:pre;transform:scaleX(1.0600);transform-origin:0 0;">-</div>
<div style="left:861.65px;top:1502.70px;font-family:'Liberation Sans', sans-serif;font-size:14.00px;font-weight:400;color:#1c1c1c;line-height:1;white-space:pre;transform:scaleX(1.0600);transform-origin:0 0;">900,000</div>
<div style="left:1029.35px;top:1502.70px;font-family:'Liberation Sans', sans-serif;font-size:14.00px;font-weight:400;color:#1c1c1c;line-height:1;white-space:pre;transform:scaleX(1.0600);transform-origin:0 0;">-</div>
<div style="left:1107.90px;top:1502.70px;font-family:'Liberation Sans', sans-serif;font-size:14.00px;font-weight:400;color:#1c1c1c;line-height:1;white-space:pre;transform:scaleX(1.0600);transform-origin:0 0;">98,333</div>
<div style="left:1230.28px;top:1502.70px;font-family:'Liberation Sans', sans-serif;font-size:14.00px;font-weight:400;color:#1c1c1c;line-height:1;white-space:pre;transform:scaleX(1.0600);transform-origin:0 0;">(1,667)</div>
<div style="left:1349.28px;top:1502.70px;font-family:'Liberation Sans', sans-serif;font-size:14.00px;font-weight:400;color:#1c1c1c;line-height:1;white-space:pre;transform:scaleX(1.0600);transform-origin:0 0;">(1,667)</div>
<div style="left:1468.28px;top:1502.70px;font-family:'Liberation Sans', sans-serif;font-size:14.00px;font-weight:400;color:#1c1c1c;line-height:1;white-space:pre;transform:scaleX(1.0600);transform-origin:0 0;">(1,667)</div>
<div style="left:1587.28px;top:1502.70px;font-family:'Liberation Sans', sans-serif;font-size:14.00px;font-weight:400;color:#1c1c1c;line-height:1;white-space:pre;transform:scaleX(1.0600);transform-origin:0 0;">(1,667)</div>
<div style="left:1706.28px;top:1502.70px;font-family:'Liberation Sans', sans-serif;font-size:14.00px;font-weight:400;color:#1c1c1c;line-height:1;white-space:pre;transform:scaleX(1.0600);transform-origin:0 0;">(1,667)</div>
<div style="left:1825.28px;top:1502.70px;font-family:'Liberation Sans', sans-serif;font-size:14.00px;font-weight:400;color:#1c1c1c;line-height:1;white-space:pre;transform:scaleX(1.0600);transform-origin:0 0;">(1,667)</div>
<div style="left:1944.28px;top:1502.70px;font-family:'Liberation Sans', sans-serif;font-size:14.00px;font-weight:400;color:#1c1c1c;line-height:1;white-space:pre;transform:scaleX(1.0600);transform-origin:0 0;">(1,667)</div>
<div style="left:2063.28px;top:1502.70px;font-family:'Liberation Sans', sans-serif;font-size:14.00px;font-weight:400;color:#1c1c1c;line-height:1;white-space:pre;transform:scaleX(1.0600);transform-origin:0 0;">(1,667)</div>
<div style="left:2182.28px;top:1502.70px;font-family:'Liberation Sans', sans-serif;font-size:14.00px;font-weight:400;color:#1c1c1c;line-height:1;white-space:pre;transform:scaleX(1.0600);transform-origin:0 0;">(1,667)</div>
<div style="left:2301.28px;top:1502.70px;font-family:'Liberation Sans', sans-serif;font-size:14.00px;font-weight:400;color:#1c1c1c;line-height:1;white-space:pre;transform:scaleX(1.0600);transform-origin:0 0;">(3,770)</div>
<div style="left:2420.28px;top:1502.70px;font-family:'Liberation Sans', sans-serif;font-size:14.00px;font-weight:400;color:#1c1c1c;line-height:1;white-space:pre;transform:scaleX(1.0600);transform-origin:0 0;">(3,780)</div>
<div style="left:2539.28px;top:1502.70px;font-family:'Liberation Sans', sans-serif;font-size:14.00px;font-weight:400;color:#1c1c1c;line-height:1;white-space:pre;transform:scaleX(1.0600);transform-origin:0 0;">(3,791)</div>
<div style="left:2658.28px;top:1502.70px;font-family:'Liberation Sans', sans-serif;font-size:14.00px;font-weight:400;color:#1c1c1c;line-height:1;white-space:pre;transform:scaleX(1.0600);transform-origin:0 0;">(3,801)</div>
<div style="left:2777.28px;top:1502.70px;font-family:'Liberation Sans', sans-serif;font-size:14.00px;font-weight:400;color:#1c1c1c;line-height:1;white-space:pre;transform:scaleX(1.0600);transform-origin:0 0;">(3,812)</div>
<div style="left:878.15px;top:1523.10px;font-family:'Liberation Sans', sans-serif;font-size:14.00px;font-weight:400;color:#1c1c1c;line-height:1;white-space:pre;transform:scaleX(1.0600);transform-origin:0 0;">5,554</div>
<div style="left:988.90px;top:1523.10px;font-family:'Liberation Sans', sans-serif;font-size:14.00px;font-weight:400;color:#1c1c1c;line-height:1;white-space:pre;transform:scaleX(1.0600);transform-origin:0 0;">10,551</div>
<div style="left:1107.90px;top:1523.10px;font-family:'Liberation Sans', sans-serif;font-size:14.00px;font-weight:400;color:#1c1c1c;line-height:1;white-space:pre;transform:scaleX(1.0600);transform-origin:0 0;">12,496</div>
<div style="left:1226.90px;top:1523.10px;font-family:'Liberation Sans', sans-serif;font-size:14.00px;font-weight:400;color:#1c1c1c;line-height:1;white-space:pre;transform:scaleX(1.0600);transform-origin:0 0;">12,440</div>
<div style="left:1345.90px;top:1523.10px;font-family:'Liberation Sans', sans-serif;font-size:14.00px;font-weight:400;color:#1c1c1c;line-height:1;white-space:pre;transform:scaleX(1.0600);transform-origin:0 0;">13,610</div>
<div style="left:1464.90px;top:1523.10px;font-family:'Liberation Sans', sans-serif;font-size:14.00px;font-weight:400;color:#1c1c1c;line-height:1;white-space:pre;transform:scaleX(1.0600);transform-origin:0 0;">13,917</div>
<div style="left:1583.90px;top:1523.10px;font-family:'Liberation Sans', sans-serif;font-size:14.00px;font-weight:400;color:#1c1c1c;line-height:1;white-space:pre;transform:scaleX(1.0600);transform-origin:0 0;">15,136</div>
<div style="left:1702.90px;top:1523.10px;font-family:'Liberation Sans', sans-serif;font-size:14.00px;font-weight:400;color:#1c1c1c;line-height:1;white-space:pre;transform:scaleX(1.0600);transform-origin:0 0;">15,653</div>
<div style="left:1821.90px;top:1523.10px;font-family:'Liberation Sans', sans-serif;font-size:14.00px;font-weight:400;color:#1c1c1c;line-height:1;white-space:pre;transform:scaleX(1.0600);transform-origin:0 0;">16,133</div>
<div style="left:1940.90px;top:1523.10px;font-family:'Liberation Sans', sans-serif;font-size:14.00px;font-weight:400;color:#1c1c1c;line-height:1;white-space:pre;transform:scaleX(1.0600);transform-origin:0 0;">17,425</div>
<div style="left:2059.90px;top:1523.10px;font-family:'Liberation Sans', sans-serif;font-size:14.00px;font-weight:400;color:#1c1c1c;line-height:1;white-space:pre;transform:scaleX(1.0600);transform-origin:0 0;">17,610</div>
<div style="left:2178.90px;top:1523.10px;font-family:'Liberation Sans', sans-serif;font-size:14.00px;font-weight:400;color:#1c1c1c;line-height:1;white-space:pre;transform:scaleX(1.0600);transform-origin:0 0;">18,950</div>
<div style="left:2297.90px;top:1523.10px;font-family:'Liberation Sans', sans-serif;font-size:14.00px;font-weight:400;color:#1c1c1c;line-height:1;white-space:pre;transform:scaleX(1.0600);transform-origin:0 0;">30,359</div>
<div style="left:2416.90px;top:1523.10px;font-family:'Liberation Sans', sans-serif;font-size:14.00px;font-weight:400;color:#1c1c1c;line-height:1;white-space:pre;transform:scaleX(1.0600);transform-origin:0 0;">40,464</div>
<div style="left:2535.90px;top:1523.10px;font-family:'Liberation Sans', sans-serif;font-size:14.00px;font-weight:400;color:#1c1c1c;line-height:1;white-space:pre;transform:scaleX(1.0600);transform-origin:0 0;">48,514</div>
<div style="left:2654.90px;top:1523.10px;font-family:'Liberation Sans', sans-serif;font-size:14.00px;font-weight:400;color:#1c1c1c;line-height:1;white-space:pre;transform:scaleX(1.0600);transform-origin:0 0;">48,826</div>
<div style="left:2773.90px;top:1523.10px;font-family:'Liberation Sans', sans-serif;font-size:14.00px;font-weight:400;color:#1c1c1c;line-height:1;white-space:pre;transform:scaleX(1.0600);transform-origin:0 0;">53,925</div>
<div style="left:866.12px;top:1543.40px;font-family:'Liberation Sans', sans-serif;font-size:14.00px;font-weight:400;color:#1c1c1c;line-height:1;white-space:pre;transform:scaleX(1.0600);transform-origin:0 0;">(11,304)</div>
<div style="left:984.01px;top:1543.40px;font-family:'Liberation Sans', sans-serif;font-size:14.00px;font-weight:400;color:#1c1c1c;line-height:1;white-space:pre;transform:scaleX(1.0600);transform-origin:0 0;">(19,680)</div>
<div style="left:1103.01px;top:1543.40px;font-family:'Liberation Sans', sans-serif;font-size:14.00px;font-weight:400;color:#1c1c1c;line-height:1;white-space:pre;transform:scaleX(1.0600);transform-origin:0 0;">(21,798)</div>
<div style="left:1222.01px;top:1543.40px;font-family:'Liberation Sans', sans-serif;font-size:14.00px;font-weight:400;color:#1c1c1c;line-height:1;white-space:pre;transform:scaleX(1.0600);transform-origin:0 0;">(20,626)</div>
<div style="left:1341.01px;top:1543.40px;font-family:'Liberation Sans', sans-serif;font-size:14.00px;font-weight:400;color:#1c1c1c;line-height:1;white-space:pre;transform:scaleX(1.0600);transform-origin:0 0;">(21,377)</div>
<div style="left:1460.01px;top:1543.40px;font-family:'Liberation Sans', sans-serif;font-size:14.00px;font-weight:400;color:#1c1c1c;line-height:1;white-space:pre;transform:scaleX(1.0600);transform-origin:0 0;">(20,888)</div>
<div style="left:1579.01px;top:1543.40px;font-family:'Liberation Sans', sans-serif;font-size:14.00px;font-weight:400;color:#1c1c1c;line-height:1;white-space:pre;transform:scaleX(1.0600);transform-origin:0 0;">(23,132)</div>
<div style="left:1698.01px;top:1543.40px;font-family:'Liberation Sans', sans-serif;font-size:14.00px;font-weight:400;color:#1c1c1c;line-height:1;white-space:pre;transform:scaleX(1.0600);transform-origin:0 0;">(24,349)</div>
<div style="left:1817.01px;top:1543.40px;font-family:'Liberation Sans', sans-serif;font-size:14.00px;font-weight:400;color:#1c1c1c;line-height:1;white-space:pre;transform:scaleX(1.0600);transform-origin:0 0;">(24,122)</div>
<div style="left:1936.01px;top:1543.40px;font-family:'Liberation Sans', sans-serif;font-size:14.00px;font-weight:400;color:#1c1c1c;line-height:1;white-space:pre;transform:scaleX(1.0600);transform-origin:0 0;">(24,971)</div>
<div style="left:2055.01px;top:1543.40px;font-family:'Liberation Sans', sans-serif;font-size:14.00px;font-weight:400;color:#1c1c1c;line-height:1;white-space:pre;transform:scaleX(1.0600);transform-origin:0 0;">(24,383)</div>
<div style="left:2174.01px;top:1543.40px;font-family:'Liberation Sans', sans-serif;font-size:14.00px;font-weight:400;color:#1c1c1c;line-height:1;white-space:pre;transform:scaleX(1.0600);transform-origin:0 0;">(25,235)</div>
<div style="left:2293.01px;top:1543.40px;font-family:'Liberation Sans', sans-serif;font-size:14.00px;font-weight:400;color:#1c1c1c;line-height:1;white-space:pre;transform:scaleX(1.0600);transform-origin:0 0;">(37,416)</div>
<div style="left:2412.01px;top:1543.40px;font-family:'Liberation Sans', sans-serif;font-size:14.00px;font-weight:400;color:#1c1c1c;line-height:1;white-space:pre;transform:scaleX(1.0600);transform-origin:0 0;">(44,978)</div>
<div style="left:2531.01px;top:1543.40px;font-family:'Liberation Sans', sans-serif;font-size:14.00px;font-weight:400;color:#1c1c1c;line-height:1;white-space:pre;transform:scaleX(1.0600);transform-origin:0 0;">(49,861)</div>
<div style="left:2650.01px;top:1543.40px;font-family:'Liberation Sans', sans-serif;font-size:14.00px;font-weight:400;color:#1c1c1c;line-height:1;white-space:pre;transform:scaleX(1.0600);transform-origin:0 0;">(47,613)</div>
<div style="left:2769.01px;top:1543.40px;font-family:'Liberation Sans', sans-serif;font-size:14.00px;font-weight:400;color:#1c1c1c;line-height:1;white-space:pre;transform:scaleX(1.0600);transform-origin:0 0;">(49,540)</div>
<div style="left:861.65px;top:1563.40px;font-family:'Liberation Sans', sans-serif;font-size:14.00px;font-weight:400;color:#1c1c1c;line-height:1;white-space:pre;transform:scaleX(1.0600);transform-origin:0 0;">886,250</div>
<div style="left:984.01px;top:1563.40px;font-family:'Liberation Sans', sans-serif;font-size:14.00px;font-weight:400;color:#1c1c1c;line-height:1;white-space:pre;transform:scaleX(1.0600);transform-origin:0 0;">(16,629)</div>
<div style="left:1107.90px;top:1563.40px;font-family:'Liberation Sans', sans-serif;font-size:14.00px;font-weight:400;color:#1c1c1c;line-height:1;white-space:pre;transform:scaleX(1.0600);transform-origin:0 0;">79,031</div>
<div style="left:1223.12px;top:1563.40px;font-family:'Liberation Sans', sans-serif;font-size:14.00px;font-weight:400;color:#1c1c1c;line-height:1;white-space:pre;transform:scaleX(1.0600);transform-origin:0 0;">(11,353)</div>
<div style="left:1349.28px;top:1563.40px;font-family:'Liberation Sans', sans-serif;font-size:14.00px;font-weight:400;color:#1c1c1c;line-height:1;white-space:pre;transform:scaleX(1.0600);transform-origin:0 0;">(9,434)</div>
<div style="left:1460.01px;top:1563.40px;font-family:'Liberation Sans', sans-serif;font-size:14.00px;font-weight:400;color:#1c1c1c;line-height:1;white-space:pre;transform:scaleX(1.0600);transform-origin:0 0;">(10,637)</div>
<div style="left:1580.12px;top:1563.40px;font-family:'Liberation Sans', sans-serif;font-size:14.00px;font-weight:400;color:#1c1c1c;line-height:1;white-space:pre;transform:scaleX(1.0600);transform-origin:0 0;">(11,662)</div>
<div style="left:1699.12px;top:1563.40px;font-family:'Liberation Sans', sans-serif;font-size:14.00px;font-weight:400;color:#1c1c1c;line-height:1;white-space:pre;transform:scaleX(1.0600);transform-origin:0 0;">(11,363)</div>
<div style="left:1825.28px;top:1563.40px;font-family:'Liberation Sans', sans-serif;font-size:14.00px;font-weight:400;color:#1c1c1c;line-height:1;white-space:pre;transform:scaleX(1.0600);transform-origin:0 0;">(9,655)</div>
<div style="left:1944.28px;top:1563.40px;font-family:'Liberation Sans', sans-serif;font-size:14.00px;font-weight:400;color:#1c1c1c;line-height:1;white-space:pre;transform:scaleX(1.0600);transform-origin:0 0;">(9,213)</div>
<div style="left:2063.28px;top:1563.40px;font-family:'Liberation Sans', sans-serif;font-size:14.00px;font-weight:400;color:#1c1c1c;line-height:1;white-space:pre;transform:scaleX(1.0600);transform-origin:0 0;">(8,440)</div>
<div style="left:2182.28px;top:1563.40px;font-family:'Liberation Sans', sans-serif;font-size:14.00px;font-weight:400;color:#1c1c1c;line-height:1;white-space:pre;transform:scaleX(1.0600);transform-origin:0 0;">(7,951)</div>
<div style="left:2293.01px;top:1563.40px;font-family:'Liberation Sans', sans-serif;font-size:14.00px;font-weight:400;color:#1c1c1c;line-height:1;white-space:pre;transform:scaleX(1.0600);transform-origin:0 0;">(10,827)</div>
<div style="left:2420.28px;top:1563.40px;font-family:'Liberation Sans', sans-serif;font-size:14.00px;font-weight:400;color:#1c1c1c;line-height:1;white-space:pre;transform:scaleX(1.0600);transform-origin:0 0;">(8,294)</div>
<div style="left:2539.28px;top:1563.40px;font-family:'Liberation Sans', sans-serif;font-size:14.00px;font-weight:400;color:#1c1c1c;line-height:1;white-space:pre;transform:scaleX(1.0600);transform-origin:0 0;">(5,137)</div>
<div style="left:2658.28px;top:1563.40px;font-family:'Liberation Sans', sans-serif;font-size:14.00px;font-weight:400;color:#1c1c1c;line-height:1;white-space:pre;transform:scaleX(1.0600);transform-origin:0 0;">(2,588)</div>
<div style="left:2794.54px;top:1563.40px;font-family:'Liberation Sans', sans-serif;font-size:14.00px;font-weight:400;color:#1c1c1c;line-height:1;white-space:pre;transform:scaleX(1.0600);transform-origin:0 0;">573</div>
<div style="left:873.28px;top:1583.20px;font-family:'Liberation Sans', sans-serif;font-size:14.00px;font-weight:400;color:#1c1c1c;line-height:1;white-space:pre;transform:scaleX(1.0600);transform-origin:0 0;">(1,000)</div>
<div style="left:992.28px;top:1583.20px;font-family:'Liberation Sans', sans-serif;font-size:14.00px;font-weight:400;color:#1c1c1c;line-height:1;white-space:pre;transform:scaleX(1.0600);transform-origin:0 0;">(1,000)</div>
<div style="left:1111.28px;top:1583.20px;font-family:'Liberation Sans', sans-serif;font-size:14.00px;font-weight:400;color:#1c1c1c;line-height:1;white-space:pre;transform:scaleX(1.0600);transform-origin:0 0;">(1,667)</div>
<div style="left:1230.28px;top:1583.20px;font-family:'Liberation Sans', sans-serif;font-size:14.00px;font-weight:400;color:#1c1c1c;line-height:1;white-space:pre;transform:scaleX(1.0600);transform-origin:0 0;">(1,656)</div>
<div style="left:1349.28px;top:1583.20px;font-family:'Liberation Sans', sans-serif;font-size:14.00px;font-weight:400;color:#1c1c1c;line-height:1;white-space:pre;transform:scaleX(1.0600);transform-origin:0 0;">(1,644)</div>
<div style="left:1468.28px;top:1583.20px;font-family:'Liberation Sans', sans-serif;font-size:14.00px;font-weight:400;color:#1c1c1c;line-height:1;white-space:pre;transform:scaleX(1.0600);transform-origin:0 0;">(1,633)</div>
<div style="left:1587.28px;top:1583.20px;font-family:'Liberation Sans', sans-serif;font-size:14.00px;font-weight:400;color:#1c1c1c;line-height:1;white-space:pre;transform:scaleX(1.0600);transform-origin:0 0;">(1,622)</div>
<div style="left:1707.37px;top:1583.20px;font-family:'Liberation Sans', sans-serif;font-size:14.00px;font-weight:400;color:#1c1c1c;line-height:1;white-space:pre;transform:scaleX(1.0600);transform-origin:0 0;">(1,611)</div>
<div style="left:1825.28px;top:1583.20px;font-family:'Liberation Sans', sans-serif;font-size:14.00px;font-weight:400;color:#1c1c1c;line-height:1;white-space:pre;transform:scaleX(1.0600);transform-origin:0 0;">(1,600)</div>
<div style="left:1944.28px;top:1583.20px;font-family:'Liberation Sans', sans-serif;font-size:14.00px;font-weight:400;color:#1c1c1c;line-height:1;white-space:pre;transform:scaleX(1.0600);transform-origin:0 0;">(1,589)</div>
<div style="left:2063.28px;top:1583.20px;font-family:'Liberation Sans', sans-serif;font-size:14.00px;font-weight:400;color:#1c1c1c;line-height:1;white-space:pre;transform:scaleX(1.0600);transform-origin:0 0;">(1,578)</div>
<div style="left:2182.28px;top:1583.20px;font-family:'Liberation Sans', sans-serif;font-size:14.00px;font-weight:400;color:#1c1c1c;line-height:1;white-space:pre;transform:scaleX(1.0600);transform-origin:0 0;">(1,567)</div>
<div style="left:2301.28px;top:1583.20px;font-family:'Liberation Sans', sans-serif;font-size:14.00px;font-weight:400;color:#1c1c1c;line-height:1;white-space:pre;transform:scaleX(1.0600);transform-origin:0 0;">(1,556)</div>
<div style="left:2420.28px;top:1583.20px;font-family:'Liberation Sans', sans-serif;font-size:14.00px;font-weight:400;color:#1c1c1c;line-height:1;white-space:pre;transform:scaleX(1.0600);transform-origin:0 0;">(1,534)</div>
<div style="left:2539.28px;top:1583.20px;font-family:'Liberation Sans', sans-serif;font-size:14.00px;font-weight:400;color:#1c1c1c;line-height:1;white-space:pre;transform:scaleX(1.0600);transform-origin:0 0;">(1,512)</div>
<div style="left:2658.28px;top:1583.20px;font-family:'Liberation Sans', sans-serif;font-size:14.00px;font-weight:400;color:#1c1c1c;line-height:1;white-space:pre;transform:scaleX(1.0600);transform-origin:0 0;">(1,491)</div>
<div style="left:2777.28px;top:1583.20px;font-family:'Liberation Sans', sans-serif;font-size:14.00px;font-weight:400;color:#1c1c1c;line-height:1;white-space:pre;transform:scaleX(1.0600);transform-origin:0 0;">(1,469)</div>
<div style="left:910.35px;top:1603.10px;font-family:'Liberation Sans', sans-serif;font-size:14.00px;font-weight:400;color:#1c1c1c;line-height:1;white-space:pre;transform:scaleX(1.0600);transform-origin:0 0;">-</div>
<div style="left:1029.35px;top:1603.10px;font-family:'Liberation Sans', sans-serif;font-size:14.00px;font-weight:400;color:#1c1c1c;line-height:1;white-space:pre;transform:scaleX(1.0600);transform-origin:0 0;">-</div>
<div style="left:1148.35px;top:1603.10px;font-family:'Liberation Sans', sans-serif;font-size:14.00px;font-weight:400;color:#1c1c1c;line-height:1;white-space:pre;transform:scaleX(1.0600);transform-origin:0 0;">-</div>
<div style="left:1267.35px;top:1603.10px;font-family:'Liberation Sans', sans-serif;font-size:14.00px;font-weight:400;color:#1c1c1c;line-height:1;white-space:pre;transform:scaleX(1.0600);transform-origin:0 0;">-</div>
<div style="left:1386.35px;top:1603.10px;font-family:'Liberation Sans', sans-serif;font-size:14.00px;font-weight:400;color:#1c1c1c;line-height:1;white-space:pre;transform:scaleX(1.0600);transform-origin:0 0;">-</div>
<div style="left:1505.35px;top:1603.10px;font-family:'Liberation Sans', sans-serif;font-size:14.00px;font-weight:400;color:#1c1c1c;line-height:1;white-space:pre;transform:scaleX(1.0600);transform-origin:0 0;">-</div>
<div style="left:1624.35px;top:1603.10px;font-family:'Liberation Sans', sans-serif;font-size:14.00px;font-weight:400;color:#1c1c1c;line-height:1;white-space:pre;transform:scaleX(1.0600);transform-origin:0 0;">-</div>
<div style="left:1743.35px;top:1603.10px;font-family:'Liberation Sans', sans-serif;font-size:14.00px;font-weight:400;color:#1c1c1c;line-height:1;white-space:pre;transform:scaleX(1.0600);transform-origin:0 0;">-</div>
<div style="left:1862.35px;top:1603.10px;font-family:'Liberation Sans', sans-serif;font-size:14.00px;font-weight:400;color:#1c1c1c;line-height:1;white-space:pre;transform:scaleX(1.0600);transform-origin:0 0;">-</div>
<div style="left:1981.35px;top:1603.10px;font-family:'Liberation Sans', sans-serif;font-size:14.00px;font-weight:400;color:#1c1c1c;line-height:1;white-space:pre;transform:scaleX(1.0600);transform-origin:0 0;">-</div>
<div style="left:2100.35px;top:1603.10px;font-family:'Liberation Sans', sans-serif;font-size:14.00px;font-weight:400;color:#1c1c1c;line-height:1;white-space:pre;transform:scaleX(1.0600);transform-origin:0 0;">-</div>
<div style="left:2219.35px;top:1603.10px;font-family:'Liberation Sans', sans-serif;font-size:14.00px;font-weight:400;color:#1c1c1c;line-height:1;white-space:pre;transform:scaleX(1.0600);transform-origin:0 0;">-</div>
<div style="left:2338.35px;top:1603.10px;font-family:'Liberation Sans', sans-serif;font-size:14.00px;font-weight:400;color:#1c1c1c;line-height:1;white-space:pre;transform:scaleX(1.0600);transform-origin:0 0;">-</div>
<div style="left:2457.35px;top:1603.10px;font-family:'Liberation Sans', sans-serif;font-size:14.00px;font-weight:400;color:#1c1c1c;line-height:1;white-space:pre;transform:scaleX(1.0600);transform-origin:0 0;">-</div>
<div style="left:2576.35px;top:1603.10px;font-family:'Liberation Sans', sans-serif;font-size:14.00px;font-weight:400;color:#1c1c1c;line-height:1;white-space:pre;transform:scaleX(1.0600);transform-origin:0 0;">-</div>
<div style="left:2670.65px;top:1603.10px;font-family:'Liberation Sans', sans-serif;font-size:14.00px;font-weight:400;color:#1c1c1c;line-height:1;white-space:pre;transform:scaleX(1.0600);transform-origin:0 0;">(259)</div>
<div style="left:2789.65px;top:1603.10px;font-family:'Liberation Sans', sans-serif;font-size:14.00px;font-weight:400;color:#1c1c1c;line-height:1;white-space:pre;transform:scaleX(1.0600);transform-origin:0 0;">(878)</div>
<div style="left:845.99px;top:1621.77px;font-family:'Liberation Serif', serif;font-size:17.50px;font-weight:700;color:#ffffff;line-height:1;white-space:pre;transform:scaleX(1.1500);transform-origin:0 0;">885,250</div>
<div style="left:969.05px;top:1621.77px;font-family:'Liberation Serif', serif;font-size:17.50px;font-weight:700;color:#ffffff;line-height:1;white-space:pre;transform:scaleX(1.1500);transform-origin:0 0;">(17,629)</div>
<div style="left:1094.06px;top:1621.77px;font-family:'Liberation Serif', serif;font-size:17.50px;font-weight:700;color:#ffffff;line-height:1;white-space:pre;transform:scaleX(1.1500);transform-origin:0 0;">77,365</div>
<div style="left:1207.05px;top:1621.77px;font-family:'Liberation Serif', serif;font-size:17.50px;font-weight:700;color:#ffffff;line-height:1;white-space:pre;transform:scaleX(1.1500);transform-origin:0 0;">(13,009)</div>
<div style="left:1327.15px;top:1621.77px;font-family:'Liberation Serif', serif;font-size:17.50px;font-weight:700;color:#ffffff;line-height:1;white-space:pre;transform:scaleX(1.1500);transform-origin:0 0;">(11,078)</div>
<div style="left:1445.05px;top:1621.77px;font-family:'Liberation Serif', serif;font-size:17.50px;font-weight:700;color:#ffffff;line-height:1;white-space:pre;transform:scaleX(1.1500);transform-origin:0 0;">(12,271)</div>
<div style="left:1564.05px;top:1621.77px;font-family:'Liberation Serif', serif;font-size:17.50px;font-weight:700;color:#ffffff;line-height:1;white-space:pre;transform:scaleX(1.1500);transform-origin:0 0;">(13,284)</div>
<div style="left:1683.05px;top:1621.77px;font-family:'Liberation Serif', serif;font-size:17.50px;font-weight:700;color:#ffffff;line-height:1;white-space:pre;transform:scaleX(1.1500);transform-origin:0 0;">(12,974)</div>
<div style="left:1803.15px;top:1621.77px;font-family:'Liberation Serif', serif;font-size:17.50px;font-weight:700;color:#ffffff;line-height:1;white-space:pre;transform:scaleX(1.1500);transform-origin:0 0;">(11,255)</div>
<div style="left:1921.05px;top:1621.77px;font-family:'Liberation Serif', serif;font-size:17.50px;font-weight:700;color:#ffffff;line-height:1;white-space:pre;transform:scaleX(1.1500);transform-origin:0 0;">(10,802)</div>
<div style="left:2040.05px;top:1621.77px;font-family:'Liberation Serif', serif;font-size:17.50px;font-weight:700;color:#ffffff;line-height:1;white-space:pre;transform:scaleX(1.1500);transform-origin:0 0;">(10,017)</div>
<div style="left:2169.11px;top:1621.77px;font-family:'Liberation Serif', serif;font-size:17.50px;font-weight:700;color:#ffffff;line-height:1;white-space:pre;transform:scaleX(1.1500);transform-origin:0 0;">(9,518)</div>
<div style="left:2278.05px;top:1621.77px;font-family:'Liberation Serif', serif;font-size:17.50px;font-weight:700;color:#ffffff;line-height:1;white-space:pre;transform:scaleX(1.1500);transform-origin:0 0;">(12,382)</div>
<div style="left:2407.11px;top:1621.77px;font-family:'Liberation Serif', serif;font-size:17.50px;font-weight:700;color:#ffffff;line-height:1;white-space:pre;transform:scaleX(1.1500);transform-origin:0 0;">(9,828)</div>
<div style="left:2526.11px;top:1621.77px;font-family:'Liberation Serif', serif;font-size:17.50px;font-weight:700;color:#ffffff;line-height:1;white-space:pre;transform:scaleX(1.1500);transform-origin:0 0;">(6,649)</div>
<div style="left:2645.11px;top:1621.77px;font-family:'Liberation Serif', serif;font-size:17.50px;font-weight:700;color:#ffffff;line-height:1;white-space:pre;transform:scaleX(1.1500);transform-origin:0 0;">(4,338)</div>
<div style="left:2764.11px;top:1621.77px;font-family:'Liberation Serif', serif;font-size:17.50px;font-weight:700;color:#ffffff;line-height:1;white-space:pre;transform:scaleX(1.1500);transform-origin:0 0;">(1,773)</div>
<div style="left:786.17px;top:1384.42px;font-family:'Liberation Sans', sans-serif;font-size:17.50px;font-weight:400;color:#ffffff;line-height:1;white-space:pre;">-</div>
<div style="left:2860.00px;top:278.00px;width:31.00px;height:1392.00px;background:#131313;"></div>
<svg style="left:2867.00px;top:284.00px;" width="18.00" height="14.00" viewBox="0 0 18.00 14.00"><path d="M2 12 L9 2.5 L16 12 Z" fill="#9a9a9a" stroke="#9a9a9a" stroke-width="1.5" stroke-linejoin="round"/></svg>
<div style="left:2869.70px;top:304.00px;width:12.40px;height:1028.00px;background:#9a9a9a;border-radius:6.2px;"></div>
<svg style="left:2867.00px;top:1652.00px;" width="18.00" height="14.00" viewBox="0 0 18.00 14.00"><path d="M2 2.5 L9 12 L16 2.5 Z" fill="#9a9a9a" stroke="#9a9a9a" stroke-width="1.5" stroke-linejoin="round"/></svg>
<div style="left:11.00px;top:1670.00px;width:2880.00px;height:48.00px;background:#0e0e0e;"></div>
<div style="left:11.00px;top:1718.00px;width:2880.00px;height:1.00px;background:#2e2e2e;"></div>
<div style="left:11.00px;top:1719.00px;width:2880.00px;height:32.00px;background:#141414;"></div>
<svg style="left:42.00px;top:1684.00px;" width="14.00" height="18.00" viewBox="0 0 14.00 18.00"><polyline points="11,2 3.5,9 11,16" fill="none" stroke="#a8a8a8" stroke-width="1.5"/></svg>
<svg style="left:91.00px;top:1684.00px;" width="14.00" height="18.00" viewBox="0 0 14.00 18.00"><polyline points="3,2 10.5,9 3,16" fill="none" stroke="#a8a8a8" stroke-width="1.5"/></svg>
<div style="left:190.70px;top:1685.58px;font-family:'Liberation Sans', sans-serif;font-size:20.50px;font-weight:400;color:#ffffff;line-height:1;white-space:pre;transform:scaleX(0.9907);transform-origin:0 0;">Contents</div>
<div style="left:292.00px;top:1680.30px;width:1.00px;height:27.50px;background:#6a6a6a;"></div>
<div style="left:433.00px;top:1680.30px;width:1.00px;height:27.50px;background:#6a6a6a;"></div>
<div style="left:552.10px;top:1680.30px;width:1.00px;height:27.50px;background:#6a6a6a;"></div>
<div style="left:722.50px;top:1680.30px;width:1.00px;height:27.50px;background:#6a6a6a;"></div>
<div style="left:824.80px;top:1680.30px;width:1.00px;height:27.50px;background:#6a6a6a;"></div>
<div style="left:924.80px;top:1680.30px;width:1.00px;height:27.50px;background:#6a6a6a;"></div>
<div style="left:1050.80px;top:1680.30px;width:1.00px;height:27.50px;background:#6a6a6a;"></div>
<div style="left:1153.65px;top:1680.30px;width:1.00px;height:27.50px;background:#6a6a6a;"></div>
<div style="left:1331.00px;top:1680.30px;width:1.00px;height:27.50px;background:#6a6a6a;"></div>
<div style="left:1458.70px;top:1680.30px;width:1.00px;height:27.50px;background:#6a6a6a;"></div>
<div style="left:1586.55px;top:1680.30px;width:1.00px;height:27.50px;background:#6a6a6a;"></div>
<div style="left:1713.80px;top:1680.30px;width:1.00px;height:27.50px;background:#6a6a6a;"></div>
<div style="left:1774.65px;top:1680.30px;width:1.00px;height:27.50px;background:#6a6a6a;"></div>
<div style="left:1859.90px;top:1680.30px;width:1.00px;height:27.50px;background:#6a6a6a;"></div>
<div style="left:1957.70px;top:1680.30px;width:1.00px;height:27.50px;background:#6a6a6a;"></div>
<div style="left:1209.20px;top:1680.30px;width:1.00px;height:27.50px;background:#6a6a6a;"></div>
<div style="left:1270.00px;top:1680.30px;width:1.00px;height:27.50px;background:#6a6a6a;"></div>
<div style="left:2034.80px;top:1680.30px;width:1.00px;height:27.50px;background:#6a6a6a;"></div>
<div style="left:299.10px;top:1676.00px;width:127.70px;height:35.80px;background:#feea6a;border-radius:6px;"></div>
<div style="left:313.50px;top:1685.08px;font-family:'Liberation Sans', sans-serif;font-size:20.50px;font-weight:400;color:#0d0d0d;line-height:1;white-space:pre;transform:scaleX(0.9861);transform-origin:0 0;">Dashboard</div>
<div style="left:440.20px;top:1676.00px;width:105.70px;height:35.80px;background:#feea6a;border-radius:6px;"></div>
<div style="left:453.04px;top:1685.08px;font-family:'Liberation Sans', sans-serif;font-size:20.50px;font-weight:400;color:#0d0d0d;line-height:1;white-space:pre;transform:scaleX(0.9750);transform-origin:0 0;">Revenue</div>
<div style="left:559.30px;top:1676.00px;width:157.00px;height:35.80px;background:#feea6a;border-radius:6px;"></div>
<div style="left:568.38px;top:1685.08px;font-family:'Liberation Sans', sans-serif;font-size:20.50px;font-weight:400;color:#0d0d0d;line-height:1;white-space:pre;transform:scaleX(0.9750);transform-origin:0 0;">COGS &amp; OPEX</div>
<div style="left:729.70px;top:1676.00px;width:88.90px;height:35.80px;background:#feea6a;border-radius:6px;"></div>
<div style="left:743.60px;top:1685.08px;font-family:'Liberation Sans', sans-serif;font-size:20.50px;font-weight:400;color:#0d0d0d;line-height:1;white-space:pre;transform:scaleX(0.9750);transform-origin:0 0;">Payroll</div>
<div style="left:832.00px;top:1676.00px;width:86.40px;height:35.80px;background:#feea6a;border-radius:6px;"></div>
<div style="left:841.32px;top:1685.08px;font-family:'Liberation Sans', sans-serif;font-size:20.50px;font-weight:400;color:#0d0d0d;line-height:1;white-space:pre;transform:scaleX(0.9750);transform-origin:0 0;">CAPEX</div>
<div style="left:932.20px;top:1676.00px;width:112.40px;height:35.80px;background:#feea6a;border-radius:6px;"></div>
<div style="left:946.17px;top:1685.08px;font-family:'Liberation Sans', sans-serif;font-size:20.50px;font-weight:400;color:#0d0d0d;line-height:1;white-space:pre;transform:scaleX(0.9750);transform-origin:0 0;">CapTable</div>
<div style="left:1058.00px;top:1676.00px;width:89.30px;height:35.80px;background:#feea6a;border-radius:6px;"></div>
<div style="left:1071.54px;top:1685.08px;font-family:'Liberation Sans', sans-serif;font-size:20.50px;font-weight:400;color:#0d0d0d;line-height:1;white-space:pre;transform:scaleX(0.9750);transform-origin:0 0;">Capital</div>
<div style="left:1161.00px;top:1676.00px;width:42.20px;height:35.80px;background:#4ab0e6;border-radius:6px;"></div>
<div style="left:1172.65px;top:1685.08px;font-family:'Liberation Sans', sans-serif;font-size:20.50px;font-weight:400;color:#0d0d0d;line-height:1;white-space:pre;transform:scaleX(0.9750);transform-origin:0 0;">IS</div>
<div style="left:1207.70px;top:1670.00px;width:64.30px;height:9.00px;background:#ffffff;"></div>
<div style="left:1207.70px;top:1670.00px;width:8.00px;height:9.00px;background:#0e0e0e;border-top-right-radius:8px;"></div>
<div style="left:1264.00px;top:1670.00px;width:8.00px;height:9.00px;background:#0e0e0e;border-top-left-radius:8px;"></div>
<div style="left:1215.70px;top:1670.00px;width:48.30px;height:42.00px;background:linear-gradient(#ffffff 15%, #cfe5f6);border-radius:0 0 6px 6px;"></div>
<div style="left:1227.83px;top:1680.28px;font-family:'Liberation Sans', sans-serif;font-size:20.50px;font-weight:400;color:#111;line-height:1;white-space:pre;transform:scaleX(0.8800);transform-origin:0 0;">CF</div>
<div style="left:1228.00px;top:1705.00px;width:24.00px;height:3.00px;background:#1f7a45;"></div>
<div style="left:1277.00px;top:1676.00px;width:48.00px;height:35.80px;background:#4ab0e6;border-radius:6px;"></div>
<div style="left:1287.66px;top:1685.08px;font-family:'Liberation Sans', sans-serif;font-size:20.50px;font-weight:400;color:#0d0d0d;line-height:1;white-space:pre;transform:scaleX(0.9750);transform-origin:0 0;">BS</div>
<div style="left:1338.00px;top:1676.00px;width:114.50px;height:35.80px;background:#4ab0e6;border-radius:6px;"></div>
<div style="left:1350.80px;top:1685.08px;font-family:'Liberation Sans', sans-serif;font-size:20.50px;font-weight:400;color:#0d0d0d;line-height:1;white-space:pre;transform:scaleX(0.9750);transform-origin:0 0;">Scenarios</div>
<div style="left:1465.90px;top:1676.00px;width:114.50px;height:35.80px;background:#4ab0e6;border-radius:6px;"></div>
<div style="left:1482.22px;top:1685.08px;font-family:'Liberation Sans', sans-serif;font-size:20.50px;font-weight:400;color:#0d0d0d;line-height:1;white-space:pre;transform:scaleX(0.9750);transform-origin:0 0;">Valuation</div>
<div style="left:1593.70px;top:1676.00px;width:113.70px;height:35.80px;background:#4ab0e6;border-radius:6px;"></div>
<div style="left:1607.79px;top:1685.08px;font-family:'Liberation Sans', sans-serif;font-size:20.50px;font-weight:400;color:#0d0d0d;line-height:1;white-space:pre;transform:scaleX(0.9750);transform-origin:0 0;">Summary</div>
<div style="left:1721.20px;top:1676.00px;width:47.10px;height:35.80px;background:#4ab0e6;border-radius:6px;"></div>
<div style="left:1731.41px;top:1685.08px;font-family:'Liberation Sans', sans-serif;font-size:20.50px;font-weight:400;color:#0d0d0d;line-height:1;white-space:pre;transform:scaleX(0.9750);transform-origin:0 0;">BE</div>
<div style="left:1782.00px;top:1676.00px;width:71.50px;height:35.80px;background:#4ab0e6;border-radius:6px;"></div>
<div style="left:1792.77px;top:1685.08px;font-family:'Liberation Sans', sans-serif;font-size:20.50px;font-weight:400;color:#0d0d0d;line-height:1;white-space:pre;transform:scaleX(0.9750);transform-origin:0 0;">ROIC</div>
<div style="left:1867.30px;top:1676.00px;width:84.40px;height:35.80px;background:#4ab0e6;border-radius:6px;"></div>
<div style="left:1880.06px;top:1685.08px;font-family:'Liberation Sans', sans-serif;font-size:20.50px;font-weight:400;color:#0d0d0d;line-height:1;white-space:pre;transform:scaleX(0.9750);transform-origin:0 0;">Charts</div>
<div style="left:1964.70px;top:1676.00px;width:63.70px;height:35.80px;background:#4ab0e6;border-radius:6px;"></div>
<div style="left:1975.44px;top:1685.08px;font-family:'Liberation Sans', sans-serif;font-size:20.50px;font-weight:400;color:#0d0d0d;line-height:1;white-space:pre;transform:scaleX(0.9750);transform-origin:0 0;">KPIs</div>
<div style="left:2042.00px;top:1676.00px;width:29.70px;height:35.80px;background:#4ab0e6;border-radius:6px 0 0 6px;"></div>
<div style="left:2042px;top:1670px;width:29.7px;height:45px;overflow:hidden">
<div style="left:12.30px;top:15.07px;font-family:'Liberation Sans', sans-serif;font-size:20.50px;font-weight:400;color:#0d0d0d;line-height:1;white-space:pre;transform:scaleX(0.9750);transform-origin:0 0;position:absolute;">Sc</div>
</div>
<svg style="left:2086.00px;top:1689.00px;" width="19.00" height="7.00" viewBox="0 0 19.00 7.00"><circle cx="2.8" cy="3.5" r="2.3" fill="#e0e0e0"/><circle cx="9.5" cy="3.5" r="2.3" fill="#e0e0e0"/><circle cx="16.2" cy="3.5" r="2.3" fill="#e0e0e0"/></svg>
<svg style="left:2133.00px;top:1684.00px;" width="20.00" height="19.00" viewBox="0 0 20.00 19.00"><path d="M10 1 V18 M1.5 9.5 H18.5" stroke="#e0e0e0" stroke-width="1.6"/></svg>
<svg style="left:2188.00px;top:1684.00px;" width="7.00" height="19.00" viewBox="0 0 7.00 19.00"><circle cx="3.5" cy="3" r="2" fill="#e0e0e0"/><circle cx="3.5" cy="9.5" r="2" fill="#e0e0e0"/><circle cx="3.5" cy="16" r="2" fill="#e0e0e0"/></svg>
<div style="left:2216.60px;top:1680.00px;width:643.70px;height:26.90px;background:#171717;border-radius:13px;"></div>
<svg style="left:2222.00px;top:1685.00px;" width="14.00" height="16.00" viewBox="0 0 14.00 16.00"><path d="M11.5 2 L2.5 8 L11.5 14 Z" fill="#9a9a9a" stroke="#9a9a9a" stroke-width="1.4" stroke-linejoin="round"/></svg>
<div style="left:2241.70px;top:1686.30px;width:159.60px;height:13.50px;background:#9a9a9a;border-radius:6.75px;"></div>
<svg style="left:2841.00px;top:1685.00px;" width="14.00" height="16.00" viewBox="0 0 14.00 16.00"><path d="M2.5 2 L11.5 8 L2.5 14 Z" fill="#9a9a9a" stroke="#9a9a9a" stroke-width="1.4" stroke-linejoin="round"/></svg>
<div style="left:27.20px;top:1727.47px;font-family:'Liberation Sans', sans-serif;font-size:16.50px;font-weight:400;color:#e8e8e8;line-height:1;white-space:pre;transform:scaleX(0.8930);transform-origin:0 0;">Ready</div>
<svg style="left:98.00px;top:1724.00px;" width="25.00" height="22.00" viewBox="0 0 25.00 22.00"><rect x="1" y="1.5" width="20" height="18" fill="none" stroke="#d0d0d0" stroke-width="1.5"/>
<path d="M1 6 H21 M5 10 H9 M5 14 H9" stroke="#d0d0d0" stroke-width="1.4"/>
<circle cx="16" cy="14.5" r="5.5" fill="#141414" stroke="#d0d0d0" stroke-width="1.5"/><circle cx="16" cy="14.5" r="2" fill="#d0d0d0"/></svg>
<svg style="left:144.00px;top:1723.00px;" width="25.00" height="24.00" viewBox="0 0 25.00 24.00"><circle cx="8" cy="3.5" r="2.3" fill="none" stroke="#d8d8d8" stroke-width="1.4"/>
<path d="M1.5 7.5 L8 9 L14.5 7.5 M8 9 V14 L4 22 M8 14 L11 19" fill="none" stroke="#d8d8d8" stroke-width="1.5"/>
<path d="M13 13 L23 23 M23 13 L13 23" stroke="#d8d8d8" stroke-width="1.5"/></svg>
<div style="left:173.30px;top:1727.47px;font-family:'Liberation Sans', sans-serif;font-size:16.50px;font-weight:700;color:#f0f0f0;line-height:1;white-space:pre;transform:scaleX(0.9489);transform-origin:0 0;">Accessibility: Investigate</div>
<div style="left:2445.40px;top:1719.00px;width:59.90px;height:32.00px;background:#262626;"></div>
<svg style="left:2463.50px;top:1724.50px;" width="22.00" height="21.00" viewBox="0 0 22.00 21.00"><rect x="1" y="1" width="19.5" height="18.5" fill="none" stroke="#e0e0e0" stroke-width="1.6"/><path d="M7.5 1 V19.5 M14 1 V19.5 M1 7.2 H20.5 M1 13.4 H20.5" stroke="#e0e0e0" stroke-width="1.5"/></svg>
<svg style="left:2524.50px;top:1724.50px;" width="22.00" height="21.00" viewBox="0 0 22.00 21.00"><rect x="1" y="1" width="19.5" height="18.5" fill="none" stroke="#e0e0e0" stroke-width="1.6"/><rect x="5" y="4" width="11.5" height="12.5" fill="none" stroke="#e0e0e0" stroke-width="1.4"/><path d="M7.5 8 H14 M7.5 11 H14" stroke="#e0e0e0" stroke-width="1.3"/></svg>
<svg style="left:2584.00px;top:1724.50px;" width="22.00" height="21.00" viewBox="0 0 22.00 21.00"><path d="M1 19.5 V1 H20.5 V19.5" fill="none" stroke="#e0e0e0" stroke-width="1.6"/><path d="M7 1 V12 H14 V1 M1 19.5 H20.5" fill="none" stroke="#e0e0e0" stroke-width="1.6"/></svg>
<div style="left:2633.20px;top:1734.20px;width:11.50px;height:1.50px;background:#e0e0e0;"></div>
<div style="left:2653.20px;top:1734.00px;width:147.60px;height:2.00px;background:#b8b8b8;"></div>
<div style="left:2722.80px;top:1726.00px;width:7.70px;height:17.00px;background:#b8b8b8;border-radius:1.5px;"></div>
<svg style="left:2808.00px;top:1728.50px;" width="13.50" height="13.00" viewBox="0 0 13.50 13.00"><path d="M6.75 0.5 V12.5 M0.5 6.5 H13" stroke="#e0e0e0" stroke-width="1.5"/></svg>
<div style="left:2840.40px;top:1727.53px;font-family:'Liberation Sans', sans-serif;font-size:15.50px;font-weight:400;color:#f0f0f0;line-height:1;white-space:pre;transform:scaleX(0.9759);transform-origin:0 0;">100%</div>
</div></body></html>
